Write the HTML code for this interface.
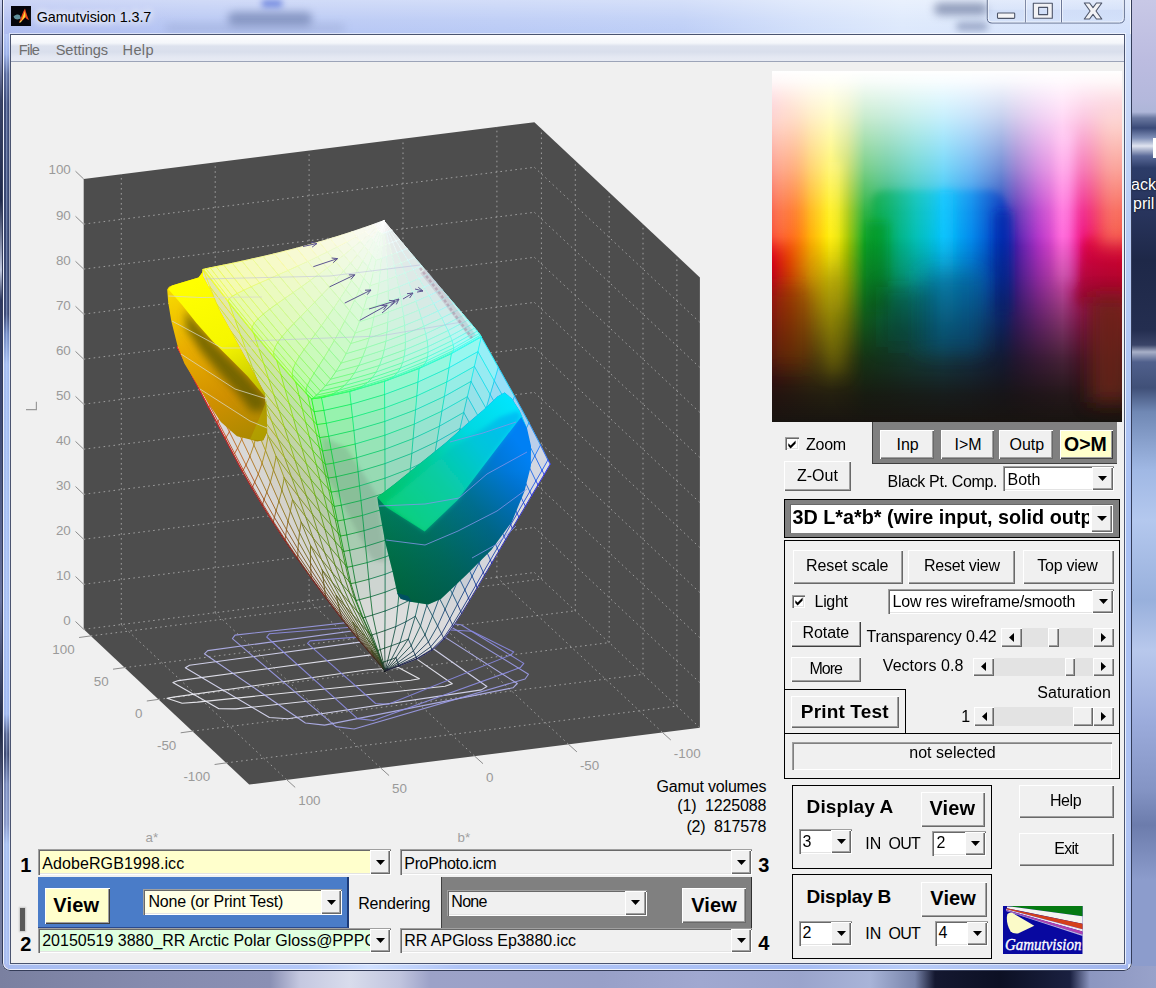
<!DOCTYPE html>
<html><head><meta charset="utf-8"><title>Gamutvision 1.3.7</title>
<style>
html,body{margin:0;padding:0;}
body{width:1156px;height:988px;overflow:hidden;position:relative;background:#8e94b6;font-family:"Liberation Sans",sans-serif;}
.t{position:absolute;white-space:pre;line-height:1;font-family:"Liberation Sans",sans-serif;}
div{box-sizing:border-box;}
svg{display:block;}
</style></head><body>
<div style="position:absolute;left:0.0px;top:0.0px;width:4.0px;height:988.0px;background:linear-gradient(180deg,#c8d0f0 0,#8088b0 60px,#3a4468 100px,#202a4c 200px,#c0c8e0 270px,#303a60 300px,#404a74 420px,#6a74a0 600px,#39415f 690px,#202840 730px,#5a6288 790px,#8088aa 988px);"></div>
<div style="position:absolute;left:1131.0px;top:0.0px;width:25.0px;height:988.0px;background:linear-gradient(180deg,#c8c8e6 0,#bcbce0 60px,#b4b8dc 100px,#aeb6d8 112px,#6a78a0 118px,#3a4a78 128px,#8090b8 138px,#e0e4f0 146px,#5a6a98 156px,#2c3c68 168px,#28345c 215px,#1e2848 260px,#242e50 330px,#3a4468 345px,#a8b0c8 352px,#50608c 362px,#405078 388px,#7088b4 412px,#a0b8e4 470px,#b4c8ee 520px,#98b0dc 600px,#b8c8ec 650px,#9cacdc 720px,#8494c4 790px,#6c7cac 825px,#8c9ccc 880px,#8c9ccc 988px);overflow:hidden;"><div class="t" style="left:0px;top:177px;font-size:16px;color:#fff;text-shadow:0 0 2px #000;">ackup</div><div class="t" style="left:2px;top:196px;font-size:16px;color:#fff;text-shadow:0 0 2px #000;">pril</div><div style="position:absolute;left:22px;top:138px;width:4px;height:20px;background:#fff;"></div></div>
<div style="position:absolute;left:0.0px;top:966.0px;width:1156.0px;height:22.0px;background:linear-gradient(90deg,#7a80a0 0,#858bae 150px,#8a90b4 270px,#c4c8e0 300px,#d8dcec 350px,#c0c4de 400px,#9ca2c8 430px,#98a0c8 600px,#a0a8d0 700px,#9aa4cc 800px,#a8b4d8 870px,#7884aa 915px,#141830 935px,#0c1024 1000px,#1a2040 1070px,#8c96c0 1090px,#98a2ca 1156px);"></div><div style="position:absolute;left:2px;top:-10px;width:1130px;height:981px;border-radius:8px;background:linear-gradient(180deg,rgba(255,255,255,.38) 10px,rgba(255,255,255,.12) 30px,rgba(255,255,255,0) 46px),linear-gradient(90deg,#aebcf0 0,#b4c4f3 200px,#b8c9f5 500px,#bccdf6 680px,#d0defa 800px,#dce8fc 900px,#d2e0fb 1130px);box-shadow:inset 0 0 0 1px #343c58,inset 0 0 0 2px rgba(255,255,255,.75);"></div>
<div style="position:absolute;left:4.0px;top:34.0px;width:6.5px;height:930.0px;background:linear-gradient(90deg,rgba(255,255,255,0) 1.5px,rgba(200,220,255,.4) 2.5px,rgba(255,255,255,0) 4px),linear-gradient(180deg,#b4c4f4 0,#9cb0e8 20px,#5a6a9c 40px,#3e4c7a 70px,#36446f 200px,#3c4a76 280px,#7088c0 300px,#a4bcf0 330px,#a8c0f4 600px,#a0b8f0 680px,#56648f 700px,#3e4a72 720px,#7888b8 750px,#8898c8 790px,#a8c0f0 810px,#a8bcf0 930px);"></div>
<div style="position:absolute;left:1125.5px;top:34.0px;width:5.5px;height:930.0px;background:linear-gradient(180deg,#d0defa,#b8ccf6 200px,#a8c0f4 500px,#b0c4f4 800px,#a8bcf0);"></div>
<div style="position:absolute;left:8.0px;top:963.5px;width:1120.0px;height:5.5px;background:linear-gradient(90deg,#a8bcf0,#b4c8f8 300px,#d0e0ff 360px,#b0c4f6 450px,#a8bef4 800px,#b8ccf8 900px,#a0b4ec 1120px);"></div>
<div style="position:absolute;left:228px;top:12px;width:84px;height:14px;background:#5a6c9c;opacity:.55;filter:blur(4px);border-radius:6px;"></div>
<div style="position:absolute;left:262px;top:0px;width:20px;height:7px;background:#3050d0;opacity:.6;filter:blur(3px);"></div>
<div style="position:absolute;left:934px;top:3px;width:54px;height:12px;background:#56648c;opacity:.6;filter:blur(4px);border-radius:6px;"></div>
<div style="position:absolute;left:956px;top:22px;width:32px;height:9px;background:#6a78a0;opacity:.55;filter:blur(3.5px);border-radius:5px;"></div>
<div style="position:absolute;left:165px;top:24px;width:180px;height:8px;background:#8a98c0;opacity:.35;filter:blur(4px);border-radius:5px;"></div>
<div style="position:absolute;left:10.0px;top:34.0px;width:1115.3px;height:929.5px;background:#f0f0f0;border:1px solid #4a5470;box-shadow:0 0 0 1px rgba(255,255,255,.55);"></div>
<div style="position:absolute;left:11.0px;top:35.0px;width:1113.3px;height:27.3px;background:linear-gradient(180deg,#fdfdfe 0,#f4f6fa 8px,#dde2ee 11px,#d9dfec 17px,#e4e8f2 22px,#e8ebf4 27px);border-bottom:1px solid #9ca4b8;"></div>
<div class="t" style="left:18.80px;top:42.54px;font-size:14.60px;letter-spacing:-0.775px;color:#6e6e6e;">File</div>
<div class="t" style="left:55.70px;top:42.54px;font-size:14.60px;letter-spacing:-0.051px;color:#6e6e6e;">Settings</div>
<div class="t" style="left:122.50px;top:42.54px;font-size:14.60px;letter-spacing:0.358px;color:#6e6e6e;">Help</div>
<svg style="position:absolute;left:10.7px;top:6px" width="20.5" height="20" viewBox="0 0 20.5 20"><rect width="20.5" height="20" fill="#05050a"/>
<path d="M2.5 10.5C5 8.5 7 8 8.8 9.2L10 12.5L6.5 13.5C4.5 13.5 3 12.5 2.5 10.5Z" fill="#5f8f9a"/>
<path d="M8 16.5C10 12 11.5 6 14 2.5C15 6 16 10 18 14C16.5 13.5 15.2 12.5 14.2 11.2C12.5 13.5 10.5 15.5 8 16.5Z" fill="#e8451a"/>
<path d="M10.2 14.8C11.6 12 12.6 8 13.9 5C14.3 8 14.8 10.5 13.9 11.3C12.8 12.8 11.6 14 10.2 14.8Z" fill="#ffd030"/>
<path d="M8 16.8C9.2 15.2 10.2 14.2 11.4 13.8L10 16.3Z" fill="#ffe860"/>
</svg>
<div class="t" style="left:36.70px;top:10.11px;font-size:14.40px;letter-spacing:-0.085px;color:#000;text-shadow:0 0 6px #fff,0 0 9px #fff,0 0 12px rgba(255,255,255,.9);">Gamutvision 1.3.7</div>
<svg style="position:absolute;left:985px;top:0" width="142" height="26" viewBox="985 0 142 26">
<defs><linearGradient id="cb" x1="0" y1="0" x2="0" y2="1"><stop offset="0" stop-color="#e4ecfc" stop-opacity=".75"/><stop offset=".45" stop-color="#d4e0f8" stop-opacity=".55"/><stop offset=".5" stop-color="#c4d4f4" stop-opacity=".5"/><stop offset="1" stop-color="#d4e2fa" stop-opacity=".7"/></linearGradient></defs>
<path d="M987.3 -2V18.5Q987.3 23 992 23H1119.5Q1124.3 23 1124.3 18.5V-2Z" fill="url(#cb)" stroke="#5c6888" stroke-width="1"/>
<path d="M988.3 -2V18.2Q988.3 22 992 22H1119.5Q1123.3 22 1123.3 18.2V-2" fill="none" stroke="#fff" stroke-opacity=".6" stroke-width="1"/>
<path d="M1025.4 0V22.5M1061.5 0V22.5" stroke="#6c7898" stroke-width="1"/>
<path d="M1026.4 0V22M1062.5 0V22M1024.4 0V22M1060.5 0V22" stroke="#fff" stroke-opacity=".5" stroke-width="1"/>
<rect x="997.5" y="13" width="17.2" height="5.4" rx=".8" fill="#f4f4f6" stroke="#4c5468" stroke-width="1.1"/>
<path d="M1033.3 3.3H1052.3V18.3H1033.3ZM1038.6 7.4V14.6H1047.6V7.4Z" fill="#f2f2f5" fill-rule="evenodd" stroke="#4c5468" stroke-width="1.1" stroke-linejoin="round"/>
<path d="M1084.3 3H1089.6L1093 7.6L1096.4 3H1101.8L1096 11L1101.8 19H1096.4L1093 14.4L1089.6 19H1084.3L1090.1 11Z" fill="#f2f2f5" stroke="#4c5468" stroke-width="1.1" stroke-linejoin="round"/>
</svg><div id="client" style="position:absolute;left:0;top:0;width:1156px;height:988px;"><svg style="position:absolute;left:0;top:0" width="780" height="850" viewBox="0 0 780 850"><defs><filter id="bl3" x="-20%" y="-20%" width="140%" height="140%"><feGaussianBlur stdDeviation="4"/></filter><filter id="bl2" x="-10%" y="-10%" width="120%" height="120%"><feGaussianBlur stdDeviation="2.2"/></filter><linearGradient id="yg1" gradientUnits="userSpaceOnUse" x1="175" y1="285" x2="245" y2="445"><stop offset="0" stop-color="#f8dc00"/><stop offset=".35" stop-color="#eaae00"/><stop offset=".7" stop-color="#d09000"/><stop offset="1" stop-color="#a88800"/></linearGradient><linearGradient id="yg2" gradientUnits="userSpaceOnUse" x1="217" y1="338" x2="196" y2="357"><stop offset="0" stop-color="#646000" stop-opacity=".9"/><stop offset=".3" stop-color="#706800" stop-opacity=".7"/><stop offset=".65" stop-color="#806800" stop-opacity=".3"/><stop offset="1" stop-color="#a07000" stop-opacity="0"/></linearGradient><linearGradient id="yg3" gradientUnits="userSpaceOnUse" x1="200" y1="280" x2="262" y2="420"><stop offset="0" stop-color="#ffff00"/><stop offset=".45" stop-color="#f6f600"/><stop offset=".8" stop-color="#c4c400"/><stop offset="1" stop-color="#8c8c00"/></linearGradient><clipPath id="ycl"><path d="M167.2 289.5L169.0 286.8L172.0 285.6L198.6 277.6L203.0 271.5L203.0 276.3L210.7 290.5L218.8 308.7L231.0 331.0L243.1 353.2L255.3 375.5L264.4 392.7L266.6 411.9L267.2 432.2L263.4 440.3L257.3 441.6L251.2 439.8L237.0 436.2L220.9 422.1L208.7 403.8L196.6 383.6L184.4 363.4L177.3 345.1L171.3 320.9L168.2 302.6L167.2 289.5Z" /></clipPath><linearGradient id="gg1" gradientUnits="userSpaceOnUse" x1="380" y1="560" x2="530" y2="460"><stop offset="0" stop-color="#008c50"/><stop offset=".3" stop-color="#008470"/><stop offset=".6" stop-color="#00789c"/><stop offset=".85" stop-color="#0078d8"/><stop offset="1" stop-color="#0080f4"/></linearGradient><linearGradient id="gg2" gradientUnits="userSpaceOnUse" x1="0" y1="470" x2="0" y2="605"><stop offset="0" stop-color="#000" stop-opacity="0"/><stop offset="1" stop-color="#001020" stop-opacity=".36"/></linearGradient><linearGradient id="gg3" gradientUnits="userSpaceOnUse" x1="385" y1="505" x2="520" y2="405"><stop offset="0" stop-color="#00c468"/><stop offset=".35" stop-color="#00cc98"/><stop offset=".65" stop-color="#00d8e0"/><stop offset="1" stop-color="#00e6ff"/></linearGradient><linearGradient id="gg4" gradientUnits="userSpaceOnUse" x1="395" y1="520" x2="515" y2="425"><stop offset="0" stop-color="#0cd888"/><stop offset=".4" stop-color="#0ccca8"/><stop offset=".75" stop-color="#08b8d8"/><stop offset="1" stop-color="#0aa8f0"/></linearGradient></defs><path d="M83.7 179.0L534.4 122.2L699.9 277.4L699.9 727.7L249.2 784.5L83.7 629.3Z" fill="#4d4d4d"/>
<path d="M121.3 624.6 L121.3 174.3 M121.3 624.6 L286.8 779.8 M215.2 612.8 L215.2 162.5 M215.2 612.8 L380.7 768.0 M309.1 600.9 L309.1 150.6 M309.1 600.9 L474.6 756.1 M403.0 589.1 L403.0 138.8 M403.0 589.1 L568.5 744.3 M496.9 577.3 L496.9 127.0 M496.9 577.3 L662.4 732.4 M541.4 579.1 L541.4 128.8 M90.7 635.9 L541.4 579.1 M575.3 610.8 L575.3 160.5 M124.6 667.6 L575.3 610.8 M609.2 642.6 L609.2 192.3 M158.4 699.4 L609.2 642.6 M643.0 674.4 L643.0 224.1 M192.3 731.2 L643.0 674.4 M676.9 706.1 L676.9 255.8 M226.2 762.9 L676.9 706.1 M83.7 629.3 L534.4 572.5 M534.4 572.5 L699.9 727.7 M83.7 584.3 L534.4 527.5 M534.4 527.5 L699.9 682.7 M83.7 539.3 L534.4 482.5 M534.4 482.5 L699.9 637.7 M83.7 494.3 L534.4 437.4 M534.4 437.4 L699.9 592.6 M83.7 449.2 L534.4 392.4 M534.4 392.4 L699.9 547.6 M83.7 404.2 L534.4 347.4 M534.4 347.4 L699.9 502.6 M83.7 359.2 L534.4 302.4 M534.4 302.4 L699.9 457.5 M83.7 314.1 L534.4 257.3 M534.4 257.3 L699.9 412.5 M83.7 269.1 L534.4 212.3 M534.4 212.3 L699.9 367.5 M83.7 224.1 L534.4 167.3 M534.4 167.3 L699.9 322.4" stroke="#b4b4b4" stroke-width="1" stroke-dasharray="1.6 3.4" fill="none" opacity=".8"/>
<path d="M83.7 629.3 l-8.2 -7.8 M83.7 584.3 l-8.2 -7.8 M83.7 539.3 l-8.2 -7.8 M83.7 494.3 l-8.2 -7.8 M83.7 449.2 l-8.2 -7.8 M83.7 404.2 l-8.2 -7.8 M83.7 359.2 l-8.2 -7.8 M83.7 314.1 l-8.2 -7.8 M83.7 269.1 l-8.2 -7.8 M83.7 224.1 l-8.2 -7.8 M83.7 179.0 l-8.2 -7.8 M90.7 635.9 l-11.6 1.6 M124.6 667.6 l-11.6 1.6 M158.4 699.4 l-11.6 1.6 M192.3 731.2 l-11.6 1.6 M226.2 762.9 l-11.6 1.6 M286.8 779.8 l8.4 7.6 M380.7 768.0 l8.4 7.6 M474.6 756.1 l8.4 7.6 M568.5 744.3 l8.4 7.6 M662.4 732.4 l8.4 7.6" stroke="#8c8c8c" stroke-width="1" fill="none"/>
<g font-family="Liberation Sans, sans-serif" font-size="13.4" fill="#9a9a9a"><text x="70.8" y="624.7" text-anchor="end">0</text><text x="70.8" y="579.7" text-anchor="end">10</text><text x="70.8" y="534.7" text-anchor="end">20</text><text x="70.8" y="489.7" text-anchor="end">30</text><text x="70.8" y="444.6" text-anchor="end">40</text><text x="70.8" y="399.6" text-anchor="end">50</text><text x="70.8" y="354.6" text-anchor="end">60</text><text x="70.8" y="309.5" text-anchor="end">70</text><text x="70.8" y="264.5" text-anchor="end">80</text><text x="70.8" y="219.5" text-anchor="end">90</text><text x="70.8" y="174.4" text-anchor="end">100</text><text x="74.7" y="654.2" text-anchor="end">100</text><text x="108.6" y="685.9" text-anchor="end">50</text><text x="142.4" y="717.7" text-anchor="end">0</text><text x="176.3" y="749.5" text-anchor="end">-50</text><text x="210.2" y="781.2" text-anchor="end">-100</text><text x="298.2" y="805.2" text-anchor="start">100</text><text x="392.1" y="793.4" text-anchor="start">50</text><text x="486.0" y="781.5" text-anchor="start">0</text><text x="579.9" y="769.7" text-anchor="start">-50</text><text x="673.8" y="757.8" text-anchor="start">-100</text></g>
<path d="M26 409.6H36.4V401.8" stroke="#9a9a9a" stroke-width="1.2" fill="none"/><path d="M167.0 698.2L173.4 697.1L368.0 669.8L398.4 667.5L419.4 678.8L410.9 680.3L197.3 702.1L182.1 703.2Z" fill="none" stroke="#f4f4fa" stroke-width="1.1" stroke-linejoin="round" opacity=".9"/><path d="M172.9 682.4L178.4 680.6L376.5 654.1L410.4 654.6L452.3 683.8L445.0 686.2L235.9 708.9L218.9 708.7Z" fill="none" stroke="#eeeefa" stroke-width="1.1" stroke-linejoin="round" opacity=".9"/><path d="M185.3 667.7L189.5 665.2L385.7 638.6L422.6 641.3L486.9 686.5L481.3 689.9L287.8 718.8L269.4 717.5Z" fill="none" stroke="#dedef8" stroke-width="1.1" stroke-linejoin="round" opacity=".9"/><path d="M204.4 653.8L207.7 650.6L394.3 625.3L432.8 629.4L517.3 683.5L513.0 687.8L324.6 725.1L305.4 723.0Z" fill="none" stroke="#b4b4f0" stroke-width="1.1" stroke-linejoin="round" opacity=".9"/><path d="M232.4 638.6L235.0 635.1L404.9 616.1L441.4 621.0L528.5 674.2L525.1 679.0L354.1 729.0L335.9 726.6Z" fill="none" stroke="#9c9ce8" stroke-width="1.1" stroke-linejoin="round" opacity=".9"/><path d="M266.7 637.0L269.3 633.8L429.5 621.0L461.0 624.7L523.8 663.4L520.3 667.6L373.4 720.5L357.6 718.6Z" fill="none" stroke="#8e8ee4" stroke-width="1.1" stroke-linejoin="round" opacity=".9"/><path d="M307.5 643.3L310.0 640.9L446.7 629.8L472.0 631.2L513.8 651.9L510.4 655.1L388.3 704.2L375.6 703.5Z" fill="none" stroke="#8888e0" stroke-width="1.1" stroke-linejoin="round" opacity=".9"/><g stroke-width=".7" stroke-linejoin="round"><path d="M385.0 671.0L385.0 671.0L382.7 668.1L382.7 668.2Z" fill="#d9d9d9" stroke="#d9d9d9"/><path d="M382.7 668.2L382.7 668.1L374.4 658.2L374.4 658.3Z" fill="#d9d9d9" stroke="#d9d9d9"/><path d="M374.4 658.3L374.4 658.2L359.0 640.1L359.1 640.5Z" fill="#d9d9d9" stroke="#d9d9d9"/><path d="M359.1 640.5L359.0 640.1L341.8 618.5L341.8 619.1Z" fill="#d9d9d9" stroke="#d9d9d9"/><path d="M341.8 619.1L341.8 618.5L325.9 597.4L325.9 598.1Z" fill="#d9d9d9" stroke="#d9d9d9"/><path d="M325.9 598.1L325.9 597.4L311.2 577.3L311.2 578.1Z" fill="#d9d9d9" stroke="#d9d9d9"/><path d="M311.2 578.1L311.2 577.3L297.7 558.1L297.5 558.9Z" fill="#d9d9d9" stroke="#d9d9d9"/><path d="M297.5 558.9L297.7 558.1L285.1 539.5L284.8 540.4Z" fill="#d9d9d9" stroke="#d9d9d9"/><path d="M284.8 540.4L285.1 539.5L273.4 521.5L273.0 522.4Z" fill="#d9d9d9" stroke="#d9d9d9"/><path d="M273.0 522.4L273.4 521.5L262.6 503.9L262.0 504.9Z" fill="#d9d9d9" stroke="#d9d9d9"/><path d="M262.0 504.9L262.6 503.9L252.6 486.7L251.8 487.8Z" fill="#d9d9d9" stroke="#d9d9d9"/><path d="M251.8 487.8L252.6 486.7L243.3 469.9L242.3 471.1Z" fill="#d9d9d9" stroke="#d9d9d9"/><path d="M242.3 471.1L243.3 469.9L234.6 453.4L233.5 454.6Z" fill="#d9d9d9" stroke="#d9d9d9"/><path d="M233.5 454.6L234.6 453.4L226.2 437.2L225.1 438.5Z" fill="#d9d9d9" stroke="#d9d9d9"/><path d="M225.1 438.5L226.2 437.2L218.0 421.4L216.8 422.6Z" fill="#d9d9d9" stroke="#d9d9d9"/><path d="M216.8 422.6L218.0 421.4L209.9 405.8L208.6 407.1Z" fill="#d9d9d9" stroke="#d9d9d9"/><path d="M208.6 407.1L209.9 405.8L201.9 390.5L200.6 391.8Z" fill="#d9d9d9" stroke="#d9d9d9"/><path d="M200.6 391.8L201.9 390.5L194.1 375.4L192.7 376.7Z" fill="#d9d9d9" stroke="#d9d9d9"/><path d="M192.7 376.7L194.1 375.4L186.3 360.5L185.0 361.8Z" fill="#d9d9d9" stroke="#d9d9d9"/><path d="M185.0 361.8L186.3 360.5L178.7 345.9L177.3 347.2Z" fill="#d9d9d9" stroke="#d9d9d9"/><path d="M385.0 671.0L385.0 671.0L382.7 668.0L382.7 668.1Z" fill="#d9d9d9" stroke="#d9d9d9"/><path d="M382.7 668.1L382.7 668.0L374.2 657.6L374.4 658.2Z" fill="#d9d9d9" stroke="#d9d9d9"/><path d="M374.4 658.2L374.2 657.6L358.6 638.8L359.0 640.1Z" fill="#d9d9d9" stroke="#d9d9d9"/><path d="M359.0 640.1L358.6 638.8L341.3 616.4L341.8 618.5Z" fill="#d9d9d9" stroke="#d9d9d9"/><path d="M341.8 618.5L341.3 616.4L325.5 594.9L325.9 597.4Z" fill="#d9d9d9" stroke="#d9d9d9"/><path d="M325.9 597.4L325.5 594.9L311.1 574.5L311.2 577.3Z" fill="#d9d9d9" stroke="#d9d9d9"/><path d="M311.2 577.3L311.1 574.5L297.8 554.9L297.7 558.1Z" fill="#d9d9d9" stroke="#d9d9d9"/><path d="M297.7 558.1L297.8 554.9L285.6 535.9L285.1 539.5Z" fill="#d9d9d9" stroke="#d9d9d9"/><path d="M285.1 539.5L285.6 535.9L274.4 517.5L273.4 521.5Z" fill="#d9d9d9" stroke="#d9d9d9"/><path d="M273.4 521.5L274.4 517.5L264.1 499.6L262.6 503.9Z" fill="#d9d9d9" stroke="#d9d9d9"/><path d="M262.6 503.9L264.1 499.6L254.7 482.1L252.6 486.7Z" fill="#d9d9d9" stroke="#d9d9d9"/><path d="M252.6 486.7L254.7 482.1L246.0 465.0L243.3 469.9Z" fill="#d9d9d9" stroke="#d9d9d9"/><path d="M243.3 469.9L246.0 465.0L237.6 448.2L234.6 453.4Z" fill="#d9d9d9" stroke="#d9d9d9"/><path d="M234.6 453.4L237.6 448.2L229.4 431.8L226.2 437.2Z" fill="#d9d9d9" stroke="#d9d9d9"/><path d="M226.2 437.2L229.4 431.8L221.3 415.7L218.0 421.4Z" fill="#d9d9d9" stroke="#d9d9d9"/><path d="M218.0 421.4L221.3 415.7L213.3 399.9L209.9 405.8Z" fill="#d9d9d9" stroke="#d9d9d9"/><path d="M209.9 405.8L213.3 399.9L205.5 384.3L201.9 390.5Z" fill="#d9d9d9" stroke="#d9d9d9"/><path d="M201.9 390.5L205.5 384.3L197.8 369.0L194.1 375.4Z" fill="#d9d9d9" stroke="#d9d9d9"/><path d="M194.1 375.4L197.8 369.0L190.2 354.0L186.3 360.5Z" fill="#d9d9d9" stroke="#d9d9d9"/><path d="M186.3 360.5L190.2 354.0L182.7 339.2L178.7 345.9Z" fill="#d9d9d9" stroke="#d9d9d9"/><path d="M385.0 671.0L385.0 671.0L382.6 667.8L382.7 668.0Z" fill="#d9d9d9" stroke="#d9d9d9"/><path d="M382.7 668.0L382.6 667.8L373.8 656.6L374.2 657.6Z" fill="#d9d9d9" stroke="#d9d9d9"/><path d="M374.2 657.6L373.8 656.6L357.8 636.3L358.6 638.8Z" fill="#d9d9d9" stroke="#d9d9d9"/><path d="M358.6 638.8L357.8 636.3L340.4 612.8L341.3 616.4Z" fill="#d9d9d9" stroke="#d9d9d9"/><path d="M341.3 616.4L340.4 612.8L324.8 590.7L325.5 594.9Z" fill="#d9d9d9" stroke="#d9d9d9"/><path d="M325.5 594.9L324.8 590.7L310.8 569.6L311.1 574.5Z" fill="#d9d9d9" stroke="#d9d9d9"/><path d="M311.1 574.5L310.8 569.6L298.0 549.3L297.8 554.9Z" fill="#d9d9d9" stroke="#d9d9d9"/><path d="M297.8 554.9L298.0 549.3L286.5 529.7L285.6 535.9Z" fill="#d9d9d9" stroke="#d9d9d9"/><path d="M285.6 535.9L286.5 529.7L276.1 510.7L274.4 517.5Z" fill="#d9d9d9" stroke="#d9d9d9"/><path d="M274.4 517.5L276.1 510.7L266.8 492.2L264.1 499.6Z" fill="#d9d9d9" stroke="#d9d9d9"/><path d="M264.1 499.6L266.8 492.2L258.3 474.1L254.7 482.1Z" fill="#d9d9d9" stroke="#d9d9d9"/><path d="M254.7 482.1L258.3 474.1L249.9 456.4L246.0 465.0Z" fill="#d9d9d9" stroke="#d9d9d9"/><path d="M246.0 465.0L249.9 456.4L241.7 439.2L237.6 448.2Z" fill="#d9d9d9" stroke="#d9d9d9"/><path d="M237.6 448.2L241.7 439.2L233.7 422.3L229.4 431.8Z" fill="#d9d9d9" stroke="#d9d9d9"/><path d="M229.4 431.8L233.7 422.3L225.8 405.8L221.3 415.7Z" fill="#d9d9d9" stroke="#d9d9d9"/><path d="M221.3 415.7L225.8 405.8L218.0 389.5L213.3 399.9Z" fill="#d9d9d9" stroke="#d9d9d9"/><path d="M213.3 399.9L218.0 389.5L210.4 373.6L205.5 384.3Z" fill="#d9d9d9" stroke="#d9d9d9"/><path d="M205.5 384.3L210.4 373.6L202.9 357.9L197.8 369.0Z" fill="#d9d9d9" stroke="#d9d9d9"/><path d="M197.8 369.0L202.9 357.9L195.5 342.4L190.2 354.0Z" fill="#d9d9d9" stroke="#d9d9d9"/><path d="M190.2 354.0L195.5 342.4L188.2 327.2L182.7 339.2Z" fill="#d9d9d9" stroke="#d9d9d9"/><path d="M385.0 671.0L385.0 671.0L382.5 667.4L382.6 667.8Z" fill="#d9d9d9" stroke="#d9d9d9"/><path d="M382.6 667.8L382.5 667.4L373.2 655.0L373.8 656.6Z" fill="#d9d9d9" stroke="#d9d9d9"/><path d="M373.8 656.6L373.2 655.0L356.5 632.6L357.8 636.3Z" fill="#d9d9d9" stroke="#d9d9d9"/><path d="M357.8 636.3L356.5 632.6L339.2 608.0L340.4 612.8Z" fill="#d9d9d9" stroke="#d9d9d9"/><path d="M340.4 612.8L339.2 608.0L324.0 584.9L324.8 590.7Z" fill="#d9d9d9" stroke="#d9d9d9"/><path d="M324.8 590.7L324.0 584.9L310.5 562.9L310.8 569.6Z" fill="#d9d8d8" stroke="#d9d8d8"/><path d="M310.8 569.6L310.5 562.9L298.5 541.8L298.0 549.3Z" fill="#d8d8d7" stroke="#d8d8d7"/><path d="M298.0 549.3L298.5 541.8L288.0 521.3L286.5 529.7Z" fill="#d8d7d6" stroke="#d8d7d6"/><path d="M286.5 529.7L288.0 521.3L278.9 501.4L276.1 510.7Z" fill="#d7d6d5" stroke="#d7d6d5"/><path d="M276.1 510.7L278.9 501.4L270.4 482.1L266.8 492.2Z" fill="#d7d6d4" stroke="#d7d6d4"/><path d="M266.8 492.2L270.4 482.1L262.1 463.3L258.3 474.1Z" fill="#d7d6d3" stroke="#d7d6d3"/><path d="M258.3 474.1L262.1 463.3L253.9 445.0L249.9 456.4Z" fill="#d8d6d3" stroke="#d8d6d3"/><path d="M249.9 456.4L253.9 445.0L246.0 427.1L241.7 439.2Z" fill="#d8d6d3" stroke="#d8d6d3"/><path d="M241.7 439.2L246.0 427.1L238.2 409.5L233.7 422.3Z" fill="#d8d6d3" stroke="#d8d6d3"/><path d="M233.7 422.3L238.2 409.5L230.5 392.4L225.8 405.8Z" fill="#d9d6d3" stroke="#d9d6d3"/><path d="M225.8 405.8L230.5 392.4L223.0 375.5L218.0 389.5Z" fill="#d9d6d3" stroke="#d9d6d3"/><path d="M218.0 389.5L223.0 375.5L215.6 359.0L210.4 373.6Z" fill="#dad7d3" stroke="#dad7d3"/><path d="M210.4 373.6L215.6 359.0L208.3 342.7L202.9 357.9Z" fill="#dad7d3" stroke="#dad7d3"/><path d="M202.9 357.9L208.3 342.7L201.1 326.7L195.5 342.4Z" fill="#dbd7d3" stroke="#dbd7d3"/><path d="M195.5 342.4L201.1 326.7L193.9 311.0L188.2 327.2Z" fill="#dbd7d3" stroke="#dbd7d3"/><path d="M385.0 671.0L385.0 671.0L382.4 667.0L382.5 667.4Z" fill="#d9d9d9" stroke="#d9d9d9"/><path d="M382.5 667.4L382.4 667.0L372.4 652.8L373.2 655.0Z" fill="#d9d9d9" stroke="#d9d9d9"/><path d="M373.2 655.0L372.4 652.8L354.9 627.9L356.5 632.6Z" fill="#d9d9d9" stroke="#d9d9d9"/><path d="M356.5 632.6L354.9 627.9L337.8 602.1L339.2 608.0Z" fill="#d9d9d9" stroke="#d9d9d9"/><path d="M339.2 608.0L337.8 602.1L323.1 577.9L324.0 584.9Z" fill="#d9d9d9" stroke="#d9d9d9"/><path d="M324.0 584.9L323.1 577.9L310.4 554.8L310.5 562.9Z" fill="#d8d8d7" stroke="#d8d8d7"/><path d="M310.5 562.9L310.4 554.8L299.5 532.6L298.5 541.8Z" fill="#d6d6d4" stroke="#d6d6d4"/><path d="M298.5 541.8L299.5 532.6L290.4 511.1L288.0 521.3Z" fill="#d5d4d0" stroke="#d5d4d0"/><path d="M288.0 521.3L290.4 511.1L281.9 490.2L278.9 501.4Z" fill="#d4d2cc" stroke="#d4d2cc"/><path d="M278.9 501.4L281.9 490.2L273.5 470.0L270.4 482.1Z" fill="#d3d1c9" stroke="#d3d1c9"/><path d="M270.4 482.1L273.5 470.0L265.5 450.4L262.1 463.3Z" fill="#d3d0c6" stroke="#d3d0c6"/><path d="M262.1 463.3L265.5 450.4L257.5 431.3L253.9 445.0Z" fill="#d4d0c4" stroke="#d4d0c4"/><path d="M253.9 445.0L257.5 431.3L249.8 412.6L246.0 427.1Z" fill="#d6d1c4" stroke="#d6d1c4"/><path d="M246.0 427.1L249.8 412.6L242.2 394.3L238.2 409.5Z" fill="#d7d2c4" stroke="#d7d2c4"/><path d="M238.2 409.5L242.2 394.3L234.7 376.4L230.5 392.4Z" fill="#d8d3c4" stroke="#d8d3c4"/><path d="M230.5 392.4L234.7 376.4L227.4 358.8L223.0 375.5Z" fill="#dad4c4" stroke="#dad4c4"/><path d="M223.0 375.5L227.4 358.8L220.2 341.5L215.6 359.0Z" fill="#dbd5c4" stroke="#dbd5c4"/><path d="M215.6 359.0L220.2 341.5L213.0 324.6L208.3 342.7Z" fill="#ddd7c4" stroke="#ddd7c4"/><path d="M208.3 342.7L213.0 324.6L206.0 307.9L201.1 326.7Z" fill="#ded8c4" stroke="#ded8c4"/><path d="M201.1 326.7L206.0 307.9L199.0 291.5L193.9 311.0Z" fill="#e0d9c4" stroke="#e0d9c4"/><path d="M385.0 671.0L385.0 671.0L382.2 666.4L382.4 667.0Z" fill="#d9d9d9" stroke="#d9d9d9"/><path d="M382.4 667.0L382.2 666.4L371.4 650.1L372.4 652.8Z" fill="#d9d9d9" stroke="#d9d9d9"/><path d="M372.4 652.8L371.4 650.1L353.1 622.6L354.9 627.9Z" fill="#d9d9d9" stroke="#d9d9d9"/><path d="M354.9 627.9L353.1 622.6L336.3 595.5L337.8 602.1Z" fill="#d9d9d9" stroke="#d9d9d9"/><path d="M337.8 602.1L336.3 595.5L322.2 570.0L323.1 577.9Z" fill="#d9d9d9" stroke="#d9d9d9"/><path d="M323.1 577.9L322.2 570.0L310.6 545.6L310.4 554.8Z" fill="#d7d7d6" stroke="#d7d7d6"/><path d="M310.4 554.8L310.6 545.6L301.2 522.2L299.5 532.6Z" fill="#d4d4d0" stroke="#d4d4d0"/><path d="M299.5 532.6L301.2 522.2L292.5 499.5L290.4 511.1Z" fill="#d1d1ca" stroke="#d1d1ca"/><path d="M290.4 511.1L292.5 499.5L284.2 477.7L281.9 490.2Z" fill="#cfcec3" stroke="#cfcec3"/><path d="M281.9 490.2L284.2 477.7L276.1 456.5L273.5 470.0Z" fill="#cfcdbc" stroke="#cfcdbc"/><path d="M273.5 470.0L276.1 456.5L268.1 435.9L265.5 450.4Z" fill="#cfcdb7" stroke="#cfcdb7"/><path d="M265.5 450.4L268.1 435.9L260.4 415.9L257.5 431.3Z" fill="#d1ceb4" stroke="#d1ceb4"/><path d="M257.5 431.3L260.4 415.9L252.8 396.3L249.8 412.6Z" fill="#d3d0b4" stroke="#d3d0b4"/><path d="M249.8 412.6L252.8 396.3L245.4 377.1L242.2 394.3Z" fill="#d6d3b4" stroke="#d6d3b4"/><path d="M242.2 394.3L245.4 377.1L238.1 358.4L234.7 376.4Z" fill="#d8d5b4" stroke="#d8d5b4"/><path d="M234.7 376.4L238.1 358.4L230.9 340.0L227.4 358.8Z" fill="#dbd7b4" stroke="#dbd7b4"/><path d="M227.4 358.8L230.9 340.0L223.8 321.9L220.2 341.5Z" fill="#dddab4" stroke="#dddab4"/><path d="M220.2 341.5L223.8 321.9L216.8 304.2L213.0 324.6Z" fill="#e0dcb4" stroke="#e0dcb4"/><path d="M213.0 324.6L216.8 304.2L209.9 286.7L206.0 307.9Z" fill="#e2deb4" stroke="#e2deb4"/><path d="M206.0 307.9L209.9 286.7L203.1 269.6L199.0 291.5Z" fill="#e5e1b4" stroke="#e5e1b4"/><path d="M385.0 671.0L385.0 671.0L382.9 667.3L382.2 666.4Z" fill="#d9d9d9" stroke="#d9d9d9"/><path d="M382.2 666.4L382.9 667.3L374.9 654.2L371.4 650.1Z" fill="#d9d9d9" stroke="#d9d9d9"/><path d="M371.4 650.1L374.9 654.2L360.3 630.9L353.1 622.6Z" fill="#d9d9d9" stroke="#d9d9d9"/><path d="M353.1 622.6L360.3 630.9L344.9 605.8L336.3 595.5Z" fill="#d9d9d9" stroke="#d9d9d9"/><path d="M336.3 595.5L344.9 605.8L332.1 582.1L322.2 570.0Z" fill="#d9d9d8" stroke="#d9d9d8"/><path d="M322.2 570.0L332.1 582.1L321.5 559.5L310.6 545.6Z" fill="#d6d6d4" stroke="#d6d6d4"/><path d="M310.6 545.6L321.5 559.5L313.0 537.8L301.2 522.2Z" fill="#d2d3ce" stroke="#d2d3ce"/><path d="M301.2 522.2L313.0 537.8L305.6 516.7L292.5 499.5Z" fill="#cecfc5" stroke="#cecfc5"/><path d="M292.5 499.5L305.6 516.7L298.4 496.4L284.2 477.7Z" fill="#cbcdbc" stroke="#cbcdbc"/><path d="M284.2 477.7L298.4 496.4L291.4 476.7L276.1 456.5Z" fill="#c9cbb4" stroke="#c9cbb4"/><path d="M276.1 456.5L291.4 476.7L284.6 457.6L268.1 435.9Z" fill="#c9ccad" stroke="#c9ccad"/><path d="M268.1 435.9L284.6 457.6L278.0 438.9L260.4 415.9Z" fill="#cbcea9" stroke="#cbcea9"/><path d="M260.4 415.9L278.0 438.9L271.5 420.7L252.8 396.3Z" fill="#ced1a8" stroke="#ced1a8"/><path d="M252.8 396.3L271.5 420.7L265.1 402.9L245.4 377.1Z" fill="#d1d5a8" stroke="#d1d5a8"/><path d="M245.4 377.1L265.1 402.9L258.8 385.4L238.1 358.4Z" fill="#d4d8a8" stroke="#d4d8a8"/><path d="M238.1 358.4L258.8 385.4L252.7 368.3L230.9 340.0Z" fill="#d7dba8" stroke="#d7dba8"/><path d="M230.9 340.0L252.7 368.3L246.6 351.5L223.8 321.9Z" fill="#dadea8" stroke="#dadea8"/><path d="M223.8 321.9L246.6 351.5L240.6 334.9L216.8 304.2Z" fill="#dde2a8" stroke="#dde2a8"/><path d="M216.8 304.2L240.6 334.9L234.7 318.7L209.9 286.7Z" fill="#e0e5a8" stroke="#e0e5a8"/><path d="M209.9 286.7L234.7 318.7L228.8 302.7L203.1 269.6Z" fill="#e3e8a8" stroke="#e3e8a8"/><path d="M203.1 269.6L228.8 302.7L228.1 300.9L203.6 269.3Z" fill="#f2faa0" stroke="#f2faa0"/><path d="M203.6 269.3L228.1 300.9L229.3 298.7L206.0 268.7Z" fill="#f3faa5" stroke="#f3faa5"/><path d="M206.0 268.7L229.3 298.7L232.4 296.2L210.2 267.8Z" fill="#f3faa9" stroke="#f3faa9"/><path d="M210.2 267.8L232.4 296.2L237.3 293.4L216.2 266.6Z" fill="#f3faae" stroke="#f3faae"/><path d="M216.2 266.6L237.3 293.4L243.7 290.2L223.7 265.1Z" fill="#f4fab2" stroke="#f4fab2"/><path d="M223.7 265.1L243.7 290.2L251.2 286.7L232.4 263.3Z" fill="#f4fab7" stroke="#f4fab7"/><path d="M232.4 263.3L251.2 286.7L259.7 282.9L242.1 261.2Z" fill="#f5fabc" stroke="#f5fabc"/><path d="M242.1 261.2L259.7 282.9L268.8 279.0L252.4 258.9Z" fill="#f5fac0" stroke="#f5fac0"/><path d="M252.4 258.9L268.8 279.0L278.2 274.8L263.2 256.5Z" fill="#f5fac5" stroke="#f5fac5"/><path d="M263.2 256.5L278.2 274.8L288.0 270.5L274.2 253.9Z" fill="#f6fac9" stroke="#f6fac9"/><path d="M274.2 253.9L288.0 270.5L297.8 266.0L285.4 251.1Z" fill="#f6face" stroke="#f6face"/><path d="M285.4 251.1L297.8 266.0L307.7 261.4L296.7 248.2Z" fill="#f7fad3" stroke="#f7fad3"/><path d="M296.7 248.2L307.7 261.4L317.6 256.7L308.0 245.2Z" fill="#f7fad7" stroke="#f7fad7"/><path d="M308.0 245.2L317.6 256.7L327.4 251.9L319.2 242.0Z" fill="#f7fadc" stroke="#f7fadc"/><path d="M319.2 242.0L327.4 251.9L337.2 246.9L330.3 238.7Z" fill="#f8fae0" stroke="#f8fae0"/><path d="M330.3 238.7L337.2 246.9L346.8 241.9L341.3 235.3Z" fill="#f8fae5" stroke="#f8fae5"/><path d="M341.3 235.3L346.8 241.9L356.2 236.7L352.2 231.8Z" fill="#f8faea" stroke="#f8faea"/><path d="M352.2 231.8L356.2 236.7L365.6 231.5L362.9 228.2Z" fill="#f9faee" stroke="#f9faee"/><path d="M362.9 228.2L365.6 231.5L374.8 226.1L373.4 224.5Z" fill="#f9faf3" stroke="#f9faf3"/><path d="M373.4 224.5L374.8 226.1L383.8 220.7L383.8 220.7Z" fill="#fafaf7" stroke="#fafaf7"/><path d="M385.0 671.0L385.0 671.0L383.5 668.0L382.9 667.3Z" fill="#d9d9d9" stroke="#d9d9d9"/><path d="M382.9 667.3L383.5 668.0L377.7 657.4L374.9 654.2Z" fill="#d9d9d9" stroke="#d9d9d9"/><path d="M374.9 654.2L377.7 657.4L366.8 638.4L360.3 630.9Z" fill="#d9d9d9" stroke="#d9d9d9"/><path d="M360.3 630.9L366.8 638.4L353.2 615.4L344.9 605.8Z" fill="#d9d9d9" stroke="#d9d9d9"/><path d="M344.9 605.8L353.2 615.4L341.6 593.4L332.1 582.1Z" fill="#d9d9d8" stroke="#d9d9d8"/><path d="M332.1 582.1L341.6 593.4L332.1 572.5L321.5 559.5Z" fill="#d6d6d4" stroke="#d6d6d4"/><path d="M321.5 559.5L332.1 572.5L324.5 552.3L313.0 537.8Z" fill="#d1d2cd" stroke="#d1d2cd"/><path d="M313.0 537.8L324.5 552.3L318.2 532.8L305.6 516.7Z" fill="#cccfc4" stroke="#cccfc4"/><path d="M305.6 516.7L318.2 532.8L312.2 513.9L298.4 496.4Z" fill="#c8ccbb" stroke="#c8ccbb"/><path d="M298.4 496.4L312.2 513.9L306.3 495.6L291.4 476.7Z" fill="#c5cbb2" stroke="#c5cbb2"/><path d="M291.4 476.7L306.3 495.6L300.6 477.8L284.6 457.6Z" fill="#c3ccab" stroke="#c3ccab"/><path d="M284.6 457.6L300.6 477.8L295.1 460.4L278.0 438.9Z" fill="#c4cea7" stroke="#c4cea7"/><path d="M278.0 438.9L295.1 460.4L289.6 443.5L271.5 420.7Z" fill="#c6d1a6" stroke="#c6d1a6"/><path d="M271.5 420.7L289.6 443.5L284.3 426.9L265.1 402.9Z" fill="#c9d4a6" stroke="#c9d4a6"/><path d="M265.1 402.9L284.3 426.9L279.0 410.6L258.8 385.4Z" fill="#cbd8a6" stroke="#cbd8a6"/><path d="M258.8 385.4L279.0 410.6L273.8 394.7L252.7 368.3Z" fill="#cedba6" stroke="#cedba6"/><path d="M252.7 368.3L273.8 394.7L268.7 379.0L246.6 351.5Z" fill="#d1dfa6" stroke="#d1dfa6"/><path d="M246.6 351.5L268.7 379.0L263.7 363.6L240.6 334.9Z" fill="#d3e2a6" stroke="#d3e2a6"/><path d="M240.6 334.9L263.7 363.6L258.7 348.5L234.7 318.7Z" fill="#d6e5a6" stroke="#d6e5a6"/><path d="M234.7 318.7L258.7 348.5L253.8 333.6L228.8 302.7Z" fill="#d8e9a6" stroke="#d8e9a6"/><path d="M228.8 302.7L253.8 333.6L252.0 330.5L228.1 300.9Z" fill="#e3faa0" stroke="#e3faa0"/><path d="M228.1 300.9L252.0 330.5L252.1 327.0L229.3 298.7Z" fill="#e5faa5" stroke="#e5faa5"/><path d="M229.3 298.7L252.1 327.0L254.1 323.1L232.4 296.2Z" fill="#e6faa9" stroke="#e6faa9"/><path d="M232.4 296.2L254.1 323.1L258.0 318.8L237.3 293.4Z" fill="#e7faae" stroke="#e7faae"/><path d="M237.3 293.4L258.0 318.8L263.3 314.1L243.7 290.2Z" fill="#e8fab2" stroke="#e8fab2"/><path d="M243.7 290.2L263.3 314.1L269.7 309.1L251.2 286.7Z" fill="#e9fab7" stroke="#e9fab7"/><path d="M251.2 286.7L269.7 309.1L277.0 303.8L259.7 282.9Z" fill="#eafabc" stroke="#eafabc"/><path d="M259.7 282.9L277.0 303.8L284.9 298.3L268.8 279.0Z" fill="#ebfac0" stroke="#ebfac0"/><path d="M268.8 279.0L284.9 298.3L293.1 292.6L278.2 274.8Z" fill="#edfac5" stroke="#edfac5"/><path d="M278.2 274.8L293.1 292.6L301.5 286.7L288.0 270.5Z" fill="#eefac9" stroke="#eefac9"/><path d="M288.0 270.5L301.5 286.7L310.0 280.6L297.8 266.0Z" fill="#efface" stroke="#efface"/><path d="M297.8 266.0L310.0 280.6L318.6 274.4L307.7 261.4Z" fill="#f0fad3" stroke="#f0fad3"/><path d="M307.7 261.4L318.6 274.4L327.1 268.0L317.6 256.7Z" fill="#f1fad7" stroke="#f1fad7"/><path d="M317.6 256.7L327.1 268.0L335.6 261.6L327.4 251.9Z" fill="#f2fadc" stroke="#f2fadc"/><path d="M327.4 251.9L335.6 261.6L343.9 255.0L337.2 246.9Z" fill="#f3fae0" stroke="#f3fae0"/><path d="M337.2 246.9L343.9 255.0L352.2 248.3L346.8 241.9Z" fill="#f5fae5" stroke="#f5fae5"/><path d="M346.8 241.9L352.2 248.3L360.3 241.5L356.2 236.7Z" fill="#f6faea" stroke="#f6faea"/><path d="M356.2 236.7L360.3 241.5L368.3 234.7L365.6 231.5Z" fill="#f7faee" stroke="#f7faee"/><path d="M365.6 231.5L368.3 234.7L376.1 227.7L374.8 226.1Z" fill="#f8faf3" stroke="#f8faf3"/><path d="M374.8 226.1L376.1 227.7L383.8 220.7L383.8 220.7Z" fill="#f9faf7" stroke="#f9faf7"/><path d="M385.0 671.0L385.0 671.0L383.9 668.5L383.5 668.0Z" fill="#d9d9d9" stroke="#d9d9d9"/><path d="M383.5 668.0L383.9 668.5L379.7 659.8L377.7 657.4Z" fill="#d9d9d9" stroke="#d9d9d9"/><path d="M377.7 657.4L379.7 659.8L371.8 644.1L366.8 638.4Z" fill="#d9d9d9" stroke="#d9d9d9"/><path d="M366.8 638.4L371.8 644.1L360.7 623.8L353.2 615.4Z" fill="#d9d9d9" stroke="#d9d9d9"/><path d="M353.2 615.4L360.7 623.8L350.3 603.5L341.6 593.4Z" fill="#d8d9d8" stroke="#d8d9d8"/><path d="M341.6 593.4L350.3 603.5L341.8 584.0L332.1 572.5Z" fill="#d5d6d4" stroke="#d5d6d4"/><path d="M332.1 572.5L341.8 584.0L335.1 565.2L324.5 552.3Z" fill="#d0d2cd" stroke="#d0d2cd"/><path d="M324.5 552.3L335.1 565.2L329.8 547.0L318.2 532.8Z" fill="#cacfc4" stroke="#cacfc4"/><path d="M318.2 532.8L329.8 547.0L324.9 529.3L312.2 513.9Z" fill="#c5ccbb" stroke="#c5ccbb"/><path d="M312.2 513.9L324.9 529.3L320.0 512.2L306.3 495.6Z" fill="#c1cbb2" stroke="#c1cbb2"/><path d="M306.3 495.6L320.0 512.2L315.3 495.6L300.6 477.8Z" fill="#beccab" stroke="#beccab"/><path d="M300.6 477.8L315.3 495.6L310.8 479.4L295.1 460.4Z" fill="#becea7" stroke="#becea7"/><path d="M295.1 460.4L310.8 479.4L306.3 463.6L289.6 443.5Z" fill="#bfd1a6" stroke="#bfd1a6"/><path d="M289.6 443.5L306.3 463.6L301.9 448.1L284.3 426.9Z" fill="#c1d4a6" stroke="#c1d4a6"/><path d="M284.3 426.9L301.9 448.1L297.5 432.9L279.0 410.6Z" fill="#c3d8a6" stroke="#c3d8a6"/><path d="M279.0 410.6L297.5 432.9L293.3 418.0L273.8 394.7Z" fill="#c5dba6" stroke="#c5dba6"/><path d="M273.8 394.7L293.3 418.0L289.1 403.3L268.7 379.0Z" fill="#c7dfa6" stroke="#c7dfa6"/><path d="M268.7 379.0L289.1 403.3L284.9 388.9L263.7 363.6Z" fill="#c9e2a6" stroke="#c9e2a6"/><path d="M263.7 363.6L284.9 388.9L280.9 374.7L258.7 348.5Z" fill="#cbe5a6" stroke="#cbe5a6"/><path d="M258.7 348.5L280.9 374.7L276.8 360.8L253.8 333.6Z" fill="#cde9a6" stroke="#cde9a6"/><path d="M253.8 333.6L276.8 360.8L274.2 357.0L252.0 330.5Z" fill="#d4faa0" stroke="#d4faa0"/><path d="M252.0 330.5L274.2 357.0L273.5 352.6L252.1 327.0Z" fill="#d6faa5" stroke="#d6faa5"/><path d="M252.1 327.0L273.5 352.6L274.7 347.7L254.1 323.1Z" fill="#d8faa9" stroke="#d8faa9"/><path d="M254.1 323.1L274.7 347.7L277.7 342.3L258.0 318.8Z" fill="#dafaae" stroke="#dafaae"/><path d="M258.0 318.8L277.7 342.3L282.1 336.5L263.3 314.1Z" fill="#dcfab2" stroke="#dcfab2"/><path d="M263.3 314.1L282.1 336.5L287.5 330.2L269.7 309.1Z" fill="#defab7" stroke="#defab7"/><path d="M269.7 309.1L287.5 330.2L293.8 323.6L277.0 303.8Z" fill="#e0fabc" stroke="#e0fabc"/><path d="M277.0 303.8L293.8 323.6L300.5 316.7L284.9 298.3Z" fill="#e2fac0" stroke="#e2fac0"/><path d="M284.9 298.3L300.5 316.7L307.5 309.6L293.1 292.6Z" fill="#e4fac5" stroke="#e4fac5"/><path d="M293.1 292.6L307.5 309.6L314.7 302.2L301.5 286.7Z" fill="#e6fac9" stroke="#e6fac9"/><path d="M301.5 286.7L314.7 302.2L322.0 294.7L310.0 280.6Z" fill="#e8face" stroke="#e8face"/><path d="M310.0 280.6L322.0 294.7L329.3 287.0L318.6 274.4Z" fill="#e9fad3" stroke="#e9fad3"/><path d="M318.6 274.4L329.3 287.0L336.5 279.1L327.1 268.0Z" fill="#ebfad7" stroke="#ebfad7"/><path d="M327.1 268.0L336.5 279.1L343.6 271.1L335.6 261.6Z" fill="#edfadc" stroke="#edfadc"/><path d="M335.6 261.6L343.6 271.1L350.6 262.9L343.9 255.0Z" fill="#effae0" stroke="#effae0"/><path d="M343.9 255.0L350.6 262.9L357.5 254.7L352.2 248.3Z" fill="#f1fae5" stroke="#f1fae5"/><path d="M352.2 248.3L357.5 254.7L364.3 246.3L360.3 241.5Z" fill="#f3faea" stroke="#f3faea"/><path d="M360.3 241.5L364.3 246.3L370.9 237.8L368.3 234.7Z" fill="#f5faee" stroke="#f5faee"/><path d="M368.3 234.7L370.9 237.8L377.4 229.3L376.1 227.7Z" fill="#f7faf3" stroke="#f7faf3"/><path d="M376.1 227.7L377.4 229.3L383.8 220.7L383.8 220.7Z" fill="#f9faf7" stroke="#f9faf7"/><path d="M385.0 671.0L385.0 671.0L384.2 668.9L383.9 668.5Z" fill="#d9d9d9" stroke="#d9d9d9"/><path d="M383.9 668.5L384.2 668.9L381.0 661.5L379.7 659.8Z" fill="#d9d9d9" stroke="#d9d9d9"/><path d="M379.7 659.8L381.0 661.5L375.1 647.9L371.8 644.1Z" fill="#d9d9d9" stroke="#d9d9d9"/><path d="M371.8 644.1L375.1 647.9L366.7 630.5L360.7 623.8Z" fill="#d9d9d9" stroke="#d9d9d9"/><path d="M360.7 623.8L366.7 630.5L357.3 611.4L350.3 603.5Z" fill="#d8d9d8" stroke="#d8d9d8"/><path d="M350.3 603.5L357.3 611.4L349.7 593.0L341.8 584.0Z" fill="#d5d6d4" stroke="#d5d6d4"/><path d="M341.8 584.0L349.7 593.0L343.8 575.3L335.1 565.2Z" fill="#cfd2cd" stroke="#cfd2cd"/><path d="M335.1 565.2L343.8 575.3L339.3 558.2L329.8 547.0Z" fill="#c9cfc4" stroke="#c9cfc4"/><path d="M329.8 547.0L339.3 558.2L335.2 541.5L324.9 529.3Z" fill="#c2ccbb" stroke="#c2ccbb"/><path d="M324.9 529.3L335.2 541.5L331.3 525.4L320.0 512.2Z" fill="#bdcbb2" stroke="#bdcbb2"/><path d="M320.0 512.2L331.3 525.4L327.4 509.7L315.3 495.6Z" fill="#b9ccab" stroke="#b9ccab"/><path d="M315.3 495.6L327.4 509.7L323.6 494.4L310.8 479.4Z" fill="#b7cea7" stroke="#b7cea7"/><path d="M310.8 479.4L323.6 494.4L319.9 479.4L306.3 463.6Z" fill="#b8d1a6" stroke="#b8d1a6"/><path d="M306.3 463.6L319.9 479.4L316.3 464.8L301.9 448.1Z" fill="#bad4a6" stroke="#bad4a6"/><path d="M301.9 448.1L316.3 464.8L312.7 450.4L297.5 432.9Z" fill="#bbd8a6" stroke="#bbd8a6"/><path d="M297.5 432.9L312.7 450.4L309.2 436.3L293.3 418.0Z" fill="#bcdba6" stroke="#bcdba6"/><path d="M293.3 418.0L309.2 436.3L305.7 422.4L289.1 403.3Z" fill="#bedfa6" stroke="#bedfa6"/><path d="M289.1 403.3L305.7 422.4L302.3 408.8L284.9 388.9Z" fill="#bfe2a6" stroke="#bfe2a6"/><path d="M284.9 388.9L302.3 408.8L299.0 395.4L280.9 374.7Z" fill="#c1e5a6" stroke="#c1e5a6"/><path d="M280.9 374.7L299.0 395.4L295.7 382.2L276.8 360.8Z" fill="#c2e9a6" stroke="#c2e9a6"/><path d="M276.8 360.8L295.7 382.2L293.0 378.5L274.2 357.0Z" fill="#c5faa0" stroke="#c5faa0"/><path d="M274.2 357.0L293.0 378.5L292.1 374.1L273.5 352.6Z" fill="#c8faa5" stroke="#c8faa5"/><path d="M273.5 352.6L292.1 374.1L293.0 368.9L274.7 347.7Z" fill="#cbfaa9" stroke="#cbfaa9"/><path d="M274.7 347.7L293.0 368.9L295.5 363.0L277.7 342.3Z" fill="#cdfaae" stroke="#cdfaae"/><path d="M277.7 342.3L295.5 363.0L299.3 356.5L282.1 336.5Z" fill="#d0fab2" stroke="#d0fab2"/><path d="M282.1 336.5L299.3 356.5L304.1 349.4L287.5 330.2Z" fill="#d3fab7" stroke="#d3fab7"/><path d="M287.5 330.2L304.1 349.4L309.5 341.9L293.8 323.6Z" fill="#d6fabc" stroke="#d6fabc"/><path d="M293.8 323.6L309.5 341.9L315.3 333.9L300.5 316.7Z" fill="#d8fac0" stroke="#d8fac0"/><path d="M300.5 316.7L315.3 333.9L321.4 325.7L307.5 309.6Z" fill="#dbfac5" stroke="#dbfac5"/><path d="M307.5 309.6L321.4 325.7L327.5 317.1L314.7 302.2Z" fill="#defac9" stroke="#defac9"/><path d="M314.7 302.2L327.5 317.1L333.6 308.2L322.0 294.7Z" fill="#e0face" stroke="#e0face"/><path d="M322.0 294.7L333.6 308.2L339.7 299.1L329.3 287.0Z" fill="#e3fad3" stroke="#e3fad3"/><path d="M329.3 287.0L339.7 299.1L345.7 289.8L336.5 279.1Z" fill="#e6fad7" stroke="#e6fad7"/><path d="M336.5 279.1L345.7 289.8L351.5 280.3L343.6 271.1Z" fill="#e8fadc" stroke="#e8fadc"/><path d="M343.6 271.1L351.5 280.3L357.2 270.7L350.6 262.9Z" fill="#ebfae0" stroke="#ebfae0"/><path d="M350.6 262.9L357.2 270.7L362.8 260.9L357.5 254.7Z" fill="#eefae5" stroke="#eefae5"/><path d="M357.5 254.7L362.8 260.9L368.3 251.0L364.3 246.3Z" fill="#f0faea" stroke="#f0faea"/><path d="M364.3 246.3L368.3 251.0L373.6 241.0L370.9 237.8Z" fill="#f3faee" stroke="#f3faee"/><path d="M370.9 237.8L373.6 241.0L378.8 230.9L377.4 229.3Z" fill="#f6faf3" stroke="#f6faf3"/><path d="M377.4 229.3L378.8 230.9L383.8 220.7L383.8 220.7Z" fill="#f8faf7" stroke="#f8faf7"/><path d="M385.0 671.0L385.0 671.0L384.4 669.1L384.2 668.9Z" fill="#d9d9d9" stroke="#d9d9d9"/><path d="M384.2 668.9L384.4 669.1L381.8 662.4L381.0 661.5Z" fill="#d9d9d9" stroke="#d9d9d9"/><path d="M381.0 661.5L381.8 662.4L376.9 650.0L375.1 647.9Z" fill="#d9d9d9" stroke="#d9d9d9"/><path d="M375.1 647.9L376.9 650.0L370.0 634.2L366.7 630.5Z" fill="#d9d9d9" stroke="#d9d9d9"/><path d="M366.7 630.5L370.0 634.2L361.8 616.3L357.3 611.4Z" fill="#d8d9d8" stroke="#d8d9d8"/><path d="M357.3 611.4L361.8 616.3L354.7 598.7L349.7 593.0Z" fill="#d5d6d4" stroke="#d5d6d4"/><path d="M349.7 593.0L354.7 598.7L349.3 581.7L343.8 575.3Z" fill="#cfd2cd" stroke="#cfd2cd"/><path d="M343.8 575.3L349.3 581.7L345.4 565.1L339.3 558.2Z" fill="#c7cfc4" stroke="#c7cfc4"/><path d="M339.3 558.2L345.4 565.1L341.8 549.1L335.2 541.5Z" fill="#bfccbb" stroke="#bfccbb"/><path d="M335.2 541.5L341.8 549.1L338.4 533.6L331.3 525.4Z" fill="#b8cbb2" stroke="#b8cbb2"/><path d="M331.3 525.4L338.4 533.6L335.0 518.4L327.4 509.7Z" fill="#b3ccab" stroke="#b3ccab"/><path d="M327.4 509.7L335.0 518.4L331.8 503.7L323.6 494.4Z" fill="#b1cea7" stroke="#b1cea7"/><path d="M323.6 494.4L331.8 503.7L328.6 489.2L319.9 479.4Z" fill="#b1d1a6" stroke="#b1d1a6"/><path d="M319.9 479.4L328.6 489.2L325.4 475.1L316.3 464.8Z" fill="#b2d4a6" stroke="#b2d4a6"/><path d="M316.3 464.8L325.4 475.1L322.4 461.2L312.7 450.4Z" fill="#b3d8a6" stroke="#b3d8a6"/><path d="M312.7 450.4L322.4 461.2L319.4 447.6L309.2 436.3Z" fill="#b4dba6" stroke="#b4dba6"/><path d="M309.2 436.3L319.4 447.6L316.4 434.2L305.7 422.4Z" fill="#b4dfa6" stroke="#b4dfa6"/><path d="M305.7 422.4L316.4 434.2L313.5 421.1L302.3 408.8Z" fill="#b5e2a6" stroke="#b5e2a6"/><path d="M302.3 408.8L313.5 421.1L310.6 408.1L299.0 395.4Z" fill="#b6e5a6" stroke="#b6e5a6"/><path d="M299.0 395.4L310.6 408.1L307.8 395.3L295.7 382.2Z" fill="#b7e9a6" stroke="#b7e9a6"/><path d="M295.7 382.2L307.8 395.3L306.1 393.0L293.0 378.5Z" fill="#b6faa0" stroke="#b6faa0"/><path d="M293.0 378.5L306.1 393.0L306.0 389.6L292.1 374.1Z" fill="#bafaa5" stroke="#bafaa5"/><path d="M292.1 374.1L306.0 389.6L307.4 385.2L293.0 368.9Z" fill="#bdfaa9" stroke="#bdfaa9"/><path d="M293.0 368.9L307.4 385.2L310.3 379.7L295.5 363.0Z" fill="#c1faae" stroke="#c1faae"/><path d="M295.5 363.0L310.3 379.7L314.1 373.2L299.3 356.5Z" fill="#c4fab2" stroke="#c4fab2"/><path d="M299.3 356.5L314.1 373.2L318.7 366.0L304.1 349.4Z" fill="#c8fab7" stroke="#c8fab7"/><path d="M304.1 349.4L318.7 366.0L323.8 358.1L309.5 341.9Z" fill="#cbfabc" stroke="#cbfabc"/><path d="M309.5 341.9L323.8 358.1L329.0 349.5L315.3 333.9Z" fill="#cffac0" stroke="#cffac0"/><path d="M315.3 333.9L329.0 349.5L334.3 340.5L321.4 325.7Z" fill="#d2fac5" stroke="#d2fac5"/><path d="M321.4 325.7L334.3 340.5L339.6 330.9L327.5 317.1Z" fill="#d6fac9" stroke="#d6fac9"/><path d="M327.5 317.1L339.6 330.9L344.7 321.0L333.6 308.2Z" fill="#d9face" stroke="#d9face"/><path d="M333.6 308.2L344.7 321.0L349.7 310.7L339.7 299.1Z" fill="#dcfad3" stroke="#dcfad3"/><path d="M339.7 299.1L349.7 310.7L354.6 300.2L345.7 289.8Z" fill="#e0fad7" stroke="#e0fad7"/><path d="M345.7 289.8L354.6 300.2L359.3 289.4L351.5 280.3Z" fill="#e3fadc" stroke="#e3fadc"/><path d="M351.5 280.3L359.3 289.4L363.7 278.3L357.2 270.7Z" fill="#e7fae0" stroke="#e7fae0"/><path d="M357.2 270.7L363.7 278.3L368.1 267.1L362.8 260.9Z" fill="#eafae5" stroke="#eafae5"/><path d="M362.8 260.9L368.1 267.1L372.2 255.7L368.3 251.0Z" fill="#eefaea" stroke="#eefaea"/><path d="M368.3 251.0L372.2 255.7L376.2 244.2L373.6 241.0Z" fill="#f1faee" stroke="#f1faee"/><path d="M373.6 241.0L376.2 244.2L380.1 232.5L378.8 230.9Z" fill="#f5faf3" stroke="#f5faf3"/><path d="M378.8 230.9L380.1 232.5L383.8 220.7L383.8 220.7Z" fill="#f8faf7" stroke="#f8faf7"/><path d="M385.0 671.0L385.0 671.0L384.4 669.2L384.4 669.1Z" fill="#d9d9d9" stroke="#d9d9d9"/><path d="M384.4 669.1L384.4 669.2L382.0 662.7L381.8 662.4Z" fill="#d9d9d9" stroke="#d9d9d9"/><path d="M381.8 662.4L382.0 662.7L377.3 650.7L376.9 650.0Z" fill="#d9d9d9" stroke="#d9d9d9"/><path d="M376.9 650.0L377.3 650.7L370.9 635.3L370.0 634.2Z" fill="#d9d9d9" stroke="#d9d9d9"/><path d="M370.0 634.2L370.9 635.3L363.1 617.9L361.8 616.3Z" fill="#d8d9d8" stroke="#d8d9d8"/><path d="M361.8 616.3L363.1 617.9L356.2 600.4L354.7 598.7Z" fill="#d4d6d4" stroke="#d4d6d4"/><path d="M354.7 598.7L356.2 600.4L350.9 583.6L349.3 581.7Z" fill="#ced2cd" stroke="#ced2cd"/><path d="M349.3 581.7L350.9 583.6L347.2 567.3L345.4 565.1Z" fill="#c5cfc4" stroke="#c5cfc4"/><path d="M345.4 565.1L347.2 567.3L343.8 551.4L341.8 549.1Z" fill="#bcccbb" stroke="#bcccbb"/><path d="M341.8 549.1L343.8 551.4L340.5 536.0L338.4 533.6Z" fill="#b4cbb2" stroke="#b4cbb2"/><path d="M338.4 533.6L340.5 536.0L337.4 521.0L335.0 518.4Z" fill="#aeccab" stroke="#aeccab"/><path d="M335.0 518.4L337.4 521.0L334.3 506.4L331.8 503.7Z" fill="#aacea7" stroke="#aacea7"/><path d="M331.8 503.7L334.3 506.4L331.2 492.1L328.6 489.2Z" fill="#aad1a6" stroke="#aad1a6"/><path d="M328.6 489.2L331.2 492.1L328.3 478.1L325.4 475.1Z" fill="#aad4a6" stroke="#aad4a6"/><path d="M325.4 475.1L328.3 478.1L325.4 464.4L322.4 461.2Z" fill="#abd8a6" stroke="#abd8a6"/><path d="M322.4 461.2L325.4 464.4L322.5 450.9L319.4 447.6Z" fill="#abdba6" stroke="#abdba6"/><path d="M319.4 447.6L322.5 450.9L319.7 437.6L316.4 434.2Z" fill="#abdfa6" stroke="#abdfa6"/><path d="M316.4 434.2L319.7 437.6L316.9 424.5L313.5 421.1Z" fill="#abe2a6" stroke="#abe2a6"/><path d="M313.5 421.1L316.9 424.5L314.2 411.6L310.6 408.1Z" fill="#ace5a6" stroke="#ace5a6"/><path d="M310.6 408.1L314.2 411.6L311.6 398.9L307.8 395.3Z" fill="#ace9a6" stroke="#ace9a6"/><path d="M307.8 395.3L311.6 398.9L311.9 398.9L306.1 393.0Z" fill="#a7faa0" stroke="#a7faa0"/><path d="M306.1 393.0L311.9 398.9L313.5 397.7L306.0 389.6Z" fill="#acfaa5" stroke="#acfaa5"/><path d="M306.0 389.6L313.5 397.7L316.5 395.1L307.4 385.2Z" fill="#b0faa9" stroke="#b0faa9"/><path d="M307.4 385.2L316.5 395.1L320.6 391.1L310.3 379.7Z" fill="#b4faae" stroke="#b4faae"/><path d="M310.3 379.7L320.6 391.1L325.4 385.7L314.1 373.2Z" fill="#b8fab2" stroke="#b8fab2"/><path d="M314.1 373.2L325.4 385.7L330.6 379.2L318.7 366.0Z" fill="#bdfab7" stroke="#bdfab7"/><path d="M318.7 366.0L330.6 379.2L335.9 371.6L323.8 358.1Z" fill="#c1fabc" stroke="#c1fabc"/><path d="M323.8 358.1L335.9 371.6L341.1 363.1L329.0 349.5Z" fill="#c5fac0" stroke="#c5fac0"/><path d="M329.0 349.5L341.1 363.1L346.1 353.7L334.3 340.5Z" fill="#c9fac5" stroke="#c9fac5"/><path d="M334.3 340.5L346.1 353.7L350.8 343.6L339.6 330.9Z" fill="#cdfac9" stroke="#cdfac9"/><path d="M339.6 330.9L350.8 343.6L355.2 333.0L344.7 321.0Z" fill="#d2face" stroke="#d2face"/><path d="M344.7 321.0L355.2 333.0L359.4 321.8L349.7 310.7Z" fill="#d6fad3" stroke="#d6fad3"/><path d="M349.7 310.7L359.4 321.8L363.2 310.1L354.6 300.2Z" fill="#dafad7" stroke="#dafad7"/><path d="M354.6 300.2L363.2 310.1L366.8 298.1L359.3 289.4Z" fill="#defadc" stroke="#defadc"/><path d="M359.3 289.4L366.8 298.1L370.1 285.8L363.7 278.3Z" fill="#e3fae0" stroke="#e3fae0"/><path d="M363.7 278.3L370.1 285.8L373.2 273.2L368.1 267.1Z" fill="#e7fae5" stroke="#e7fae5"/><path d="M368.1 267.1L373.2 273.2L376.1 260.3L372.2 255.7Z" fill="#ebfaea" stroke="#ebfaea"/><path d="M372.2 255.7L376.1 260.3L378.8 247.3L376.2 244.2Z" fill="#effaee" stroke="#effaee"/><path d="M376.2 244.2L378.8 247.3L381.4 234.1L380.1 232.5Z" fill="#f3faf3" stroke="#f3faf3"/><path d="M380.1 232.5L381.4 234.1L383.8 220.7L383.8 220.7Z" fill="#f8faf7" stroke="#f8faf7"/><path d="M385.0 671.0L385.0 671.0L384.5 669.2L384.4 669.2Z" fill="#dedede" stroke="#dedede"/><path d="M384.4 669.2L384.5 669.2L382.2 662.6L382.0 662.7Z" fill="#dedede" stroke="#dedede"/><path d="M382.0 662.7L382.2 662.6L378.0 650.5L377.3 650.7Z" fill="#dedede" stroke="#dedede"/><path d="M377.3 650.7L378.0 650.5L372.1 634.9L370.9 635.3Z" fill="#dedede" stroke="#dedede"/><path d="M370.9 635.3L372.1 634.9L365.2 617.3L363.1 617.9Z" fill="#dddedd" stroke="#dddedd"/><path d="M363.1 617.9L365.2 617.3L359.4 599.7L356.2 600.4Z" fill="#d8dad8" stroke="#d8dad8"/><path d="M356.2 600.4L359.4 599.7L355.5 582.7L350.9 583.6Z" fill="#ced5ce" stroke="#ced5ce"/><path d="M350.9 583.6L355.5 582.7L352.5 566.2L347.2 567.3Z" fill="#c1d0c2" stroke="#c1d0c2"/><path d="M347.2 567.3L352.5 566.2L349.6 550.3L343.8 551.4Z" fill="#b4cdb6" stroke="#b4cdb6"/><path d="M343.8 551.4L349.6 550.3L346.8 534.9L340.5 536.0Z" fill="#a8ccab" stroke="#a8ccab"/><path d="M340.5 536.0L346.8 534.9L344.0 519.8L337.4 521.0Z" fill="#9ecda2" stroke="#9ecda2"/><path d="M337.4 521.0L344.0 519.8L341.3 505.2L334.3 506.4Z" fill="#98d09d" stroke="#98d09d"/><path d="M334.3 506.4L341.3 505.2L338.7 490.9L331.2 492.1Z" fill="#97d59c" stroke="#97d59c"/><path d="M331.2 492.1L338.7 490.9L336.1 476.8L328.3 478.1Z" fill="#97da9d" stroke="#97da9d"/><path d="M328.3 478.1L336.1 476.8L333.6 463.1L325.4 464.4Z" fill="#97df9d" stroke="#97df9d"/><path d="M325.4 464.4L333.6 463.1L331.1 449.6L322.5 450.9Z" fill="#97e49d" stroke="#97e49d"/><path d="M322.5 450.9L331.1 449.6L328.7 436.3L319.7 437.6Z" fill="#97e99e" stroke="#97e99e"/><path d="M319.7 437.6L328.7 436.3L326.3 423.3L316.9 424.5Z" fill="#97ed9e" stroke="#97ed9e"/><path d="M316.9 424.5L326.3 423.3L323.9 410.4L314.2 411.6Z" fill="#97f29f" stroke="#97f29f"/><path d="M314.2 411.6L323.9 410.4L321.5 397.7L311.6 398.9Z" fill="#97f79f" stroke="#97f79f"/><path d="M311.6 398.9L321.5 397.7L327.1 396.3L311.9 398.9Z" fill="#a0faa7" stroke="#a0faa7"/><path d="M311.9 398.9L327.1 396.3L332.9 393.9L313.5 397.7Z" fill="#a5faac" stroke="#a5faac"/><path d="M313.5 397.7L332.9 393.9L338.7 390.3L316.5 395.1Z" fill="#a9fab0" stroke="#a9fab0"/><path d="M316.5 395.1L338.7 390.3L344.4 385.5L320.6 391.1Z" fill="#aefab4" stroke="#aefab4"/><path d="M320.6 391.1L344.4 385.5L349.6 379.8L325.4 385.7Z" fill="#b3fab9" stroke="#b3fab9"/><path d="M325.4 385.7L349.6 379.8L354.4 373.0L330.6 379.2Z" fill="#b7f9bd" stroke="#b7f9bd"/><path d="M330.6 379.2L354.4 373.0L358.8 365.4L335.9 371.6Z" fill="#bcf9c1" stroke="#bcf9c1"/><path d="M335.9 371.6L358.8 365.4L362.6 356.9L341.1 363.1Z" fill="#c1f9c6" stroke="#c1f9c6"/><path d="M341.1 363.1L362.6 356.9L366.1 347.8L346.1 353.7Z" fill="#c5f9ca" stroke="#c5f9ca"/><path d="M346.1 353.7L366.1 347.8L369.1 338.1L350.8 343.6Z" fill="#caf9ce" stroke="#caf9ce"/><path d="M350.8 343.6L369.1 338.1L371.7 327.8L355.2 333.0Z" fill="#cff9d2" stroke="#cff9d2"/><path d="M355.2 333.0L371.7 327.8L373.9 317.1L359.4 321.8Z" fill="#d3f9d6" stroke="#d3f9d6"/><path d="M359.4 321.8L373.9 317.1L375.9 305.9L363.2 310.1Z" fill="#d7f9da" stroke="#d7f9da"/><path d="M363.2 310.1L375.9 305.9L377.6 294.5L366.8 298.1Z" fill="#dcf9de" stroke="#dcf9de"/><path d="M366.8 298.1L377.6 294.5L379.1 282.7L370.1 285.8Z" fill="#e0f9e2" stroke="#e0f9e2"/><path d="M370.1 285.8L379.1 282.7L380.3 270.7L373.2 273.2Z" fill="#e5f9e6" stroke="#e5f9e6"/><path d="M373.2 273.2L380.3 270.7L381.4 258.4L376.1 260.3Z" fill="#e9f9ea" stroke="#e9f9ea"/><path d="M376.1 260.3L381.4 258.4L382.3 246.0L378.8 247.3Z" fill="#eef9ee" stroke="#eef9ee"/><path d="M378.8 247.3L382.3 246.0L383.1 233.4L381.4 234.1Z" fill="#f2f9f2" stroke="#f2f9f2"/><path d="M381.4 234.1L383.1 233.4L383.8 220.7L383.8 220.7Z" fill="#f6f9f7" stroke="#f6f9f7"/><path d="M385.0 671.0L385.0 671.0L384.7 669.1L384.5 669.2Z" fill="#dedede" stroke="#dedede"/><path d="M384.5 669.2L384.7 669.1L383.2 662.2L382.2 662.6Z" fill="#dedede" stroke="#dedede"/><path d="M382.2 662.6L383.2 662.2L380.3 649.6L378.0 650.5Z" fill="#dedede" stroke="#dedede"/><path d="M378.0 650.5L380.3 649.6L376.6 633.4L372.1 634.9Z" fill="#dedede" stroke="#dedede"/><path d="M372.1 634.9L376.6 633.4L372.6 615.0L365.2 617.3Z" fill="#dddedd" stroke="#dddedd"/><path d="M365.2 617.3L372.6 615.0L370.5 596.8L359.4 599.7Z" fill="#d8dad8" stroke="#d8dad8"/><path d="M359.4 599.7L370.5 596.8L368.8 579.3L355.5 582.7Z" fill="#ced5cf" stroke="#ced5cf"/><path d="M355.5 582.7L368.8 579.3L367.2 562.6L352.5 566.2Z" fill="#c1d0c5" stroke="#c1d0c5"/><path d="M352.5 566.2L367.2 562.6L365.6 546.4L349.6 550.3Z" fill="#b4cdba" stroke="#b4cdba"/><path d="M349.6 550.3L365.6 546.4L364.0 530.7L346.8 534.9Z" fill="#a8ccb1" stroke="#a8ccb1"/><path d="M346.8 534.9L364.0 530.7L362.5 515.4L344.0 519.8Z" fill="#9ecda9" stroke="#9ecda9"/><path d="M344.0 519.8L362.5 515.4L361.0 500.5L341.3 505.2Z" fill="#98d0a6" stroke="#98d0a6"/><path d="M341.3 505.2L361.0 500.5L359.5 485.9L338.7 490.9Z" fill="#97d5a7" stroke="#97d5a7"/><path d="M338.7 490.9L359.5 485.9L358.1 471.7L336.1 476.8Z" fill="#97daa8" stroke="#97daa8"/><path d="M336.1 476.8L358.1 471.7L356.7 457.7L333.6 463.1Z" fill="#97dfa9" stroke="#97dfa9"/><path d="M333.6 463.1L356.7 457.7L355.2 444.0L331.1 449.6Z" fill="#97e4aa" stroke="#97e4aa"/><path d="M331.1 449.6L355.2 444.0L353.9 430.5L328.7 436.3Z" fill="#97e9ab" stroke="#97e9ab"/><path d="M328.7 436.3L353.9 430.5L352.5 417.3L326.3 423.3Z" fill="#97edad" stroke="#97edad"/><path d="M326.3 423.3L352.5 417.3L351.1 404.3L323.9 410.4Z" fill="#97f2ae" stroke="#97f2ae"/><path d="M323.9 410.4L351.1 404.3L349.8 391.5L321.5 397.7Z" fill="#97f7af" stroke="#97f7af"/><path d="M321.5 397.7L349.8 391.5L356.2 389.4L327.1 396.3Z" fill="#a0fab6" stroke="#a0fab6"/><path d="M327.1 396.3L356.2 389.4L362.2 386.4L332.9 393.9Z" fill="#a5faba" stroke="#a5faba"/><path d="M332.9 393.9L362.2 386.4L367.5 382.5L338.7 390.3Z" fill="#a9fabd" stroke="#a9fabd"/><path d="M338.7 390.3L367.5 382.5L372.2 377.7L344.4 385.5Z" fill="#aefac1" stroke="#aefac1"/><path d="M344.4 385.5L372.2 377.7L376.2 372.0L349.6 379.8Z" fill="#b3f9c5" stroke="#b3f9c5"/><path d="M349.6 379.8L376.2 372.0L379.5 365.4L354.4 373.0Z" fill="#b8f9c8" stroke="#b8f9c8"/><path d="M354.4 373.0L379.5 365.4L382.2 358.0L358.8 365.4Z" fill="#bef8cc" stroke="#bef8cc"/><path d="M358.8 365.4L382.2 358.0L384.3 349.9L362.6 356.9Z" fill="#c2f7d0" stroke="#c2f7d0"/><path d="M362.6 356.9L384.3 349.9L385.9 341.2L366.1 347.8Z" fill="#c7f7d3" stroke="#c7f7d3"/><path d="M366.1 347.8L385.9 341.2L387.0 332.0L369.1 338.1Z" fill="#ccf6d6" stroke="#ccf6d6"/><path d="M369.1 338.1L387.0 332.0L387.8 322.2L371.7 327.8Z" fill="#d0f6d9" stroke="#d0f6d9"/><path d="M371.7 327.8L387.8 322.2L388.2 312.1L373.9 317.1Z" fill="#d4f5dc" stroke="#d4f5dc"/><path d="M373.9 317.1L388.2 312.1L388.3 301.5L375.9 305.9Z" fill="#d8f5df" stroke="#d8f5df"/><path d="M375.9 305.9L388.3 301.5L388.2 290.7L377.6 294.5Z" fill="#dcf5e2" stroke="#dcf5e2"/><path d="M377.6 294.5L388.2 290.7L387.9 279.5L379.1 282.7Z" fill="#e0f5e5" stroke="#e0f5e5"/><path d="M379.1 282.7L387.9 279.5L387.3 268.1L380.3 270.7Z" fill="#e4f5e8" stroke="#e4f5e8"/><path d="M380.3 270.7L387.3 268.1L386.6 256.5L381.4 258.4Z" fill="#e8f5eb" stroke="#e8f5eb"/><path d="M381.4 258.4L386.6 256.5L385.8 244.7L382.3 246.0Z" fill="#ecf5ee" stroke="#ecf5ee"/><path d="M382.3 246.0L385.8 244.7L384.8 232.8L383.1 233.4Z" fill="#f0f5f1" stroke="#f0f5f1"/><path d="M383.1 233.4L384.8 232.8L383.8 220.7L383.8 220.7Z" fill="#f3f5f4" stroke="#f3f5f4"/><path d="M385.0 671.0L385.0 671.0L385.1 669.0L384.7 669.1Z" fill="#dedede" stroke="#dedede"/><path d="M384.7 669.1L385.1 669.0L385.0 661.6L383.2 662.2Z" fill="#dedede" stroke="#dedede"/><path d="M383.2 662.2L385.0 661.6L384.7 648.1L380.3 649.6Z" fill="#dedede" stroke="#dedede"/><path d="M380.3 649.6L384.7 648.1L384.9 630.6L376.6 633.4Z" fill="#dedede" stroke="#dedede"/><path d="M376.6 633.4L384.9 630.6L385.1 611.0L372.6 615.0Z" fill="#dddedd" stroke="#dddedd"/><path d="M372.6 615.0L385.1 611.0L385.1 592.2L370.5 596.8Z" fill="#d8dad9" stroke="#d8dad9"/><path d="M370.5 596.8L385.1 592.2L385.1 574.3L368.8 579.3Z" fill="#ced5d1" stroke="#ced5d1"/><path d="M368.8 579.3L385.1 574.3L385.1 557.0L367.2 562.6Z" fill="#c1d0c7" stroke="#c1d0c7"/><path d="M367.2 562.6L385.1 557.0L385.1 540.3L365.6 546.4Z" fill="#b4cdbe" stroke="#b4cdbe"/><path d="M365.6 546.4L385.1 540.3L385.1 524.2L364.0 530.7Z" fill="#a8ccb7" stroke="#a8ccb7"/><path d="M364.0 530.7L385.1 524.2L385.1 508.5L362.5 515.4Z" fill="#9ecdb1" stroke="#9ecdb1"/><path d="M362.5 515.4L385.1 508.5L385.1 493.1L361.0 500.5Z" fill="#98d0af" stroke="#98d0af"/><path d="M361.0 500.5L385.1 493.1L385.0 478.2L359.5 485.9Z" fill="#97d5b1" stroke="#97d5b1"/><path d="M359.5 485.9L385.0 478.2L385.0 463.6L358.1 471.7Z" fill="#97dab3" stroke="#97dab3"/><path d="M358.1 471.7L385.0 463.6L384.9 449.3L356.7 457.7Z" fill="#97dfb5" stroke="#97dfb5"/><path d="M356.7 457.7L384.9 449.3L384.9 435.2L355.2 444.0Z" fill="#97e4b7" stroke="#97e4b7"/><path d="M355.2 444.0L384.9 435.2L384.8 421.4L353.9 430.5Z" fill="#97e9b9" stroke="#97e9b9"/><path d="M353.9 430.5L384.8 421.4L384.7 407.9L352.5 417.3Z" fill="#97edbb" stroke="#97edbb"/><path d="M352.5 417.3L384.7 407.9L384.6 394.5L351.1 404.3Z" fill="#97f2bd" stroke="#97f2bd"/><path d="M351.1 404.3L384.6 394.5L384.5 381.4L349.8 391.5Z" fill="#97f7bf" stroke="#97f7bf"/><path d="M349.8 391.5L384.5 381.4L389.5 379.3L356.2 389.4Z" fill="#a0fac5" stroke="#a0fac5"/><path d="M356.2 389.4L389.5 379.3L393.9 376.4L362.2 386.4Z" fill="#a5fac8" stroke="#a5fac8"/><path d="M362.2 386.4L393.9 376.4L397.5 372.6L367.5 382.5Z" fill="#a9facb" stroke="#a9facb"/><path d="M367.5 382.5L397.5 372.6L400.4 368.1L372.2 377.7Z" fill="#aff9ce" stroke="#aff9ce"/><path d="M372.2 377.7L400.4 368.1L402.6 362.7L376.2 372.0Z" fill="#b4f8d1" stroke="#b4f8d1"/><path d="M376.2 372.0L402.6 362.7L404.2 356.5L379.5 365.4Z" fill="#baf7d3" stroke="#baf7d3"/><path d="M379.5 365.4L404.2 356.5L405.1 349.7L382.2 358.0Z" fill="#bff6d6" stroke="#bff6d6"/><path d="M382.2 358.0L405.1 349.7L405.4 342.2L384.3 349.9Z" fill="#c4f5d9" stroke="#c4f5d9"/><path d="M384.3 349.9L405.4 342.2L405.2 334.1L385.9 341.2Z" fill="#c9f4db" stroke="#c9f4db"/><path d="M385.9 341.2L405.2 334.1L404.6 325.4L387.0 332.0Z" fill="#cef3dd" stroke="#cef3dd"/><path d="M387.0 332.0L404.6 325.4L403.6 316.3L387.8 322.2Z" fill="#d1f2df" stroke="#d1f2df"/><path d="M387.8 322.2L403.6 316.3L402.2 306.8L388.2 312.1Z" fill="#d5f1e1" stroke="#d5f1e1"/><path d="M388.2 312.1L402.2 306.8L400.6 296.9L388.3 301.5Z" fill="#d8f1e3" stroke="#d8f1e3"/><path d="M388.3 301.5L400.6 296.9L398.7 286.7L388.2 290.7Z" fill="#dcf1e5" stroke="#dcf1e5"/><path d="M388.2 290.7L398.7 286.7L396.5 276.2L387.9 279.5Z" fill="#dff1e7" stroke="#dff1e7"/><path d="M387.9 279.5L396.5 276.2L394.3 265.5L387.3 268.1Z" fill="#e2f1e9" stroke="#e2f1e9"/><path d="M387.3 268.1L394.3 265.5L391.8 254.6L386.6 256.5Z" fill="#e6f1eb" stroke="#e6f1eb"/><path d="M386.6 256.5L391.8 254.6L389.2 243.4L385.8 244.7Z" fill="#e9f1ec" stroke="#e9f1ec"/><path d="M385.8 244.7L389.2 243.4L386.6 232.1L384.8 232.8Z" fill="#ecf1ee" stroke="#ecf1ee"/><path d="M384.8 232.8L386.6 232.1L383.8 220.7L383.8 220.7Z" fill="#f0f1f0" stroke="#f0f1f0"/><path d="M385.0 671.0L385.0 671.0L385.7 668.7L385.1 669.0Z" fill="#dedede" stroke="#dedede"/><path d="M385.1 669.0L385.7 668.7L387.7 660.6L385.0 661.6Z" fill="#dedede" stroke="#dedede"/><path d="M385.0 661.6L387.7 660.6L391.3 645.8L384.7 648.1Z" fill="#dedede" stroke="#dedede"/><path d="M384.7 648.1L391.3 645.8L395.8 626.6L384.9 630.6Z" fill="#dedede" stroke="#dedede"/><path d="M384.9 630.6L395.8 626.6L397.8 606.0L385.1 611.0Z" fill="#dddedd" stroke="#dddedd"/><path d="M385.1 611.0L397.8 606.0L399.6 586.5L385.1 592.2Z" fill="#d8dad9" stroke="#d8dad9"/><path d="M385.1 592.2L399.6 586.5L401.4 567.9L385.1 574.3Z" fill="#ced5d2" stroke="#ced5d2"/><path d="M385.1 574.3L401.4 567.9L403.0 550.0L385.1 557.0Z" fill="#c1d0ca" stroke="#c1d0ca"/><path d="M385.1 557.0L403.0 550.0L404.6 532.8L385.1 540.3Z" fill="#b4cdc2" stroke="#b4cdc2"/><path d="M385.1 540.3L404.6 532.8L406.1 516.0L385.1 524.2Z" fill="#a8ccbd" stroke="#a8ccbd"/><path d="M385.1 524.2L406.1 516.0L407.6 499.8L385.1 508.5Z" fill="#9ecdb9" stroke="#9ecdb9"/><path d="M385.1 508.5L407.6 499.8L409.0 483.9L385.1 493.1Z" fill="#98d0b9" stroke="#98d0b9"/><path d="M385.1 493.1L409.0 483.9L410.4 468.5L385.0 478.2Z" fill="#97d5bb" stroke="#97d5bb"/><path d="M385.0 478.2L410.4 468.5L411.8 453.4L385.0 463.6Z" fill="#97dabe" stroke="#97dabe"/><path d="M385.0 463.6L411.8 453.4L413.1 438.6L384.9 449.3Z" fill="#97dfc1" stroke="#97dfc1"/><path d="M384.9 449.3L413.1 438.6L414.3 424.1L384.9 435.2Z" fill="#97e4c4" stroke="#97e4c4"/><path d="M384.9 435.2L414.3 424.1L415.6 409.8L384.8 421.4Z" fill="#97e9c7" stroke="#97e9c7"/><path d="M384.8 421.4L415.6 409.8L416.8 395.9L384.7 407.9Z" fill="#97edc9" stroke="#97edc9"/><path d="M384.7 407.9L416.8 395.9L417.9 382.1L384.6 394.5Z" fill="#97f2cc" stroke="#97f2cc"/><path d="M384.6 394.5L417.9 382.1L419.1 368.6L384.5 381.4Z" fill="#97f7cf" stroke="#97f7cf"/><path d="M384.5 381.4L419.1 368.6L422.2 366.7L389.5 379.3Z" fill="#a0fad4" stroke="#a0fad4"/><path d="M389.5 379.3L422.2 366.7L424.6 364.2L393.9 376.4Z" fill="#a5fad6" stroke="#a5fad6"/><path d="M393.9 376.4L424.6 364.2L426.5 360.9L397.5 372.6Z" fill="#a9fad8" stroke="#a9fad8"/><path d="M397.5 372.6L426.5 360.9L427.6 356.9L400.4 368.1Z" fill="#aff9da" stroke="#aff9da"/><path d="M400.4 368.1L427.6 356.9L428.0 352.2L402.6 362.7Z" fill="#b5f8dc" stroke="#b5f8dc"/><path d="M402.6 362.7L428.0 352.2L427.9 346.7L404.2 356.5Z" fill="#bbf6de" stroke="#bbf6de"/><path d="M404.2 356.5L427.9 346.7L427.1 340.5L405.1 349.7Z" fill="#c1f4df" stroke="#c1f4df"/><path d="M405.1 349.7L427.1 340.5L425.7 333.7L405.4 342.2Z" fill="#c7f3e0" stroke="#c7f3e0"/><path d="M405.4 342.2L425.7 333.7L423.8 326.3L405.2 334.1Z" fill="#cbf1e1" stroke="#cbf1e1"/><path d="M405.2 334.1L423.8 326.3L421.5 318.5L404.6 325.4Z" fill="#d0efe2" stroke="#d0efe2"/><path d="M404.6 325.4L421.5 318.5L418.9 310.1L403.6 316.3Z" fill="#d3eee3" stroke="#d3eee3"/><path d="M403.6 316.3L418.9 310.1L415.8 301.3L402.2 306.8Z" fill="#d6ede4" stroke="#d6ede4"/><path d="M402.2 306.8L415.8 301.3L412.5 292.2L400.6 296.9Z" fill="#d9ede5" stroke="#d9ede5"/><path d="M400.6 296.9L412.5 292.2L408.9 282.7L398.7 286.7Z" fill="#dcede6" stroke="#dcede6"/><path d="M398.7 286.7L408.9 282.7L405.1 272.9L396.5 276.2Z" fill="#deede7" stroke="#deede7"/><path d="M396.5 276.2L405.1 272.9L401.1 262.9L394.3 265.5Z" fill="#e1ede8" stroke="#e1ede8"/><path d="M394.3 265.5L401.1 262.9L397.0 252.6L391.8 254.6Z" fill="#e4ede9" stroke="#e4ede9"/><path d="M391.8 254.6L397.0 252.6L392.7 242.1L389.2 243.4Z" fill="#e6edea" stroke="#e6edea"/><path d="M389.2 243.4L392.7 242.1L388.3 231.5L386.6 232.1Z" fill="#e9edec" stroke="#e9edec"/><path d="M386.6 232.1L388.3 231.5L383.8 220.7L383.8 220.7Z" fill="#eceded" stroke="#eceded"/><path d="M385.0 671.0L385.0 671.0L386.4 668.5L385.7 668.7Z" fill="#dedede" stroke="#dedede"/><path d="M385.7 668.7L386.4 668.5L391.3 659.4L387.7 660.6Z" fill="#dedede" stroke="#dedede"/><path d="M387.7 660.6L391.3 659.4L399.9 642.7L391.3 645.8Z" fill="#dedede" stroke="#dedede"/><path d="M391.3 645.8L399.9 642.7L406.0 621.7L395.8 626.6Z" fill="#dedede" stroke="#dedede"/><path d="M395.8 626.6L406.0 621.7L409.7 600.2L397.8 606.0Z" fill="#dddedd" stroke="#dddedd"/><path d="M397.8 606.0L409.7 600.2L413.2 579.9L399.6 586.5Z" fill="#d8dad9" stroke="#d8dad9"/><path d="M399.6 586.5L413.2 579.9L416.6 560.6L401.4 567.9Z" fill="#ced5d3" stroke="#ced5d3"/><path d="M401.4 567.9L416.6 560.6L419.8 541.9L403.0 550.0Z" fill="#c1d0cd" stroke="#c1d0cd"/><path d="M403.0 550.0L419.8 541.9L422.9 524.0L404.6 532.8Z" fill="#b4cdc7" stroke="#b4cdc7"/><path d="M404.6 532.8L422.9 524.0L425.8 506.6L406.1 516.0Z" fill="#a8ccc3" stroke="#a8ccc3"/><path d="M406.1 516.0L425.8 506.6L428.7 489.7L407.6 499.8Z" fill="#9ecdc1" stroke="#9ecdc1"/><path d="M407.6 499.8L428.7 489.7L431.5 473.2L409.0 483.9Z" fill="#98d0c2" stroke="#98d0c2"/><path d="M409.0 483.9L431.5 473.2L434.2 457.2L410.4 468.5Z" fill="#97d5c5" stroke="#97d5c5"/><path d="M410.4 468.5L434.2 457.2L436.9 441.5L411.8 453.4Z" fill="#97dac9" stroke="#97dac9"/><path d="M411.8 453.4L436.9 441.5L439.4 426.2L413.1 438.6Z" fill="#97dfcd" stroke="#97dfcd"/><path d="M413.1 438.6L439.4 426.2L441.9 411.1L414.3 424.1Z" fill="#97e4d0" stroke="#97e4d0"/><path d="M414.3 424.1L441.9 411.1L444.4 396.4L415.6 409.8Z" fill="#97e9d4" stroke="#97e9d4"/><path d="M415.6 409.8L444.4 396.4L446.8 381.9L416.8 395.9Z" fill="#97edd8" stroke="#97edd8"/><path d="M416.8 395.9L446.8 381.9L449.1 367.7L417.9 382.1Z" fill="#97f2dc" stroke="#97f2dc"/><path d="M417.9 382.1L449.1 367.7L451.4 353.7L419.1 368.6Z" fill="#97f7df" stroke="#97f7df"/><path d="M419.1 368.6L451.4 353.7L452.7 352.3L422.2 366.7Z" fill="#a0fae3" stroke="#a0fae3"/><path d="M422.2 366.7L452.7 352.3L453.5 350.4L424.6 364.2Z" fill="#a5fae5" stroke="#a5fae5"/><path d="M424.6 364.2L453.5 350.4L453.7 347.9L426.5 360.9Z" fill="#a9fae6" stroke="#a9fae6"/><path d="M426.5 360.9L453.7 347.9L453.2 344.6L427.6 356.9Z" fill="#aff9e6" stroke="#aff9e6"/><path d="M427.6 356.9L453.2 344.6L452.1 340.6L428.0 352.2Z" fill="#b6f7e7" stroke="#b6f7e7"/><path d="M428.0 352.2L452.1 340.6L450.3 335.9L427.9 346.7Z" fill="#bcf5e7" stroke="#bcf5e7"/><path d="M427.9 346.7L450.3 335.9L448.0 330.6L427.1 340.5Z" fill="#c2f3e7" stroke="#c2f3e7"/><path d="M427.1 340.5L448.0 330.6L445.1 324.7L425.7 333.7Z" fill="#c8f1e7" stroke="#c8f1e7"/><path d="M425.7 333.7L445.1 324.7L441.8 318.1L423.8 326.3Z" fill="#cdefe6" stroke="#cdefe6"/><path d="M423.8 326.3L441.8 318.1L437.9 311.1L421.5 318.5Z" fill="#d1ede6" stroke="#d1ede6"/><path d="M421.5 318.5L437.9 311.1L433.7 303.5L418.9 310.1Z" fill="#d4ebe5" stroke="#d4ebe5"/><path d="M418.9 310.1L433.7 303.5L429.1 295.6L415.8 301.3Z" fill="#d7eae5" stroke="#d7eae5"/><path d="M415.8 301.3L429.1 295.6L424.1 287.2L412.5 292.2Z" fill="#d9eae6" stroke="#d9eae6"/><path d="M412.5 292.2L424.1 287.2L418.9 278.5L408.9 282.7Z" fill="#dbeae6" stroke="#dbeae6"/><path d="M408.9 282.7L418.9 278.5L413.5 269.5L405.1 272.9Z" fill="#deeae7" stroke="#deeae7"/><path d="M405.1 272.9L413.5 269.5L407.9 260.1L401.1 262.9Z" fill="#e0eae8" stroke="#e0eae8"/><path d="M401.1 262.9L407.9 260.1L402.0 250.6L397.0 252.6Z" fill="#e2eae8" stroke="#e2eae8"/><path d="M397.0 252.6L402.0 250.6L396.1 240.8L392.7 242.1Z" fill="#e5eae9" stroke="#e5eae9"/><path d="M392.7 242.1L396.1 240.8L390.0 230.8L388.3 231.5Z" fill="#e7eae9" stroke="#e7eae9"/><path d="M388.3 231.5L390.0 230.8L383.8 220.7L383.8 220.7Z" fill="#e9eaea" stroke="#e9eaea"/><path d="M385.0 671.0L385.0 671.0L387.5 668.1L386.4 668.5Z" fill="#dedede" stroke="#dedede"/><path d="M386.4 668.5L387.5 668.1L395.9 657.7L391.3 659.4Z" fill="#dedede" stroke="#dedede"/><path d="M391.3 659.4L395.9 657.7L408.3 639.1L399.9 642.7Z" fill="#dedede" stroke="#dedede"/><path d="M399.9 642.7L408.3 639.1L415.3 616.3L406.0 621.7Z" fill="#dedede" stroke="#dedede"/><path d="M406.0 621.7L415.3 616.3L420.7 593.9L409.7 600.2Z" fill="#dddede" stroke="#dddede"/><path d="M409.7 600.2L420.7 593.9L425.8 572.7L413.2 579.9Z" fill="#d8dada" stroke="#d8dada"/><path d="M413.2 579.9L425.8 572.7L430.6 552.4L416.6 560.6Z" fill="#ced5d4" stroke="#ced5d4"/><path d="M416.6 560.6L430.6 552.4L435.2 533.0L419.8 541.9Z" fill="#c1d0cf" stroke="#c1d0cf"/><path d="M419.8 541.9L435.2 533.0L439.7 514.3L422.9 524.0Z" fill="#b4cdcb" stroke="#b4cdcb"/><path d="M422.9 524.0L439.7 514.3L444.0 496.2L425.8 506.6Z" fill="#a8ccc9" stroke="#a8ccc9"/><path d="M425.8 506.6L444.0 496.2L448.2 478.5L428.7 489.7Z" fill="#9ecdc9" stroke="#9ecdc9"/><path d="M428.7 489.7L448.2 478.5L452.2 461.4L431.5 473.2Z" fill="#98d0cb" stroke="#98d0cb"/><path d="M431.5 473.2L452.2 461.4L456.2 444.7L434.2 457.2Z" fill="#97d5d0" stroke="#97d5d0"/><path d="M434.2 457.2L456.2 444.7L460.0 428.4L436.9 441.5Z" fill="#97dad4" stroke="#97dad4"/><path d="M436.9 441.5L460.0 428.4L463.7 412.4L439.4 426.2Z" fill="#97dfd9" stroke="#97dfd9"/><path d="M439.4 426.2L463.7 412.4L467.4 396.7L441.9 411.1Z" fill="#97e4dd" stroke="#97e4dd"/><path d="M441.9 411.1L467.4 396.7L471.0 381.4L444.4 396.4Z" fill="#97e9e2" stroke="#97e9e2"/><path d="M444.4 396.4L471.0 381.4L474.4 366.4L446.8 381.9Z" fill="#97ede6" stroke="#97ede6"/><path d="M446.8 381.9L474.4 366.4L477.9 351.6L449.1 367.7Z" fill="#97f2eb" stroke="#97f2eb"/><path d="M449.1 367.7L477.9 351.6L481.2 337.0L451.4 353.7Z" fill="#97f7ef" stroke="#97f7ef"/><path d="M451.4 353.7L481.2 337.0L481.0 336.5L452.7 352.3Z" fill="#a0faf2" stroke="#a0faf2"/><path d="M452.7 352.3L481.0 336.5L480.3 335.3L453.5 350.4Z" fill="#a5faf3" stroke="#a5faf3"/><path d="M453.5 350.4L480.3 335.3L479.1 333.6L453.7 347.9Z" fill="#a9faf3" stroke="#a9faf3"/><path d="M453.7 347.9L479.1 333.6L477.2 331.2L453.2 344.6Z" fill="#aff9f3" stroke="#aff9f3"/><path d="M453.2 344.6L477.2 331.2L474.7 328.1L452.1 340.6Z" fill="#b6f7f2" stroke="#b6f7f2"/><path d="M452.1 340.6L474.7 328.1L471.6 324.4L450.3 335.9Z" fill="#bdf5f0" stroke="#bdf5f0"/><path d="M450.3 335.9L471.6 324.4L467.9 320.0L448.0 330.6Z" fill="#c3f3ef" stroke="#c3f3ef"/><path d="M448.0 330.6L467.9 320.0L463.7 315.1L445.1 324.7Z" fill="#c9f0ed" stroke="#c9f0ed"/><path d="M445.1 324.7L463.7 315.1L458.9 309.5L441.8 318.1Z" fill="#ceeeeb" stroke="#ceeeeb"/><path d="M441.8 318.1L458.9 309.5L453.7 303.3L437.9 311.1Z" fill="#d2ece9" stroke="#d2ece9"/><path d="M437.9 311.1L453.7 303.3L448.0 296.7L433.7 303.5Z" fill="#d5eae8" stroke="#d5eae8"/><path d="M433.7 303.5L448.0 296.7L441.9 289.6L429.1 295.6Z" fill="#d7e9e8" stroke="#d7e9e8"/><path d="M429.1 295.6L441.9 289.6L435.5 282.1L424.1 287.2Z" fill="#d9e9e8" stroke="#d9e9e8"/><path d="M424.1 287.2L435.5 282.1L428.8 274.2L418.9 278.5Z" fill="#dbe9e8" stroke="#dbe9e8"/><path d="M418.9 278.5L428.8 274.2L421.8 265.9L413.5 269.5Z" fill="#dee9e8" stroke="#dee9e8"/><path d="M413.5 269.5L421.8 265.9L414.5 257.4L407.9 260.1Z" fill="#e0e9e8" stroke="#e0e9e8"/><path d="M407.9 260.1L414.5 257.4L407.1 248.6L402.0 250.6Z" fill="#e2e9e8" stroke="#e2e9e8"/><path d="M402.0 250.6L407.1 248.6L399.5 239.5L396.1 240.8Z" fill="#e4e9e8" stroke="#e4e9e8"/><path d="M396.1 240.8L399.5 239.5L391.7 230.2L390.0 230.8Z" fill="#e6e9e9" stroke="#e6e9e9"/><path d="M390.0 230.8L391.7 230.2L383.8 220.7L383.8 220.7Z" fill="#e8e9e9" stroke="#e8e9e9"/><path d="M385.0 671.0L385.0 671.0L387.7 668.7L387.5 668.1Z" fill="#dedede" stroke="#dedede"/><path d="M387.5 668.1L387.7 668.7L396.9 660.5L395.9 657.7Z" fill="#dedede" stroke="#dedede"/><path d="M395.9 657.7L396.9 660.5L411.2 645.6L408.3 639.1Z" fill="#dedede" stroke="#dedede"/><path d="M408.3 639.1L411.2 645.6L420.5 625.9L415.3 616.3Z" fill="#dedede" stroke="#dedede"/><path d="M415.3 616.3L420.5 625.9L426.8 605.2L420.7 593.9Z" fill="#dddede" stroke="#dddede"/><path d="M420.7 593.9L426.8 605.2L432.7 585.6L425.8 572.7Z" fill="#d8dada" stroke="#d8dada"/><path d="M425.8 572.7L432.7 585.6L438.4 566.9L430.6 552.4Z" fill="#ced4d5" stroke="#ced4d5"/><path d="M430.6 552.4L438.4 566.9L443.8 548.9L435.2 533.0Z" fill="#c1cfd0" stroke="#c1cfd0"/><path d="M435.2 533.0L443.8 548.9L449.1 531.6L439.7 514.3Z" fill="#b4cbcd" stroke="#b4cbcd"/><path d="M439.7 514.3L449.1 531.6L454.1 514.8L444.0 496.2Z" fill="#a8c9cc" stroke="#a8c9cc"/><path d="M444.0 496.2L454.1 514.8L459.0 498.5L448.2 478.5Z" fill="#9ec9cd" stroke="#9ec9cd"/><path d="M448.2 478.5L459.0 498.5L463.8 482.6L452.2 461.4Z" fill="#98cbd0" stroke="#98cbd0"/><path d="M452.2 461.4L463.8 482.6L468.5 467.1L456.2 444.7Z" fill="#97d0d5" stroke="#97d0d5"/><path d="M456.2 444.7L468.5 467.1L473.0 452.0L460.0 428.4Z" fill="#97d4da" stroke="#97d4da"/><path d="M460.0 428.4L473.0 452.0L477.5 437.2L463.7 412.4Z" fill="#97d9df" stroke="#97d9df"/><path d="M463.7 412.4L477.5 437.2L481.8 422.7L467.4 396.7Z" fill="#97dde4" stroke="#97dde4"/><path d="M467.4 396.7L481.8 422.7L486.1 408.5L471.0 381.4Z" fill="#97e2e9" stroke="#97e2e9"/><path d="M471.0 381.4L486.1 408.5L490.2 394.5L474.4 366.4Z" fill="#97e6ed" stroke="#97e6ed"/><path d="M474.4 366.4L490.2 394.5L494.3 380.8L477.9 351.6Z" fill="#97ebf2" stroke="#97ebf2"/><path d="M477.9 351.6L494.3 380.8L498.3 367.3L481.2 337.0Z" fill="#97eff7" stroke="#97eff7"/><path d="M385.0 671.0L385.0 671.0L387.8 669.2L387.7 668.7Z" fill="#dedede" stroke="#dedede"/><path d="M387.7 668.7L387.8 669.2L397.8 662.6L396.9 660.5Z" fill="#dedede" stroke="#dedede"/><path d="M396.9 660.5L397.8 662.6L413.4 650.9L411.2 645.6Z" fill="#dedede" stroke="#dedede"/><path d="M411.2 645.6L413.4 650.9L425.0 634.8L420.5 625.9Z" fill="#dedede" stroke="#dedede"/><path d="M420.5 625.9L425.0 634.8L432.5 616.0L426.8 605.2Z" fill="#ddddde" stroke="#ddddde"/><path d="M426.8 605.2L432.5 616.0L439.3 598.0L432.7 585.6Z" fill="#d8d9da" stroke="#d8d9da"/><path d="M432.7 585.6L439.3 598.0L445.7 580.7L438.4 566.9Z" fill="#ced3d5" stroke="#ced3d5"/><path d="M438.4 566.9L445.7 580.7L451.9 564.1L443.8 548.9Z" fill="#c1cdd0" stroke="#c1cdd0"/><path d="M443.8 548.9L451.9 564.1L457.9 548.1L449.1 531.6Z" fill="#b4c7cd" stroke="#b4c7cd"/><path d="M449.1 531.6L457.9 548.1L463.7 532.6L454.1 514.8Z" fill="#a8c3cc" stroke="#a8c3cc"/><path d="M454.1 514.8L463.7 532.6L469.3 517.6L459.0 498.5Z" fill="#9ec1cd" stroke="#9ec1cd"/><path d="M459.0 498.5L469.3 517.6L474.8 502.9L463.8 482.6Z" fill="#98c2d0" stroke="#98c2d0"/><path d="M463.8 482.6L474.8 502.9L480.1 488.6L468.5 467.1Z" fill="#97c5d5" stroke="#97c5d5"/><path d="M468.5 467.1L480.1 488.6L485.3 474.6L473.0 452.0Z" fill="#97c9da" stroke="#97c9da"/><path d="M473.0 452.0L485.3 474.6L490.4 460.9L477.5 437.2Z" fill="#97cddf" stroke="#97cddf"/><path d="M477.5 437.2L490.4 460.9L495.4 447.5L481.8 422.7Z" fill="#97d0e4" stroke="#97d0e4"/><path d="M481.8 422.7L495.4 447.5L500.3 434.4L486.1 408.5Z" fill="#97d4e9" stroke="#97d4e9"/><path d="M486.1 408.5L500.3 434.4L505.1 421.4L490.2 394.5Z" fill="#97d8ed" stroke="#97d8ed"/><path d="M490.2 394.5L505.1 421.4L509.9 408.7L494.3 380.8Z" fill="#97dcf2" stroke="#97dcf2"/><path d="M494.3 380.8L509.9 408.7L514.5 396.2L498.3 367.3Z" fill="#97dff7" stroke="#97dff7"/><path d="M385.0 671.0L385.0 671.0L387.9 669.5L387.8 669.2Z" fill="#dedede" stroke="#dedede"/><path d="M387.8 669.2L387.9 669.5L398.3 664.2L397.8 662.6Z" fill="#dedede" stroke="#dedede"/><path d="M397.8 662.6L398.3 664.2L415.1 654.7L413.4 650.9Z" fill="#dedede" stroke="#dedede"/><path d="M413.4 650.9L415.1 654.7L428.4 642.0L425.0 634.8Z" fill="#dedede" stroke="#dedede"/><path d="M425.0 634.8L428.4 642.0L437.6 626.0L432.5 616.0Z" fill="#dddede" stroke="#dddede"/><path d="M432.5 616.0L437.6 626.0L445.1 609.3L439.3 598.0Z" fill="#d9dadb" stroke="#d9dadb"/><path d="M439.3 598.0L445.1 609.3L452.3 593.4L445.7 580.7Z" fill="#d0d4d6" stroke="#d0d4d6"/><path d="M445.7 580.7L452.3 593.4L459.1 578.1L451.9 564.1Z" fill="#c6cdd2" stroke="#c6cdd2"/><path d="M451.9 564.1L459.1 578.1L465.8 563.3L457.9 548.1Z" fill="#bbc7d0" stroke="#bbc7d0"/><path d="M457.9 548.1L465.8 563.3L472.2 549.0L463.7 532.6Z" fill="#b0c2ce" stroke="#b0c2ce"/><path d="M463.7 532.6L472.2 549.0L478.5 535.1L469.3 517.6Z" fill="#a8bfcf" stroke="#a8bfcf"/><path d="M469.3 517.6L478.5 535.1L484.6 521.6L474.8 502.9Z" fill="#a3bed2" stroke="#a3bed2"/><path d="M474.8 502.9L484.6 521.6L490.5 508.3L480.1 488.6Z" fill="#a2c1d6" stroke="#a2c1d6"/><path d="M480.1 488.6L490.5 508.3L496.3 495.4L485.3 474.6Z" fill="#a2c3da" stroke="#a2c3da"/><path d="M485.3 474.6L496.3 495.4L502.0 482.7L490.4 460.9Z" fill="#a2c5df" stroke="#a2c5df"/><path d="M490.4 460.9L502.0 482.7L507.6 470.3L495.4 447.5Z" fill="#a2c8e3" stroke="#a2c8e3"/><path d="M495.4 447.5L507.6 470.3L513.1 458.1L500.3 434.4Z" fill="#a2cae7" stroke="#a2cae7"/><path d="M500.3 434.4L513.1 458.1L518.4 446.1L505.1 421.4Z" fill="#a2cdeb" stroke="#a2cdeb"/><path d="M505.1 421.4L518.4 446.1L523.7 434.3L509.9 408.7Z" fill="#a2cfef" stroke="#a2cfef"/><path d="M509.9 408.7L523.7 434.3L528.9 422.7L514.5 396.2Z" fill="#a2d2f3" stroke="#a2d2f3"/><path d="M385.0 671.0L385.0 671.0L388.0 669.8L387.9 669.5Z" fill="#dedede" stroke="#dedede"/><path d="M387.9 669.5L388.0 669.8L398.7 665.3L398.3 664.2Z" fill="#dedede" stroke="#dedede"/><path d="M398.3 664.2L398.7 665.3L416.2 657.3L415.1 654.7Z" fill="#dedede" stroke="#dedede"/><path d="M415.1 654.7L416.2 657.3L430.7 646.8L428.4 642.0Z" fill="#dedede" stroke="#dedede"/><path d="M428.4 642.0L430.7 646.8L441.5 633.8L437.6 626.0Z" fill="#dedede" stroke="#dedede"/><path d="M437.6 626.0L441.5 633.8L449.7 618.9L445.1 609.3Z" fill="#dbdbdc" stroke="#dbdbdc"/><path d="M445.1 609.3L449.7 618.9L457.5 604.1L452.3 593.4Z" fill="#d6d7da" stroke="#d6d7da"/><path d="M452.3 593.4L457.5 604.1L464.9 589.9L459.1 578.1Z" fill="#d0d3d7" stroke="#d0d3d7"/><path d="M459.1 578.1L464.9 589.9L472.1 576.2L465.8 563.3Z" fill="#c9ced5" stroke="#c9ced5"/><path d="M465.8 563.3L472.1 576.2L479.0 562.9L472.2 549.0Z" fill="#c3cad5" stroke="#c3cad5"/><path d="M472.2 549.0L479.0 562.9L485.8 549.9L478.5 535.1Z" fill="#bec8d5" stroke="#bec8d5"/><path d="M478.5 535.1L485.8 549.9L492.4 537.3L484.6 521.6Z" fill="#bbc7d7" stroke="#bbc7d7"/><path d="M484.6 521.6L492.4 537.3L498.8 525.0L490.5 508.3Z" fill="#bbc7d9" stroke="#bbc7d9"/><path d="M490.5 508.3L498.8 525.0L505.1 512.9L496.3 495.4Z" fill="#bbc8dc" stroke="#bbc8dc"/><path d="M496.3 495.4L505.1 512.9L511.3 501.1L502.0 482.7Z" fill="#bbcade" stroke="#bbcade"/><path d="M502.0 482.7L511.3 501.1L517.3 489.5L507.6 470.3Z" fill="#bbcbe1" stroke="#bbcbe1"/><path d="M507.6 470.3L517.3 489.5L523.3 478.1L513.1 458.1Z" fill="#bbcce3" stroke="#bbcce3"/><path d="M513.1 458.1L523.3 478.1L529.1 466.9L518.4 446.1Z" fill="#bbcde6" stroke="#bbcde6"/><path d="M518.4 446.1L529.1 466.9L534.8 455.9L523.7 434.3Z" fill="#bbcee8" stroke="#bbcee8"/><path d="M523.7 434.3L534.8 455.9L540.5 445.0L528.9 422.7Z" fill="#bbcfeb" stroke="#bbcfeb"/><path d="M385.0 671.0L385.0 671.0L388.0 669.9L388.0 669.8Z" fill="#dedede" stroke="#dedede"/><path d="M388.0 669.8L388.0 669.9L398.9 665.8L398.7 665.3Z" fill="#dedede" stroke="#dedede"/><path d="M398.7 665.3L398.9 665.8L416.7 658.7L416.2 657.3Z" fill="#dedede" stroke="#dedede"/><path d="M416.2 657.3L416.7 658.7L431.9 649.4L430.7 646.8Z" fill="#dedede" stroke="#dedede"/><path d="M430.7 646.8L431.9 649.4L443.6 638.0L441.5 633.8Z" fill="#dedede" stroke="#dedede"/><path d="M441.5 633.8L443.6 638.0L452.5 624.8L449.7 618.9Z" fill="#dddddd" stroke="#dddddd"/><path d="M449.7 618.9L452.5 624.8L460.7 611.4L457.5 604.1Z" fill="#dbdcdd" stroke="#dbdcdd"/><path d="M457.5 604.1L460.7 611.4L468.5 598.0L464.9 589.9Z" fill="#dadadc" stroke="#dadadc"/><path d="M464.9 589.9L468.5 598.0L476.0 585.0L472.1 576.2Z" fill="#d7d8db" stroke="#d7d8db"/><path d="M472.1 576.2L476.0 585.0L483.3 572.3L479.0 562.9Z" fill="#d6d7db" stroke="#d6d7db"/><path d="M479.0 562.9L483.3 572.3L490.4 560.0L485.8 549.9Z" fill="#d4d6db" stroke="#d4d6db"/><path d="M485.8 549.9L490.4 560.0L497.3 548.0L492.4 537.3Z" fill="#d3d5dc" stroke="#d3d5dc"/><path d="M492.4 537.3L497.3 548.0L504.1 536.3L498.8 525.0Z" fill="#d3d5dd" stroke="#d3d5dd"/><path d="M498.8 525.0L504.1 536.3L510.7 524.8L505.1 512.9Z" fill="#d3d6dd" stroke="#d3d6dd"/><path d="M505.1 512.9L510.7 524.8L517.2 513.5L511.3 501.1Z" fill="#d3d6de" stroke="#d3d6de"/><path d="M511.3 501.1L517.2 513.5L523.5 502.5L517.3 489.5Z" fill="#d3d6df" stroke="#d3d6df"/><path d="M517.3 489.5L523.5 502.5L529.8 491.6L523.3 478.1Z" fill="#d3d6e0" stroke="#d3d6e0"/><path d="M523.3 478.1L529.8 491.6L535.9 480.9L529.1 466.9Z" fill="#d3d6e0" stroke="#d3d6e0"/><path d="M529.1 466.9L535.9 480.9L542.0 470.4L534.8 455.9Z" fill="#d3d7e1" stroke="#d3d7e1"/><path d="M534.8 455.9L542.0 470.4L547.9 460.0L540.5 445.0Z" fill="#d3d7e2" stroke="#d3d7e2"/><path d="M385.0 671.0L385.0 671.0L388.0 669.9L388.0 669.9Z" fill="#dedede" stroke="#dedede"/><path d="M388.0 669.9L388.0 669.9L398.9 666.0L398.9 665.8Z" fill="#dedede" stroke="#dedede"/><path d="M398.9 665.8L398.9 666.0L416.8 659.0L416.7 658.7Z" fill="#dedede" stroke="#dedede"/><path d="M416.7 658.7L416.8 659.0L432.1 650.1L431.9 649.4Z" fill="#dedede" stroke="#dedede"/><path d="M431.9 649.4L432.1 650.1L444.1 639.1L443.6 638.0Z" fill="#dedede" stroke="#dedede"/><path d="M443.6 638.0L444.1 639.1L453.2 626.4L452.5 624.8Z" fill="#dedede" stroke="#dedede"/><path d="M452.5 624.8L453.2 626.4L461.6 613.5L460.7 611.4Z" fill="#dedede" stroke="#dedede"/><path d="M460.7 611.4L461.6 613.5L469.5 600.5L468.5 598.0Z" fill="#dedede" stroke="#dedede"/><path d="M468.5 598.0L469.5 600.5L477.1 587.7L476.0 585.0Z" fill="#dedede" stroke="#dedede"/><path d="M476.0 585.0L477.1 587.7L484.5 575.2L483.3 572.3Z" fill="#dedede" stroke="#dedede"/><path d="M483.3 572.3L484.5 575.2L491.7 563.1L490.4 560.0Z" fill="#dedede" stroke="#dedede"/><path d="M490.4 560.0L491.7 563.1L498.7 551.2L497.3 548.0Z" fill="#dedede" stroke="#dedede"/><path d="M497.3 548.0L498.7 551.2L505.6 539.6L504.1 536.3Z" fill="#dedede" stroke="#dedede"/><path d="M504.1 536.3L505.6 539.6L512.3 528.3L510.7 524.8Z" fill="#dedede" stroke="#dedede"/><path d="M510.7 524.8L512.3 528.3L518.9 517.1L517.2 513.5Z" fill="#dedede" stroke="#dedede"/><path d="M517.2 513.5L518.9 517.1L525.4 506.2L523.5 502.5Z" fill="#dedede" stroke="#dedede"/><path d="M523.5 502.5L525.4 506.2L531.7 495.4L529.8 491.6Z" fill="#dedede" stroke="#dedede"/><path d="M529.8 491.6L531.7 495.4L538.0 484.8L535.9 480.9Z" fill="#dedede" stroke="#dedede"/><path d="M535.9 480.9L538.0 484.8L544.2 474.4L542.0 470.4Z" fill="#dedede" stroke="#dedede"/><path d="M542.0 470.4L544.2 474.4L550.2 464.1L547.9 460.0Z" fill="#dedede" stroke="#dedede"/></g><g filter="url(#bl2)"><path d="M322 436L347 448L378 497L386 562L372 560L342 503L322 470Z" fill="#6a8a78" opacity=".3"/></g><g fill="none" stroke-width=".9" stroke-linecap="round" opacity=".85"><path d="M385.0 671.0L382.7 668.2M385.0 671.0L382.7 668.1M385.0 671.0L382.7 668.0M385.0 671.0L382.7 668.2" stroke="#100"/><path d="M382.7 668.2L374.4 658.3M382.7 668.2L374.4 658.3M382.7 668.2L382.7 668.1" stroke="#200"/><path d="M374.4 658.3L359.1 640.5M374.4 658.3L359.1 640.5M374.4 658.3L374.4 658.2" stroke="#300"/><path d="M359.1 640.5L341.8 619.1M359.1 640.5L341.8 619.1" stroke="#400"/><path d="M341.8 619.1L325.9 598.1M341.8 619.1L325.9 598.1" stroke="#500"/><path d="M325.9 598.1L311.2 578.1M311.2 578.1L297.5 558.9M325.9 598.1L311.2 578.1M311.2 578.1L297.5 558.9" stroke="#600"/><path d="M297.5 558.9L284.8 540.4M297.5 558.9L284.8 540.4" stroke="#700"/><path d="M284.8 540.4L273.0 522.4M284.8 540.4L273.0 522.4" stroke="#800"/><path d="M273.0 522.4L262.0 504.9M262.0 504.9L251.8 487.8M273.0 522.4L262.0 504.9M262.0 504.9L251.8 487.8" stroke="#900"/><path d="M251.8 487.8L242.3 471.1M251.8 487.8L242.3 471.1" stroke="#a00"/><path d="M242.3 471.1L233.5 454.6M233.5 454.6L225.1 438.5M242.3 471.1L233.5 454.6M233.5 454.6L225.1 438.5" stroke="#b00"/><path d="M225.1 438.5L216.8 422.6M216.8 422.6L208.6 407.1M225.1 438.5L216.8 422.6M216.8 422.6L208.6 407.1" stroke="#c00"/><path d="M208.6 407.1L200.6 391.8M208.6 407.1L200.6 391.8" stroke="#d00"/><path d="M200.6 391.8L192.7 376.7M192.7 376.7L185.0 361.8M200.6 391.8L192.7 376.7M192.7 376.7L185.0 361.8" stroke="#e00"/><path d="M185.0 361.8L177.3 347.2M185.0 361.8L177.3 347.2" stroke="#f00"/><path d="M382.7 668.1L374.4 658.2M382.7 668.0L374.2 657.6M382.6 667.8L373.8 656.6M382.7 668.1L382.7 668.0M382.7 668.0L382.6 667.8M382.6 667.8L382.5 667.4M382.5 667.4L382.4 667.0M382.4 667.0L382.2 666.4" stroke="#210"/><path d="M374.4 658.2L359.0 640.1M374.2 657.6L358.6 638.8M374.4 658.2L374.2 657.6M374.2 657.6L373.8 656.6" stroke="#310"/><path d="M359.0 640.1L341.8 618.5M359.1 640.5L359.0 640.1M359.0 640.1L358.6 638.8M341.8 619.1L341.8 618.5" stroke="#410"/><path d="M341.8 618.5L325.9 597.4M325.9 598.1L325.9 597.4" stroke="#510"/><path d="M325.9 597.4L311.2 577.3M311.2 578.1L311.2 577.3" stroke="#610"/><path d="M311.2 577.3L297.7 558.1M325.5 594.9L311.1 574.5M311.2 577.3L311.1 574.5" stroke="#620"/><path d="M297.7 558.1L285.1 539.5M297.7 558.1L297.8 554.9" stroke="#720"/><path d="M285.1 539.5L273.4 521.5" stroke="#820"/><path d="M273.4 521.5L262.6 503.9M262.6 503.9L252.6 486.7" stroke="#920"/><path d="M252.6 486.7L243.3 469.9M252.6 486.7L254.7 482.1" stroke="#a30"/><path d="M243.3 469.9L234.6 453.4M234.6 453.4L226.2 437.2" stroke="#b30"/><path d="M226.2 437.2L218.0 421.4M218.0 421.4L209.9 405.8" stroke="#c30"/><path d="M209.9 405.8L201.9 390.5" stroke="#d30"/><path d="M201.9 390.5L194.1 375.4M194.1 375.4L186.3 360.5" stroke="#e40"/><path d="M186.3 360.5L178.7 345.9" stroke="#f40"/><path d="M358.6 638.8L341.3 616.4M357.8 636.3L340.4 612.8M358.6 638.8L357.8 636.3M357.8 636.3L356.5 632.6M341.8 618.5L341.3 616.4M341.3 616.4L340.4 612.8" stroke="#420"/><path d="M341.3 616.4L325.5 594.9M325.9 597.4L325.5 594.9" stroke="#520"/><path d="M311.1 574.5L297.8 554.9M324.8 590.7L310.8 569.6M311.1 574.5L310.8 569.6" stroke="#630"/><path d="M297.8 554.9L285.6 535.9" stroke="#730"/><path d="M285.6 535.9L274.4 517.5M285.1 539.5L285.6 535.9M273.4 521.5L274.4 517.5" stroke="#830"/><path d="M274.4 517.5L264.1 499.6M264.1 499.6L254.7 482.1" stroke="#940"/><path d="M254.7 482.1L246.0 465.0M243.3 469.9L246.0 465.0" stroke="#a40"/><path d="M246.0 465.0L237.6 448.2M237.6 448.2L229.4 431.8" stroke="#b50"/><path d="M229.4 431.8L221.3 415.7M221.3 415.7L213.3 399.9" stroke="#c50"/><path d="M213.3 399.9L205.5 384.3" stroke="#d60"/><path d="M205.5 384.3L197.8 369.0M197.8 369.0L190.2 354.0" stroke="#e60"/><path d="M190.2 354.0L182.7 339.2" stroke="#f60"/><path d="M385.0 671.0L382.6 667.8M385.0 671.0L382.5 667.4M385.0 671.0L382.4 667.0M385.0 671.0L382.2 666.4M385.0 671.0L382.9 667.3M385.0 671.0L383.5 668.0M385.0 671.0L383.9 668.5" stroke="#110"/><path d="M373.8 656.6L357.8 636.3M373.2 655.0L356.5 632.6M373.8 656.6L373.2 655.0M373.2 655.0L372.4 652.8M372.4 652.8L371.4 650.1" stroke="#320"/><path d="M340.4 612.8L324.8 590.7M325.5 594.9L324.8 590.7" stroke="#530"/><path d="M310.8 569.6L298.0 549.3M324.0 584.9L310.5 562.9M310.8 569.6L310.5 562.9" stroke="#640"/><path d="M298.0 549.3L286.5 529.7M297.8 554.9L298.0 549.3" stroke="#740"/><path d="M286.5 529.7L276.1 510.7M286.5 529.7L288.0 521.3" stroke="#850"/><path d="M276.1 510.7L266.8 492.2M264.1 499.6L266.8 492.2" stroke="#950"/><path d="M266.8 492.2L258.3 474.1M278.9 501.4L270.4 482.1M266.8 492.2L270.4 482.1" stroke="#960"/><path d="M258.3 474.1L249.9 456.4M258.3 474.1L262.1 463.3" stroke="#a60"/><path d="M249.9 456.4L241.7 439.2M237.6 448.2L241.7 439.2M229.4 431.8L233.7 422.3" stroke="#b60"/><path d="M241.7 439.2L233.7 422.3M241.7 439.2L246.0 427.1" stroke="#b70"/><path d="M233.7 422.3L225.8 405.8M225.8 405.8L218.0 389.5" stroke="#c70"/><path d="M218.0 389.5L210.4 373.6M218.0 389.5L223.0 375.5" stroke="#d80"/><path d="M210.4 373.6L202.9 357.9M202.9 357.9L195.5 342.4" stroke="#e80"/><path d="M195.5 342.4L188.2 327.2" stroke="#f90"/><path d="M382.5 667.4L373.2 655.0M382.4 667.0L372.4 652.8M382.2 666.4L371.4 650.1M382.9 667.3L374.9 654.2M383.5 668.0L377.7 657.4" stroke="#220"/><path d="M356.5 632.6L339.2 608.0M356.5 632.6L354.9 627.9M354.9 627.9L353.1 622.6M340.4 612.8L339.2 608.0" stroke="#430"/><path d="M339.2 608.0L324.0 584.9M337.8 602.1L323.1 577.9M324.8 590.7L324.0 584.9M324.0 584.9L323.1 577.9" stroke="#540"/><path d="M310.5 562.9L298.5 541.8M323.1 577.9L310.4 554.8M310.5 562.9L310.4 554.8" stroke="#650"/><path d="M298.5 541.8L288.0 521.3M298.0 549.3L298.5 541.8" stroke="#750"/><path d="M288.0 521.3L278.9 501.4M288.0 521.3L290.4 511.1M276.1 510.7L278.9 501.4" stroke="#860"/><path d="M270.4 482.1L262.1 463.3M281.9 490.2L273.5 470.0M270.4 482.1L273.5 470.0" stroke="#970"/><path d="M262.1 463.3L253.9 445.0M249.9 456.4L253.9 445.0" stroke="#a70"/><path d="M253.9 445.0L246.0 427.1M246.0 427.1L238.2 409.5M233.7 422.3L238.2 409.5" stroke="#b80"/><path d="M238.2 409.5L230.5 392.4M230.5 392.4L223.0 375.5" stroke="#c90"/><path d="M223.0 375.5L215.6 359.0M223.0 375.5L227.4 358.8" stroke="#da0"/><path d="M215.6 359.0L208.3 342.7M208.3 342.7L201.1 326.7M195.5 342.4L201.1 326.7" stroke="#ea0"/><path d="M201.1 326.7L193.9 311.0" stroke="#fb0"/><path d="M372.4 652.8L354.9 627.9M371.4 650.1L353.1 622.6M374.9 654.2L360.3 630.9" stroke="#330"/><path d="M354.9 627.9L337.8 602.1M353.1 622.6L336.3 595.5M360.3 630.9L344.9 605.8M339.2 608.0L337.8 602.1M337.8 602.1L336.3 595.5M336.3 595.5L344.9 605.8M344.9 605.8L353.2 615.4" stroke="#440"/><path d="M310.4 554.8L299.5 532.6M322.2 570.0L310.6 545.6M310.6 545.6L301.2 522.2M321.5 559.5L313.0 537.8M310.4 554.8L310.6 545.6M310.6 545.6L321.5 559.5" stroke="#660"/><path d="M299.5 532.6L290.4 511.1M298.5 541.8L299.5 532.6M299.5 532.6L301.2 522.2" stroke="#760"/><path d="M290.4 511.1L281.9 490.2M290.4 511.1L292.5 499.5M278.9 501.4L281.9 490.2" stroke="#870"/><path d="M273.5 470.0L265.5 450.4M273.5 470.0L276.1 456.5" stroke="#980"/><path d="M265.5 450.4L257.5 431.3M265.5 450.4L268.1 435.9" stroke="#a90"/><path d="M257.5 431.3L249.8 412.6M246.0 427.1L249.8 412.6M238.2 409.5L242.2 394.3" stroke="#b90"/><path d="M249.8 412.6L242.2 394.3M249.8 412.6L252.8 396.3" stroke="#ba0"/><path d="M242.2 394.3L234.7 376.4M230.5 392.4L234.7 376.4" stroke="#ca0"/><path d="M234.7 376.4L227.4 358.8M234.7 376.4L238.1 358.4" stroke="#cb0"/><path d="M227.4 358.8L220.2 341.5M215.6 359.0L220.2 341.5" stroke="#db0"/><path d="M220.2 341.5L213.0 324.6M213.0 324.6L206.0 307.9M201.1 326.7L206.0 307.9" stroke="#ec0"/><path d="M206.0 307.9L199.0 291.5" stroke="#fd0"/><path d="M336.3 595.5L322.2 570.0M323.1 577.9L322.2 570.0M322.2 570.0L332.1 582.1" stroke="#550"/><path d="M301.2 522.2L292.5 499.5" stroke="#770"/><path d="M292.5 499.5L284.2 477.7M281.9 490.2L284.2 477.7M284.2 477.7L298.4 496.4" stroke="#880"/><path d="M284.2 477.7L276.1 456.5M276.1 456.5L268.1 435.9" stroke="#990"/><path d="M268.1 435.9L260.4 415.9M257.5 431.3L260.4 415.9M260.4 415.9L278.0 438.9" stroke="#aa0"/><path d="M260.4 415.9L252.8 396.3M252.8 396.3L245.4 377.1M242.2 394.3L245.4 377.1M245.4 377.1L265.1 402.9" stroke="#bb0"/><path d="M245.4 377.1L238.1 358.4M238.1 358.4L230.9 340.0" stroke="#cc0"/><path d="M230.9 340.0L223.8 321.9" stroke="#dd0"/><path d="M223.8 321.9L216.8 304.2M216.8 304.2L209.9 286.7M206.0 307.9L209.9 286.7M209.9 286.7L234.7 318.7" stroke="#ee0"/><path d="M209.9 286.7L203.1 269.6" stroke="#ff0"/><path d="M203.1 269.6L203.6 269.3" stroke="#ff1"/><path d="M203.6 269.3L206.0 268.7" stroke="#ff2"/><path d="M206.0 268.7L210.2 267.8" stroke="#ff3"/><path d="M210.2 267.8L216.2 266.6" stroke="#ff4"/><path d="M216.2 266.6L223.7 265.1" stroke="#ff5"/><path d="M223.7 265.1L232.4 263.3M232.4 263.3L242.1 261.2" stroke="#ff6"/><path d="M242.1 261.2L252.4 258.9" stroke="#ff7"/><path d="M252.4 258.9L263.2 256.5" stroke="#ff8"/><path d="M263.2 256.5L274.2 253.9M274.2 253.9L285.4 251.1M274.2 253.9L288.0 270.5" stroke="#ff9"/><path d="M285.4 251.1L296.7 248.2M285.4 251.1L297.8 266.0M296.7 248.2L307.7 261.4" stroke="#ffa"/><path d="M296.7 248.2L308.0 245.2M308.0 245.2L319.2 242.0M308.0 245.2L317.6 256.7M319.2 242.0L327.4 251.9" stroke="#ffb"/><path d="M319.2 242.0L330.3 238.7M330.3 238.7L341.3 235.3M337.2 246.9L346.8 241.9M330.3 238.7L337.2 246.9" stroke="#ffc"/><path d="M341.3 235.3L352.2 231.8M346.8 241.9L356.2 236.7M341.3 235.3L346.8 241.9M352.2 231.8L356.2 236.7M356.2 236.7L360.3 241.5" stroke="#ffd"/><path d="M352.2 231.8L362.9 228.2M362.9 228.2L373.4 224.5M356.2 236.7L365.6 231.5M365.6 231.5L374.8 226.1M360.3 241.5L368.3 234.7M368.3 234.7L376.1 227.7M370.9 237.8L377.4 229.3M362.9 228.2L365.6 231.5M365.6 231.5L368.3 234.7M368.3 234.7L370.9 237.8M373.4 224.5L374.8 226.1M374.8 226.1L376.1 227.7M376.1 227.7L377.4 229.3M377.4 229.3L378.8 230.9M378.8 230.9L380.1 232.5" stroke="#ffe"/><path d="M373.4 224.5L383.8 220.7M374.8 226.1L383.8 220.7M376.1 227.7L383.8 220.7M377.4 229.3L383.8 220.7M378.8 230.9L383.8 220.7M380.1 232.5L383.8 220.7M381.4 234.1L383.8 220.7M383.1 233.4L383.8 220.7M384.8 232.8L383.8 220.7M386.6 232.1L383.8 220.7M388.3 231.5L383.8 220.7M390.0 230.8L383.8 220.7M391.7 230.2L383.8 220.7" stroke="#fff"/><path d="M344.9 605.8L332.1 582.1M353.2 615.4L341.6 593.4M332.1 582.1L341.6 593.4M341.6 593.4L350.3 603.5" stroke="#450"/><path d="M332.1 582.1L321.5 559.5M332.1 572.5L324.5 552.3M321.5 559.5L332.1 572.5" stroke="#560"/><path d="M313.0 537.8L305.6 516.7M301.2 522.2L313.0 537.8M313.0 537.8L324.5 552.3" stroke="#670"/><path d="M305.6 516.7L298.4 496.4M292.5 499.5L305.6 516.7M298.4 496.4L312.2 513.9" stroke="#780"/><path d="M298.4 496.4L291.4 476.7M306.3 495.6L300.6 477.8M291.4 476.7L306.3 495.6" stroke="#790"/><path d="M291.4 476.7L284.6 457.6M276.1 456.5L291.4 476.7" stroke="#890"/><path d="M284.6 457.6L278.0 438.9M268.1 435.9L284.6 457.6" stroke="#9a0"/><path d="M278.0 438.9L271.5 420.7M271.5 420.7L289.6 443.5M265.1 402.9L284.3 426.9" stroke="#9b0"/><path d="M271.5 420.7L265.1 402.9M252.8 396.3L271.5 420.7" stroke="#ab0"/><path d="M265.1 402.9L258.8 385.4M258.8 385.4L279.0 410.6" stroke="#ac0"/><path d="M258.8 385.4L252.7 368.3M238.1 358.4L258.8 385.4" stroke="#bc0"/><path d="M252.7 368.3L246.6 351.5M246.6 351.5L268.7 379.0" stroke="#bd0"/><path d="M246.6 351.5L240.6 334.9M240.6 334.9L234.7 318.7M234.7 318.7L258.7 348.5" stroke="#ce0"/><path d="M234.7 318.7L228.8 302.7" stroke="#df0"/><path d="M228.8 302.7L228.1 300.9" stroke="#df1"/><path d="M228.1 300.9L229.3 298.7" stroke="#df2"/><path d="M229.3 298.7L232.4 296.2" stroke="#df3"/><path d="M232.4 296.2L237.3 293.4M232.4 296.2L254.1 323.1M237.3 293.4L258.0 318.8" stroke="#df4"/><path d="M237.3 293.4L243.7 290.2M223.7 265.1L243.7 290.2" stroke="#ef5"/><path d="M243.7 290.2L251.2 286.7M251.2 286.7L259.7 282.9M232.4 263.3L251.2 286.7" stroke="#ef6"/><path d="M259.7 282.9L268.8 279.0M242.1 261.2L259.7 282.9" stroke="#ef7"/><path d="M268.8 279.0L278.2 274.8M252.4 258.9L268.8 279.0M263.2 256.5L278.2 274.8" stroke="#ef8"/><path d="M278.2 274.8L288.0 270.5M288.0 270.5L297.8 266.0M288.0 270.5L301.5 286.7" stroke="#ef9"/><path d="M297.8 266.0L307.7 261.4M297.8 266.0L310.0 280.6M307.7 261.4L318.6 274.4" stroke="#efa"/><path d="M307.7 261.4L317.6 256.7M317.6 256.7L327.4 251.9M318.6 274.4L327.1 268.0M327.1 268.0L335.6 261.6M317.6 256.7L327.1 268.0M327.4 251.9L335.6 261.6M335.6 261.6L343.6 271.1" stroke="#efb"/><path d="M327.4 251.9L337.2 246.9M335.6 261.6L343.9 255.0M343.9 255.0L352.2 248.3M350.6 262.9L357.5 254.7M337.2 246.9L343.9 255.0M343.9 255.0L350.6 262.9" stroke="#efc"/><path d="M377.7 657.4L366.8 638.4M379.7 659.8L371.8 644.1M371.4 650.1L374.9 654.2M374.9 654.2L377.7 657.4M377.7 657.4L379.7 659.8" stroke="#230"/><path d="M366.8 638.4L353.2 615.4M353.1 622.6L360.3 630.9M360.3 630.9L366.8 638.4M353.2 615.4L360.7 623.8" stroke="#340"/><path d="M341.6 593.4L332.1 572.5M341.8 584.0L335.1 565.2M332.1 572.5L341.8 584.0" stroke="#460"/><path d="M324.5 552.3L318.2 532.8M324.5 552.3L335.1 565.2" stroke="#570"/><path d="M318.2 532.8L312.2 513.9M305.6 516.7L318.2 532.8M312.2 513.9L324.9 529.3" stroke="#680"/><path d="M312.2 513.9L306.3 495.6M320.0 512.2L315.3 495.6M306.3 495.6L320.0 512.2" stroke="#690"/><path d="M300.6 477.8L295.1 460.4M295.1 460.4L310.8 479.4" stroke="#7a0"/><path d="M295.1 460.4L289.6 443.5M289.6 443.5L284.3 426.9M284.3 426.9L301.9 448.1" stroke="#8b0"/><path d="M284.3 426.9L279.0 410.6M279.0 410.6L273.8 394.7" stroke="#9c0"/><path d="M273.8 394.7L268.7 379.0M252.7 368.3L273.8 394.7" stroke="#ad0"/><path d="M268.7 379.0L263.7 363.6M263.7 363.6L258.7 348.5M258.7 348.5L280.9 374.7" stroke="#ae0"/><path d="M258.7 348.5L253.8 333.6" stroke="#bf0"/><path d="M253.8 333.6L252.0 330.5" stroke="#bf1"/><path d="M252.0 330.5L252.1 327.0" stroke="#bf2"/><path d="M252.1 327.0L254.1 323.1M229.3 298.7L252.1 327.0" stroke="#cf3"/><path d="M254.1 323.1L258.0 318.8" stroke="#cf4"/><path d="M258.0 318.8L263.3 314.1" stroke="#cf5"/><path d="M263.3 314.1L269.7 309.1M269.7 309.1L277.0 303.8M269.7 309.1L287.5 330.2" stroke="#cf6"/><path d="M277.0 303.8L284.9 298.3M259.7 282.9L277.0 303.8" stroke="#df7"/><path d="M284.9 298.3L293.1 292.6M268.8 279.0L284.9 298.3M278.2 274.8L293.1 292.6" stroke="#df8"/><path d="M293.1 292.6L301.5 286.7M301.5 286.7L310.0 280.6M301.5 286.7L314.7 302.2" stroke="#df9"/><path d="M310.0 280.6L318.6 274.4M322.0 294.7L329.3 287.0M310.0 280.6L322.0 294.7M318.6 274.4L329.3 287.0" stroke="#dfa"/><path d="M352.2 248.3L360.3 241.5M357.5 254.7L364.3 246.3M362.8 260.9L368.3 251.0M346.8 241.9L352.2 248.3M352.2 248.3L357.5 254.7M357.5 254.7L362.8 260.9M360.3 241.5L364.3 246.3M364.3 246.3L368.3 251.0M368.3 251.0L372.2 255.7" stroke="#efd"/><path d="M383.9 668.5L379.7 659.8M384.2 668.9L381.0 661.5M384.4 669.1L381.8 662.4M382.2 666.4L382.9 667.3M382.9 667.3L383.5 668.0M383.5 668.0L383.9 668.5M383.9 668.5L384.2 668.9M384.2 668.9L384.4 669.1" stroke="#120"/><path d="M371.8 644.1L360.7 623.8M375.1 647.9L366.7 630.5M366.8 638.4L371.8 644.1M371.8 644.1L375.1 647.9M360.7 623.8L366.7 630.5M366.7 630.5L370.0 634.2" stroke="#240"/><path d="M360.7 623.8L350.3 603.5M350.3 603.5L357.3 611.4" stroke="#350"/><path d="M350.3 603.5L341.8 584.0M349.7 593.0L343.8 575.3M341.8 584.0L349.7 593.0" stroke="#360"/><path d="M335.1 565.2L329.8 547.0M335.1 565.2L343.8 575.3" stroke="#470"/><path d="M329.8 547.0L324.9 529.3M318.2 532.8L329.8 547.0" stroke="#580"/><path d="M324.9 529.3L320.0 512.2M320.0 512.2L331.3 525.4" stroke="#590"/><path d="M315.3 495.6L310.8 479.4M300.6 477.8L315.3 495.6" stroke="#6a0"/><path d="M310.8 479.4L306.3 463.6M306.3 463.6L319.9 479.4M301.9 448.1L316.3 464.8" stroke="#6b0"/><path d="M306.3 463.6L301.9 448.1M289.6 443.5L306.3 463.6" stroke="#7b0"/><path d="M301.9 448.1L297.5 432.9M297.5 432.9L293.3 418.0" stroke="#7c0"/><path d="M293.3 418.0L289.1 403.3M273.8 394.7L293.3 418.0" stroke="#8d0"/><path d="M289.1 403.3L284.9 388.9M284.9 388.9L280.9 374.7" stroke="#8e0"/><path d="M280.9 374.7L276.8 360.8" stroke="#9f0"/><path d="M276.8 360.8L274.2 357.0" stroke="#9f1"/><path d="M274.2 357.0L273.5 352.6" stroke="#9f2"/><path d="M273.5 352.6L274.7 347.7" stroke="#af3"/><path d="M274.7 347.7L277.7 342.3" stroke="#af4"/><path d="M277.7 342.3L282.1 336.5M282.1 336.5L299.3 356.5" stroke="#af5"/><path d="M282.1 336.5L287.5 330.2M287.5 330.2L293.8 323.6" stroke="#bf6"/><path d="M293.8 323.6L300.5 316.7" stroke="#bf7"/><path d="M300.5 316.7L307.5 309.6M284.9 298.3L300.5 316.7M293.1 292.6L307.5 309.6" stroke="#cf8"/><path d="M307.5 309.6L314.7 302.2M314.7 302.2L322.0 294.7M314.7 302.2L327.5 317.1" stroke="#cf9"/><path d="M329.3 287.0L336.5 279.1M336.5 279.1L343.6 271.1M327.1 268.0L336.5 279.1M336.5 279.1L345.7 289.8M343.6 271.1L351.5 280.3" stroke="#dfb"/><path d="M343.6 271.1L350.6 262.9M351.5 280.3L357.2 270.7M357.2 270.7L362.8 260.9M363.7 278.3L368.1 267.1M350.6 262.9L357.2 270.7M357.2 270.7L363.7 278.3" stroke="#dfc"/><path d="M364.3 246.3L370.9 237.8M368.3 251.0L373.6 241.0M373.6 241.0L378.8 230.9M372.2 255.7L376.2 244.2M376.2 244.2L380.1 232.5M376.1 260.3L378.8 247.3M378.8 247.3L381.4 234.1M381.4 258.4L382.3 246.0M382.3 246.0L383.1 233.4M386.6 256.5L385.8 244.7M385.8 244.7L384.8 232.8M391.8 254.6L389.2 243.4M370.9 237.8L373.6 241.0M373.6 241.0L376.2 244.2M376.2 244.2L378.8 247.3M378.8 247.3L382.3 246.0M382.3 246.0L385.8 244.7M385.8 244.7L389.2 243.4M380.1 232.5L381.4 234.1M381.4 234.1L383.1 233.4" stroke="#efe"/><path d="M385.0 671.0L384.2 668.9M385.0 671.0L384.4 669.1M385.0 671.0L384.4 669.2M385.0 671.0L384.5 669.2M385.0 671.0L384.7 669.1" stroke="#010"/><path d="M381.0 661.5L375.1 647.9M381.8 662.4L376.9 650.0M379.7 659.8L381.0 661.5M381.0 661.5L381.8 662.4" stroke="#130"/><path d="M366.7 630.5L357.3 611.4M357.3 611.4L361.8 616.3" stroke="#250"/><path d="M357.3 611.4L349.7 593.0M354.7 598.7L349.3 581.7M349.7 593.0L354.7 598.7" stroke="#260"/><path d="M343.8 575.3L339.3 558.2" stroke="#370"/><path d="M339.3 558.2L335.2 541.5M339.3 558.2L345.4 565.1M335.2 541.5L341.8 549.1" stroke="#380"/><path d="M335.2 541.5L331.3 525.4M331.3 525.4L327.4 509.7" stroke="#490"/><path d="M327.4 509.7L323.6 494.4M323.6 494.4L331.8 503.7" stroke="#4a0"/><path d="M323.6 494.4L319.9 479.4M319.9 479.4L316.3 464.8" stroke="#5b0"/><path d="M316.3 464.8L312.7 450.4M312.7 450.4L309.2 436.3" stroke="#5c0"/><path d="M309.2 436.3L305.7 422.4" stroke="#6d0"/><path d="M305.7 422.4L302.3 408.8M302.3 408.8L299.0 395.4" stroke="#6e0"/><path d="M299.0 395.4L295.7 382.2" stroke="#6f0"/><path d="M295.7 382.2L293.0 378.5" stroke="#7f1"/><path d="M293.0 378.5L292.1 374.1" stroke="#7f2"/><path d="M292.1 374.1L293.0 368.9" stroke="#8f3"/><path d="M293.0 368.9L295.5 363.0M295.5 363.0L310.3 379.7" stroke="#8f4"/><path d="M295.5 363.0L299.3 356.5" stroke="#9f5"/><path d="M299.3 356.5L304.1 349.4M304.1 349.4L318.7 366.0" stroke="#9f6"/><path d="M304.1 349.4L309.5 341.9M287.5 330.2L304.1 349.4" stroke="#af6"/><path d="M309.5 341.9L315.3 333.9M293.8 323.6L309.5 341.9" stroke="#af7"/><path d="M315.3 333.9L321.4 325.7M315.3 333.9L329.0 349.5M321.4 325.7L334.3 340.5" stroke="#af8"/><path d="M321.4 325.7L327.5 317.1M327.5 317.1L333.6 308.2M327.5 317.1L339.6 330.9" stroke="#bf9"/><path d="M333.6 308.2L339.7 299.1M322.0 294.7L333.6 308.2M329.3 287.0L339.7 299.1" stroke="#cfa"/><path d="M339.7 299.1L345.7 289.8M345.7 289.8L351.5 280.3M354.6 300.2L359.3 289.4M345.7 289.8L354.6 300.2M351.5 280.3L359.3 289.4M359.3 289.4L366.8 298.1" stroke="#cfb"/><path d="M376.9 650.0L370.0 634.2M375.1 647.9L376.9 650.0M376.9 650.0L377.3 650.7M370.0 634.2L370.9 635.3" stroke="#140"/><path d="M370.0 634.2L361.8 616.3M361.8 616.3L363.1 617.9" stroke="#150"/><path d="M361.8 616.3L354.7 598.7M354.7 598.7L356.2 600.4" stroke="#160"/><path d="M349.3 581.7L345.4 565.1M343.8 575.3L349.3 581.7" stroke="#270"/><path d="M345.4 565.1L341.8 549.1" stroke="#280"/><path d="M341.8 549.1L338.4 533.6M338.4 533.6L335.0 518.4" stroke="#290"/><path d="M335.0 518.4L331.8 503.7M327.4 509.7L335.0 518.4" stroke="#3a0"/><path d="M331.8 503.7L328.6 489.2M328.6 489.2L325.4 475.1" stroke="#3b0"/><path d="M325.4 475.1L322.4 461.2M322.4 461.2L319.4 447.6" stroke="#3c0"/><path d="M319.4 447.6L316.4 434.2" stroke="#3d0"/><path d="M316.4 434.2L313.5 421.1M313.5 421.1L310.6 408.1" stroke="#4e0"/><path d="M310.6 408.1L307.8 395.3" stroke="#4f0"/><path d="M307.8 395.3L306.1 393.0" stroke="#4f1"/><path d="M306.1 393.0L306.0 389.6" stroke="#5f2"/><path d="M306.0 389.6L307.4 385.2M292.1 374.1L306.0 389.6" stroke="#6f3"/><path d="M307.4 385.2L310.3 379.7M310.3 379.7L320.6 391.1" stroke="#6f4"/><path d="M310.3 379.7L314.1 373.2" stroke="#7f5"/><path d="M314.1 373.2L318.7 366.0M318.7 366.0L330.6 379.2" stroke="#7f6"/><path d="M318.7 366.0L323.8 358.1" stroke="#8f6"/><path d="M323.8 358.1L329.0 349.5M309.5 341.9L323.8 358.1" stroke="#9f7"/><path d="M329.0 349.5L334.3 340.5M334.3 340.5L346.1 353.7" stroke="#9f8"/><path d="M334.3 340.5L339.6 330.9M339.6 330.9L344.7 321.0" stroke="#af9"/><path d="M344.7 321.0L349.7 310.7M333.6 308.2L344.7 321.0M339.7 299.1L349.7 310.7M349.7 310.7L359.4 321.8" stroke="#bfa"/><path d="M349.7 310.7L354.6 300.2M359.4 321.8L363.2 310.1M363.2 310.1L366.8 298.1M373.9 317.1L375.9 305.9M354.6 300.2L363.2 310.1M363.2 310.1L375.9 305.9" stroke="#bfb"/><path d="M359.3 289.4L363.7 278.3M366.8 298.1L370.1 285.8M370.1 285.8L373.2 273.2M377.6 294.5L379.1 282.7M363.7 278.3L370.1 285.8M370.1 285.8L379.1 282.7" stroke="#cfc"/><path d="M368.1 267.1L372.2 255.7M373.2 273.2L376.1 260.3M380.3 270.7L381.4 258.4M362.8 260.9L368.1 267.1M368.1 267.1L373.2 273.2M373.2 273.2L380.3 270.7M380.3 270.7L387.3 268.1M372.2 255.7L376.1 260.3M376.1 260.3L381.4 258.4" stroke="#dfd"/><path d="M384.4 669.2L382.0 662.7M384.4 669.1L384.4 669.2M384.4 669.2L384.5 669.2" stroke="#020"/><path d="M382.0 662.7L377.3 650.7M381.8 662.4L382.0 662.7M382.0 662.7L382.2 662.6" stroke="#030"/><path d="M377.3 650.7L370.9 635.3" stroke="#040"/><path d="M370.9 635.3L363.1 617.9" stroke="#050"/><path d="M363.1 617.9L356.2 600.4M356.2 600.4L350.9 583.6" stroke="#060"/><path d="M350.9 583.6L347.2 567.3" stroke="#070"/><path d="M347.2 567.3L343.8 551.4" stroke="#080"/><path d="M343.8 551.4L340.5 536.0M340.5 536.0L337.4 521.0" stroke="#090"/><path d="M337.4 521.0L334.3 506.4" stroke="#0a0"/><path d="M334.3 506.4L331.2 492.1M331.2 492.1L328.3 478.1" stroke="#0b0"/><path d="M328.3 478.1L325.4 464.4M325.4 464.4L322.5 450.9" stroke="#0c0"/><path d="M322.5 450.9L319.7 437.6" stroke="#0d0"/><path d="M319.7 437.6L316.9 424.5M316.9 424.5L314.2 411.6" stroke="#0e0"/><path d="M314.2 411.6L311.6 398.9" stroke="#0f0"/><path d="M311.6 398.9L311.9 398.9" stroke="#1f1"/><path d="M311.9 398.9L313.5 397.7" stroke="#2f2"/><path d="M313.5 397.7L316.5 395.1" stroke="#3f3"/><path d="M316.5 395.1L320.6 391.1" stroke="#4f4"/><path d="M320.6 391.1L325.4 385.7" stroke="#5f5"/><path d="M325.4 385.7L330.6 379.2M330.6 379.2L335.9 371.6" stroke="#6f6"/><path d="M335.9 371.6L341.1 363.1" stroke="#7f7"/><path d="M341.1 363.1L346.1 353.7M329.0 349.5L341.1 363.1M341.1 363.1L362.6 356.9" stroke="#8f8"/><path d="M346.1 353.7L350.8 343.6M350.8 343.6L355.2 333.0M339.6 330.9L350.8 343.6M350.8 343.6L369.1 338.1" stroke="#9f9"/><path d="M355.2 333.0L359.4 321.8M344.7 321.0L355.2 333.0M355.2 333.0L371.7 327.8" stroke="#afa"/><path d="M384.5 669.2L382.2 662.6M384.7 669.1L383.2 662.2M385.1 669.0L385.0 661.6M384.5 669.2L384.7 669.1M384.7 669.1L385.1 669.0M385.1 669.0L385.7 668.7M385.7 668.7L386.4 668.5M386.4 668.5L387.5 668.1" stroke="#021"/><path d="M382.2 662.6L378.0 650.5M383.2 662.2L380.3 649.6M382.2 662.6L383.2 662.2M383.2 662.2L385.0 661.6" stroke="#031"/><path d="M378.0 650.5L372.1 634.9M377.3 650.7L378.0 650.5M378.0 650.5L380.3 649.6M370.9 635.3L372.1 634.9" stroke="#041"/><path d="M372.1 634.9L365.2 617.3M363.1 617.9L365.2 617.3" stroke="#051"/><path d="M365.2 617.3L359.4 599.7M356.2 600.4L359.4 599.7" stroke="#061"/><path d="M359.4 599.7L355.5 582.7M372.6 615.0L370.5 596.8M359.4 599.7L370.5 596.8" stroke="#062"/><path d="M355.5 582.7L352.5 566.2M355.5 582.7L368.8 579.3" stroke="#072"/><path d="M352.5 566.2L349.6 550.3" stroke="#082"/><path d="M349.6 550.3L346.8 534.9M346.8 534.9L344.0 519.8" stroke="#092"/><path d="M344.0 519.8L341.3 505.2M344.0 519.8L362.5 515.4" stroke="#0a3"/><path d="M341.3 505.2L338.7 490.9M338.7 490.9L336.1 476.8" stroke="#0b3"/><path d="M336.1 476.8L333.6 463.1M333.6 463.1L331.1 449.6" stroke="#0c3"/><path d="M331.1 449.6L328.7 436.3" stroke="#0d3"/><path d="M328.7 436.3L326.3 423.3M326.3 423.3L323.9 410.4" stroke="#0e4"/><path d="M323.9 410.4L321.5 397.7" stroke="#0f4"/><path d="M321.5 397.7L327.1 396.3" stroke="#1f4"/><path d="M327.1 396.3L332.9 393.9" stroke="#2f5"/><path d="M332.9 393.9L338.7 390.3M332.9 393.9L362.2 386.4" stroke="#3f6"/><path d="M338.7 390.3L344.4 385.5M320.6 391.1L344.4 385.5" stroke="#4f6"/><path d="M344.4 385.5L349.6 379.8" stroke="#5f7"/><path d="M349.6 379.8L354.4 373.0M330.6 379.2L354.4 373.0" stroke="#6f7"/><path d="M354.4 373.0L358.8 365.4" stroke="#6f8"/><path d="M358.8 365.4L362.6 356.9M358.8 365.4L382.2 358.0" stroke="#7f9"/><path d="M362.6 356.9L366.1 347.8M346.1 353.7L366.1 347.8" stroke="#8f9"/><path d="M366.1 347.8L369.1 338.1M369.1 338.1L371.7 327.8" stroke="#9fa"/><path d="M371.7 327.8L373.9 317.1M371.7 327.8L387.8 322.2M359.4 321.8L373.9 317.1M373.9 317.1L388.2 312.1" stroke="#afb"/><path d="M375.9 305.9L377.6 294.5M388.2 312.1L388.3 301.5M388.3 301.5L388.2 290.7M375.9 305.9L388.3 301.5M366.8 298.1L377.6 294.5M377.6 294.5L388.2 290.7" stroke="#bfc"/><path d="M379.1 282.7L380.3 270.7M388.2 290.7L387.9 279.5M387.9 279.5L387.3 268.1M398.7 286.7L396.5 276.2M379.1 282.7L387.9 279.5M387.9 279.5L396.5 276.2" stroke="#cfd"/><path d="M380.3 649.6L376.6 633.4M384.7 648.1L384.9 630.6M380.3 649.6L384.7 648.1M384.7 648.1L391.3 645.8M372.1 634.9L376.6 633.4M376.6 633.4L384.9 630.6" stroke="#042"/><path d="M376.6 633.4L372.6 615.0M365.2 617.3L372.6 615.0" stroke="#052"/><path d="M370.5 596.8L368.8 579.3M385.1 611.0L385.1 592.2M370.5 596.8L385.1 592.2" stroke="#063"/><path d="M368.8 579.3L367.2 562.6" stroke="#073"/><path d="M367.2 562.6L365.6 546.4M352.5 566.2L367.2 562.6M349.6 550.3L365.6 546.4" stroke="#083"/><path d="M365.6 546.4L364.0 530.7M364.0 530.7L362.5 515.4" stroke="#094"/><path d="M362.5 515.4L361.0 500.5M341.3 505.2L361.0 500.5" stroke="#0a4"/><path d="M361.0 500.5L359.5 485.9M359.5 485.9L358.1 471.7" stroke="#0b5"/><path d="M358.1 471.7L356.7 457.7M356.7 457.7L355.2 444.0" stroke="#0c5"/><path d="M355.2 444.0L353.9 430.5" stroke="#0d6"/><path d="M353.9 430.5L352.5 417.3M352.5 417.3L351.1 404.3" stroke="#0e6"/><path d="M351.1 404.3L349.8 391.5" stroke="#0f6"/><path d="M349.8 391.5L356.2 389.4" stroke="#1f7"/><path d="M356.2 389.4L362.2 386.4" stroke="#2f7"/><path d="M362.2 386.4L367.5 382.5" stroke="#3f8"/><path d="M367.5 382.5L372.2 377.7M344.4 385.5L372.2 377.7" stroke="#4f8"/><path d="M372.2 377.7L376.2 372.0" stroke="#5f9"/><path d="M376.2 372.0L379.5 365.4M354.4 373.0L379.5 365.4" stroke="#6f9"/><path d="M379.5 365.4L382.2 358.0M379.5 365.4L404.2 356.5" stroke="#6fa"/><path d="M382.2 358.0L384.3 349.9M382.2 358.0L405.1 349.7" stroke="#7fa"/><path d="M384.3 349.9L385.9 341.2M362.6 356.9L384.3 349.9M366.1 347.8L385.9 341.2" stroke="#8fa"/><path d="M385.9 341.2L387.0 332.0M387.0 332.0L387.8 322.2M369.1 338.1L387.0 332.0" stroke="#9fb"/><path d="M387.8 322.2L388.2 312.1M387.8 322.2L403.6 316.3M388.2 312.1L402.2 306.8" stroke="#afc"/><path d="M387.3 268.1L386.6 256.5M394.3 265.5L391.8 254.6M401.1 262.9L397.0 252.6M387.3 268.1L394.3 265.5M394.3 265.5L401.1 262.9M401.1 262.9L407.9 260.1M381.4 258.4L386.6 256.5M386.6 256.5L391.8 254.6M391.8 254.6L397.0 252.6" stroke="#dfe"/><path d="M385.0 671.0L385.1 669.0M385.0 671.0L385.7 668.7M385.0 671.0L386.4 668.5M385.0 671.0L387.5 668.1M385.0 671.0L387.7 668.7M385.0 671.0L387.8 669.2M385.0 671.0L387.9 669.5" stroke="#011"/><path d="M385.0 661.6L384.7 648.1M387.7 660.6L391.3 645.8M385.0 661.6L387.7 660.6M387.7 660.6L391.3 659.4M391.3 659.4L395.9 657.7" stroke="#032"/><path d="M384.9 630.6L385.1 611.0M372.6 615.0L385.1 611.0" stroke="#053"/><path d="M385.1 592.2L385.1 574.3M397.8 606.0L399.6 586.5M385.1 592.2L399.6 586.5" stroke="#064"/><path d="M385.1 574.3L385.1 557.0M368.8 579.3L385.1 574.3" stroke="#074"/><path d="M385.1 557.0L385.1 540.3M385.1 557.0L403.0 550.0" stroke="#085"/><path d="M385.1 540.3L385.1 524.2M364.0 530.7L385.1 524.2" stroke="#095"/><path d="M385.1 524.2L385.1 508.5M404.6 532.8L406.1 516.0M385.1 524.2L406.1 516.0" stroke="#096"/><path d="M385.1 508.5L385.1 493.1M385.1 508.5L407.6 499.8" stroke="#0a6"/><path d="M385.1 493.1L385.0 478.2M359.5 485.9L385.0 478.2M358.1 471.7L385.0 463.6" stroke="#0b6"/><path d="M385.0 478.2L385.0 463.6M385.0 478.2L410.4 468.5" stroke="#0b7"/><path d="M385.0 463.6L384.9 449.3M384.9 449.3L384.9 435.2" stroke="#0c7"/><path d="M384.9 435.2L384.8 421.4M384.9 435.2L414.3 424.1" stroke="#0d8"/><path d="M384.8 421.4L384.7 407.9M384.7 407.9L384.6 394.5" stroke="#0e8"/><path d="M384.6 394.5L384.5 381.4" stroke="#0f9"/><path d="M384.5 381.4L389.5 379.3" stroke="#1f9"/><path d="M389.5 379.3L393.9 376.4" stroke="#2f9"/><path d="M393.9 376.4L397.5 372.6" stroke="#3fa"/><path d="M397.5 372.6L400.4 368.1" stroke="#4fa"/><path d="M400.4 368.1L402.6 362.7M376.2 372.0L402.6 362.7" stroke="#5fa"/><path d="M402.6 362.7L404.2 356.5M404.2 356.5L405.1 349.7" stroke="#6fb"/><path d="M405.1 349.7L405.4 342.2" stroke="#7fb"/><path d="M405.4 342.2L405.2 334.1M405.4 342.2L425.7 333.7M405.2 334.1L423.8 326.3" stroke="#8fc"/><path d="M405.2 334.1L404.6 325.4M404.6 325.4L403.6 316.3M387.0 332.0L404.6 325.4" stroke="#9fc"/><path d="M403.6 316.3L402.2 306.8M418.9 310.1L415.8 301.3M403.6 316.3L418.9 310.1M402.2 306.8L415.8 301.3" stroke="#afd"/><path d="M402.2 306.8L400.6 296.9M400.6 296.9L398.7 286.7M388.3 301.5L400.6 296.9M400.6 296.9L412.5 292.2M388.2 290.7L398.7 286.7" stroke="#bfd"/><path d="M396.5 276.2L394.3 265.5M408.9 282.7L405.1 272.9M405.1 272.9L401.1 262.9M418.9 278.5L413.5 269.5M396.5 276.2L405.1 272.9M405.1 272.9L413.5 269.5" stroke="#cfe"/><path d="M389.2 243.4L386.6 232.1M397.0 252.6L392.7 242.1M392.7 242.1L388.3 231.5M402.0 250.6L396.1 240.8M396.1 240.8L390.0 230.8M407.1 248.6L399.5 239.5M399.5 239.5L391.7 230.2M389.2 243.4L392.7 242.1M392.7 242.1L396.1 240.8M396.1 240.8L399.5 239.5M383.1 233.4L384.8 232.8M384.8 232.8L386.6 232.1M386.6 232.1L388.3 231.5M388.3 231.5L390.0 230.8M390.0 230.8L391.7 230.2" stroke="#eff"/><path d="M385.7 668.7L387.7 660.6M386.4 668.5L391.3 659.4M387.5 668.1L395.9 657.7M387.7 668.7L396.9 660.5M387.8 669.2L397.8 662.6" stroke="#022"/><path d="M391.3 645.8L395.8 626.6M391.3 645.8L399.9 642.7M399.9 642.7L408.3 639.1M384.9 630.6L395.8 626.6" stroke="#043"/><path d="M395.8 626.6L397.8 606.0M406.0 621.7L409.7 600.2M385.1 611.0L397.8 606.0M397.8 606.0L409.7 600.2" stroke="#054"/><path d="M399.6 586.5L401.4 567.9M409.7 600.2L413.2 579.9M399.6 586.5L413.2 579.9" stroke="#065"/><path d="M401.4 567.9L403.0 550.0M385.1 574.3L401.4 567.9" stroke="#075"/><path d="M403.0 550.0L404.6 532.8M403.0 550.0L419.8 541.9M385.1 540.3L404.6 532.8" stroke="#086"/><path d="M406.1 516.0L407.6 499.8M422.9 524.0L425.8 506.6M406.1 516.0L425.8 506.6" stroke="#097"/><path d="M407.6 499.8L409.0 483.9M385.1 493.1L409.0 483.9" stroke="#0a7"/><path d="M409.0 483.9L410.4 468.5M410.4 468.5L411.8 453.4M385.0 463.6L411.8 453.4" stroke="#0b8"/><path d="M411.8 453.4L413.1 438.6M413.1 438.6L414.3 424.1" stroke="#0c9"/><path d="M414.3 424.1L415.6 409.8M414.3 424.1L441.9 411.1" stroke="#0da"/><path d="M415.6 409.8L416.8 395.9M416.8 395.9L417.9 382.1M384.6 394.5L417.9 382.1" stroke="#0ea"/><path d="M417.9 382.1L419.1 368.6" stroke="#0fb"/><path d="M419.1 368.6L422.2 366.7" stroke="#1fb"/><path d="M422.2 366.7L424.6 364.2" stroke="#2fb"/><path d="M424.6 364.2L426.5 360.9M424.6 364.2L453.5 350.4" stroke="#3fc"/><path d="M426.5 360.9L427.6 356.9" stroke="#4fc"/><path d="M427.6 356.9L428.0 352.2" stroke="#5fc"/><path d="M428.0 352.2L427.9 346.7M427.9 346.7L427.1 340.5M404.2 356.5L427.9 346.7" stroke="#6fc"/><path d="M427.1 340.5L425.7 333.7M427.1 340.5L448.0 330.6" stroke="#7fd"/><path d="M425.7 333.7L423.8 326.3M425.7 333.7L445.1 324.7M423.8 326.3L441.8 318.1" stroke="#8fd"/><path d="M423.8 326.3L421.5 318.5M421.5 318.5L418.9 310.1M404.6 325.4L421.5 318.5" stroke="#9fd"/><path d="M415.8 301.3L412.5 292.2M412.5 292.2L408.9 282.7M429.1 295.6L424.1 287.2M424.1 287.2L418.9 278.5M412.5 292.2L424.1 287.2M398.7 286.7L408.9 282.7M408.9 282.7L418.9 278.5" stroke="#bfe"/><path d="M391.3 659.4L399.9 642.7M395.9 657.7L408.3 639.1M396.9 660.5L411.2 645.6" stroke="#033"/><path d="M399.9 642.7L406.0 621.7M408.3 639.1L415.3 616.3M411.2 645.6L420.5 625.9M395.8 626.6L406.0 621.7M406.0 621.7L415.3 616.3M415.3 616.3L420.5 625.9M420.5 625.9L425.0 634.8" stroke="#044"/><path d="M413.2 579.9L416.6 560.6M420.7 593.9L425.8 572.7M425.8 572.7L430.6 552.4M432.7 585.6L438.4 566.9M413.2 579.9L425.8 572.7M425.8 572.7L432.7 585.6" stroke="#066"/><path d="M416.6 560.6L419.8 541.9M401.4 567.9L416.6 560.6M416.6 560.6L430.6 552.4" stroke="#076"/><path d="M419.8 541.9L422.9 524.0M419.8 541.9L435.2 533.0M404.6 532.8L422.9 524.0" stroke="#087"/><path d="M425.8 506.6L428.7 489.7M425.8 506.6L444.0 496.2" stroke="#098"/><path d="M428.7 489.7L431.5 473.2M428.7 489.7L448.2 478.5" stroke="#0a9"/><path d="M431.5 473.2L434.2 457.2M410.4 468.5L434.2 457.2M411.8 453.4L436.9 441.5" stroke="#0b9"/><path d="M434.2 457.2L436.9 441.5M434.2 457.2L456.2 444.7" stroke="#0ba"/><path d="M436.9 441.5L439.4 426.2M413.1 438.6L439.4 426.2" stroke="#0ca"/><path d="M439.4 426.2L441.9 411.1M439.4 426.2L463.7 412.4" stroke="#0cb"/><path d="M441.9 411.1L444.4 396.4M415.6 409.8L444.4 396.4" stroke="#0db"/><path d="M444.4 396.4L446.8 381.9M446.8 381.9L449.1 367.7M417.9 382.1L449.1 367.7" stroke="#0ec"/><path d="M449.1 367.7L451.4 353.7" stroke="#0fd"/><path d="M451.4 353.7L452.7 352.3" stroke="#1fd"/><path d="M452.7 352.3L453.5 350.4" stroke="#2fd"/><path d="M453.5 350.4L453.7 347.9" stroke="#3fd"/><path d="M453.7 347.9L453.2 344.6M426.5 360.9L453.7 347.9M427.6 356.9L453.2 344.6" stroke="#4fd"/><path d="M453.2 344.6L452.1 340.6M452.1 340.6L474.7 328.1" stroke="#5fe"/><path d="M452.1 340.6L450.3 335.9M450.3 335.9L448.0 330.6M450.3 335.9L471.6 324.4" stroke="#6fe"/><path d="M448.0 330.6L445.1 324.7M448.0 330.6L467.9 320.0" stroke="#7fe"/><path d="M445.1 324.7L441.8 318.1M445.1 324.7L463.7 315.1M441.8 318.1L458.9 309.5" stroke="#8fe"/><path d="M441.8 318.1L437.9 311.1M437.9 311.1L433.7 303.5M421.5 318.5L437.9 311.1" stroke="#9fe"/><path d="M433.7 303.5L429.1 295.6M418.9 310.1L433.7 303.5M415.8 301.3L429.1 295.6" stroke="#afe"/><path d="M413.5 269.5L407.9 260.1M428.8 274.2L421.8 265.9M421.8 265.9L414.5 257.4M413.5 269.5L421.8 265.9" stroke="#cff"/><path d="M407.9 260.1L402.0 250.6M414.5 257.4L407.1 248.6M407.9 260.1L414.5 257.4M397.0 252.6L402.0 250.6M402.0 250.6L407.1 248.6" stroke="#dff"/><path d="M415.3 616.3L420.7 593.9M409.7 600.2L420.7 593.9M420.7 593.9L426.8 605.2" stroke="#055"/><path d="M430.6 552.4L435.2 533.0" stroke="#077"/><path d="M435.2 533.0L439.7 514.3M422.9 524.0L439.7 514.3M439.7 514.3L449.1 531.6" stroke="#088"/><path d="M439.7 514.3L444.0 496.2M444.0 496.2L448.2 478.5" stroke="#099"/><path d="M448.2 478.5L452.2 461.4M431.5 473.2L452.2 461.4M452.2 461.4L463.8 482.6" stroke="#0aa"/><path d="M452.2 461.4L456.2 444.7M456.2 444.7L460.0 428.4M436.9 441.5L460.0 428.4M460.0 428.4L473.0 452.0" stroke="#0bb"/><path d="M460.0 428.4L463.7 412.4M463.7 412.4L467.4 396.7" stroke="#0cc"/><path d="M467.4 396.7L471.0 381.4" stroke="#0dd"/><path d="M471.0 381.4L474.4 366.4M474.4 366.4L477.9 351.6M449.1 367.7L477.9 351.6M477.9 351.6L494.3 380.8" stroke="#0ee"/><path d="M477.9 351.6L481.2 337.0" stroke="#0ff"/><path d="M481.2 337.0L481.0 336.5" stroke="#1ff"/><path d="M481.0 336.5L480.3 335.3" stroke="#2ff"/><path d="M480.3 335.3L479.1 333.6" stroke="#3ff"/><path d="M479.1 333.6L477.2 331.2" stroke="#4ff"/><path d="M477.2 331.2L474.7 328.1" stroke="#5ff"/><path d="M474.7 328.1L471.6 324.4M471.6 324.4L467.9 320.0" stroke="#6ff"/><path d="M467.9 320.0L463.7 315.1" stroke="#7ff"/><path d="M463.7 315.1L458.9 309.5" stroke="#8ff"/><path d="M458.9 309.5L453.7 303.3M453.7 303.3L448.0 296.7M437.9 311.1L453.7 303.3" stroke="#9ff"/><path d="M448.0 296.7L441.9 289.6M433.7 303.5L448.0 296.7M429.1 295.6L441.9 289.6" stroke="#aff"/><path d="M441.9 289.6L435.5 282.1M435.5 282.1L428.8 274.2M424.1 287.2L435.5 282.1M418.9 278.5L428.8 274.2" stroke="#bff"/><path d="M420.5 625.9L426.8 605.2M425.0 634.8L432.5 616.0M426.8 605.2L432.5 616.0M432.5 616.0L437.6 626.0" stroke="#045"/><path d="M426.8 605.2L432.7 585.6M439.3 598.0L445.7 580.7M432.7 585.6L439.3 598.0" stroke="#056"/><path d="M438.4 566.9L443.8 548.9M430.6 552.4L438.4 566.9M438.4 566.9L445.7 580.7" stroke="#067"/><path d="M443.8 548.9L449.1 531.6M435.2 533.0L443.8 548.9M449.1 531.6L457.9 548.1" stroke="#078"/><path d="M449.1 531.6L454.1 514.8M463.7 532.6L469.3 517.6M454.1 514.8L463.7 532.6" stroke="#079"/><path d="M454.1 514.8L459.0 498.5M444.0 496.2L454.1 514.8" stroke="#089"/><path d="M459.0 498.5L463.8 482.6M448.2 478.5L459.0 498.5" stroke="#09a"/><path d="M463.8 482.6L468.5 467.1M468.5 467.1L480.1 488.6M473.0 452.0L485.3 474.6" stroke="#09b"/><path d="M468.5 467.1L473.0 452.0M456.2 444.7L468.5 467.1" stroke="#0ab"/><path d="M473.0 452.0L477.5 437.2M477.5 437.2L490.4 460.9" stroke="#0ac"/><path d="M477.5 437.2L481.8 422.7M463.7 412.4L477.5 437.2" stroke="#0bc"/><path d="M481.8 422.7L486.1 408.5M486.1 408.5L500.3 434.4" stroke="#0bd"/><path d="M486.1 408.5L490.2 394.5M490.2 394.5L494.3 380.8M494.3 380.8L509.9 408.7" stroke="#0ce"/><path d="M494.3 380.8L498.3 367.3" stroke="#0df"/><path d="M397.8 662.6L413.4 650.9M398.3 664.2L415.1 654.7M395.9 657.7L396.9 660.5M396.9 660.5L397.8 662.6M397.8 662.6L398.3 664.2" stroke="#023"/><path d="M413.4 650.9L425.0 634.8M408.3 639.1L411.2 645.6M411.2 645.6L413.4 650.9M425.0 634.8L428.4 642.0" stroke="#034"/><path d="M432.5 616.0L439.3 598.0M445.1 609.3L452.3 593.4M439.3 598.0L445.1 609.3" stroke="#046"/><path d="M445.7 580.7L451.9 564.1M445.7 580.7L452.3 593.4" stroke="#057"/><path d="M451.9 564.1L457.9 548.1M443.8 548.9L451.9 564.1M457.9 548.1L465.8 563.3" stroke="#068"/><path d="M457.9 548.1L463.7 532.6M472.2 549.0L478.5 535.1M463.7 532.6L472.2 549.0" stroke="#069"/><path d="M469.3 517.6L474.8 502.9M474.8 502.9L484.6 521.6" stroke="#07a"/><path d="M474.8 502.9L480.1 488.6M480.1 488.6L485.3 474.6M485.3 474.6L496.3 495.4" stroke="#08b"/><path d="M485.3 474.6L490.4 460.9M490.4 460.9L495.4 447.5" stroke="#09c"/><path d="M495.4 447.5L500.3 434.4M481.8 422.7L495.4 447.5" stroke="#0ad"/><path d="M500.3 434.4L505.1 421.4M505.1 421.4L509.9 408.7M509.9 408.7L523.7 434.3" stroke="#0ae"/><path d="M509.9 408.7L514.5 396.2" stroke="#0bf"/><path d="M387.9 669.5L398.3 664.2M388.0 669.8L398.7 665.3M388.0 669.9L398.9 665.8M387.5 668.1L387.7 668.7M387.7 668.7L387.8 669.2M387.8 669.2L387.9 669.5M387.9 669.5L388.0 669.8M388.0 669.8L388.0 669.9" stroke="#012"/><path d="M415.1 654.7L428.4 642.0M416.2 657.3L430.7 646.8M413.4 650.9L415.1 654.7M415.1 654.7L416.2 657.3M428.4 642.0L430.7 646.8M430.7 646.8L431.9 649.4" stroke="#024"/><path d="M428.4 642.0L437.6 626.0M437.6 626.0L441.5 633.8" stroke="#035"/><path d="M437.6 626.0L445.1 609.3M449.7 618.9L457.5 604.1M445.1 609.3L449.7 618.9" stroke="#036"/><path d="M452.3 593.4L459.1 578.1M452.3 593.4L457.5 604.1" stroke="#047"/><path d="M459.1 578.1L465.8 563.3M451.9 564.1L459.1 578.1" stroke="#058"/><path d="M465.8 563.3L472.2 549.0M472.2 549.0L479.0 562.9" stroke="#059"/><path d="M478.5 535.1L484.6 521.6M469.3 517.6L478.5 535.1" stroke="#06a"/><path d="M484.6 521.6L490.5 508.3M490.5 508.3L498.8 525.0M496.3 495.4L505.1 512.9" stroke="#06b"/><path d="M490.5 508.3L496.3 495.4M480.1 488.6L490.5 508.3" stroke="#07b"/><path d="M496.3 495.4L502.0 482.7M502.0 482.7L507.6 470.3" stroke="#07c"/><path d="M507.6 470.3L513.1 458.1M495.4 447.5L507.6 470.3" stroke="#08d"/><path d="M513.1 458.1L518.4 446.1M518.4 446.1L523.7 434.3" stroke="#08e"/><path d="M523.7 434.3L528.9 422.7" stroke="#09f"/><path d="M385.0 671.0L388.0 669.8M385.0 671.0L388.0 669.9M385.0 671.0L388.0 669.9" stroke="#001"/><path d="M398.7 665.3L416.2 657.3M398.9 665.8L416.7 658.7M398.3 664.2L398.7 665.3M398.7 665.3L398.9 665.8" stroke="#013"/><path d="M430.7 646.8L441.5 633.8M441.5 633.8L443.6 638.0" stroke="#025"/><path d="M441.5 633.8L449.7 618.9M452.5 624.8L460.7 611.4M449.7 618.9L452.5 624.8" stroke="#026"/><path d="M457.5 604.1L464.9 589.9" stroke="#037"/><path d="M464.9 589.9L472.1 576.2M464.9 589.9L468.5 598.0M472.1 576.2L476.0 585.0" stroke="#038"/><path d="M472.1 576.2L479.0 562.9M479.0 562.9L485.8 549.9" stroke="#049"/><path d="M485.8 549.9L492.4 537.3M492.4 537.3L497.3 548.0" stroke="#04a"/><path d="M492.4 537.3L498.8 525.0M498.8 525.0L505.1 512.9" stroke="#05b"/><path d="M505.1 512.9L511.3 501.1M511.3 501.1L517.3 489.5" stroke="#05c"/><path d="M517.3 489.5L523.3 478.1" stroke="#06d"/><path d="M523.3 478.1L529.1 466.9M529.1 466.9L534.8 455.9" stroke="#06e"/><path d="M534.8 455.9L540.5 445.0" stroke="#06f"/><path d="M416.7 658.7L431.9 649.4M416.2 657.3L416.7 658.7M416.7 658.7L416.8 659.0M431.9 649.4L432.1 650.1" stroke="#014"/><path d="M431.9 649.4L443.6 638.0M443.6 638.0L444.1 639.1" stroke="#015"/><path d="M443.6 638.0L452.5 624.8M452.5 624.8L453.2 626.4" stroke="#016"/><path d="M460.7 611.4L468.5 598.0M457.5 604.1L460.7 611.4" stroke="#027"/><path d="M468.5 598.0L476.0 585.0" stroke="#028"/><path d="M476.0 585.0L483.3 572.3M483.3 572.3L490.4 560.0" stroke="#029"/><path d="M490.4 560.0L497.3 548.0M485.8 549.9L490.4 560.0" stroke="#03a"/><path d="M497.3 548.0L504.1 536.3M504.1 536.3L510.7 524.8" stroke="#03b"/><path d="M510.7 524.8L517.2 513.5M517.2 513.5L523.5 502.5" stroke="#03c"/><path d="M523.5 502.5L529.8 491.6" stroke="#03d"/><path d="M529.8 491.6L535.9 480.9M535.9 480.9L542.0 470.4" stroke="#04e"/><path d="M542.0 470.4L547.9 460.0" stroke="#04f"/><path d="M388.0 669.9L398.9 666.0M388.0 669.9L388.0 669.9" stroke="#002"/><path d="M398.9 666.0L416.8 659.0M398.9 665.8L398.9 666.0" stroke="#003"/><path d="M416.8 659.0L432.1 650.1" stroke="#004"/><path d="M432.1 650.1L444.1 639.1" stroke="#005"/><path d="M444.1 639.1L453.2 626.4M453.2 626.4L461.6 613.5" stroke="#006"/><path d="M461.6 613.5L469.5 600.5" stroke="#007"/><path d="M469.5 600.5L477.1 587.7" stroke="#008"/><path d="M477.1 587.7L484.5 575.2M484.5 575.2L491.7 563.1" stroke="#009"/><path d="M491.7 563.1L498.7 551.2" stroke="#00a"/><path d="M498.7 551.2L505.6 539.6M505.6 539.6L512.3 528.3" stroke="#00b"/><path d="M512.3 528.3L518.9 517.1M518.9 517.1L525.4 506.2" stroke="#00c"/><path d="M525.4 506.2L531.7 495.4" stroke="#00d"/><path d="M531.7 495.4L538.0 484.8M538.0 484.8L544.2 474.4" stroke="#00e"/><path d="M544.2 474.4L550.2 464.1" stroke="#00f"/><path d="M297.5 558.9L297.7 558.1" stroke="#710"/><path d="M349.3 581.7L350.9 583.6" stroke="#170"/><path d="M350.9 583.6L355.5 582.7" stroke="#071"/><path d="M460.7 611.4L461.6 613.5" stroke="#017"/><path d="M284.8 540.4L285.1 539.5M273.0 522.4L273.4 521.5" stroke="#810"/><path d="M285.6 535.9L286.5 529.7M274.4 517.5L276.1 510.7" stroke="#840"/><path d="M329.8 547.0L339.3 558.2M324.9 529.3L335.2 541.5" stroke="#480"/><path d="M345.4 565.1L347.2 567.3M341.8 549.1L343.8 551.4" stroke="#180"/><path d="M347.2 567.3L352.5 566.2M343.8 551.4L349.6 550.3" stroke="#081"/><path d="M367.2 562.6L385.1 557.0M365.6 546.4L385.1 540.3" stroke="#084"/><path d="M459.1 578.1L464.9 589.9M465.8 563.3L472.1 576.2" stroke="#048"/><path d="M468.5 598.0L469.5 600.5M476.0 585.0L477.1 587.7" stroke="#018"/><path d="M262.0 504.9L262.6 503.9" stroke="#910"/><path d="M262.6 503.9L264.1 499.6" stroke="#930"/><path d="M331.3 525.4L338.4 533.6" stroke="#390"/><path d="M338.4 533.6L340.5 536.0" stroke="#190"/><path d="M340.5 536.0L346.8 534.9" stroke="#091"/><path d="M346.8 534.9L364.0 530.7" stroke="#093"/><path d="M479.0 562.9L483.3 572.3" stroke="#039"/><path d="M483.3 572.3L484.5 575.2" stroke="#019"/><path d="M251.8 487.8L252.6 486.7" stroke="#a10"/><path d="M254.7 482.1L258.3 474.1M246.0 465.0L249.9 456.4" stroke="#a50"/><path d="M262.1 463.3L265.5 450.4M253.9 445.0L257.5 431.3" stroke="#a80"/><path d="M284.6 457.6L300.6 477.8M278.0 438.9L295.1 460.4" stroke="#8a0"/><path d="M315.3 495.6L327.4 509.7M310.8 479.4L323.6 494.4" stroke="#5a0"/><path d="M335.0 518.4L337.4 521.0" stroke="#1a0"/><path d="M337.4 521.0L344.0 519.8" stroke="#0a1"/><path d="M362.5 515.4L385.1 508.5M361.0 500.5L385.1 493.1" stroke="#0a5"/><path d="M407.6 499.8L428.7 489.7M409.0 483.9L431.5 473.2" stroke="#0a8"/><path d="M459.0 498.5L469.3 517.6M463.8 482.6L474.8 502.9" stroke="#08a"/><path d="M478.5 535.1L485.8 549.9M484.6 521.6L492.4 537.3" stroke="#05a"/><path d="M490.4 560.0L491.7 563.1" stroke="#01a"/><path d="M242.3 471.1L243.3 469.9" stroke="#a20"/><path d="M331.8 503.7L334.3 506.4" stroke="#2a0"/><path d="M334.3 506.4L341.3 505.2" stroke="#0a2"/><path d="M497.3 548.0L498.7 551.2" stroke="#02a"/><path d="M233.5 454.6L234.6 453.4M225.1 438.5L226.2 437.2" stroke="#b20"/><path d="M234.6 453.4L237.6 448.2M226.2 437.2L229.4 431.8" stroke="#b40"/><path d="M319.9 479.4L328.6 489.2M316.3 464.8L325.4 475.1" stroke="#4b0"/><path d="M328.6 489.2L331.2 492.1M325.4 475.1L328.3 478.1" stroke="#2b0"/><path d="M331.2 492.1L338.7 490.9M328.3 478.1L336.1 476.8" stroke="#0b2"/><path d="M338.7 490.9L359.5 485.9M336.1 476.8L358.1 471.7" stroke="#0b4"/><path d="M498.8 525.0L504.1 536.3M505.1 512.9L510.7 524.8" stroke="#04b"/><path d="M504.1 536.3L505.6 539.6M510.7 524.8L512.3 528.3" stroke="#02b"/><path d="M216.8 422.6L218.0 421.4" stroke="#c20"/><path d="M218.0 421.4L221.3 415.7" stroke="#c40"/><path d="M221.3 415.7L225.8 405.8" stroke="#c60"/><path d="M225.8 405.8L230.5 392.4" stroke="#c80"/><path d="M279.0 410.6L297.5 432.9" stroke="#8c0"/><path d="M297.5 432.9L312.7 450.4" stroke="#6c0"/><path d="M312.7 450.4L322.4 461.2" stroke="#4c0"/><path d="M322.4 461.2L325.4 464.4" stroke="#2c0"/><path d="M325.4 464.4L333.6 463.1" stroke="#0c2"/><path d="M333.6 463.1L356.7 457.7" stroke="#0c4"/><path d="M356.7 457.7L384.9 449.3" stroke="#0c6"/><path d="M384.9 449.3L413.1 438.6" stroke="#0c8"/><path d="M490.4 460.9L502.0 482.7" stroke="#08c"/><path d="M502.0 482.7L511.3 501.1" stroke="#06c"/><path d="M511.3 501.1L517.2 513.5" stroke="#04c"/><path d="M517.2 513.5L518.9 517.1" stroke="#02c"/><path d="M208.6 407.1L209.9 405.8M200.6 391.8L201.9 390.5" stroke="#d20"/><path d="M209.9 405.8L213.3 399.9" stroke="#d40"/><path d="M213.3 399.9L218.0 389.5M205.5 384.3L210.4 373.6" stroke="#d70"/><path d="M227.4 358.8L230.9 340.0M220.2 341.5L223.8 321.9" stroke="#dc0"/><path d="M230.9 340.0L252.7 368.3M223.8 321.9L246.6 351.5" stroke="#cd0"/><path d="M293.3 418.0L309.2 436.3M289.1 403.3L305.7 422.4" stroke="#7d0"/><path d="M309.2 436.3L319.4 447.6" stroke="#4d0"/><path d="M319.4 447.6L322.5 450.9M316.4 434.2L319.7 437.6" stroke="#2d0"/><path d="M322.5 450.9L331.1 449.6M319.7 437.6L328.7 436.3" stroke="#0d2"/><path d="M331.1 449.6L355.2 444.0" stroke="#0d4"/><path d="M355.2 444.0L384.9 435.2M353.9 430.5L384.8 421.4" stroke="#0d7"/><path d="M441.9 411.1L467.4 396.7M444.4 396.4L471.0 381.4" stroke="#0dc"/><path d="M467.4 396.7L481.8 422.7M471.0 381.4L486.1 408.5" stroke="#0cd"/><path d="M507.6 470.3L517.3 489.5M513.1 458.1L523.3 478.1" stroke="#07d"/><path d="M517.3 489.5L523.5 502.5" stroke="#04d"/><path d="M523.5 502.5L525.4 506.2M529.8 491.6L531.7 495.4" stroke="#02d"/><path d="M201.9 390.5L205.5 384.3" stroke="#d50"/><path d="M210.4 373.6L215.6 359.0" stroke="#d90"/><path d="M268.7 379.0L289.1 403.3" stroke="#9d0"/><path d="M305.7 422.4L316.4 434.2" stroke="#5d0"/><path d="M328.7 436.3L353.9 430.5" stroke="#0d5"/><path d="M384.8 421.4L415.6 409.8" stroke="#0d9"/><path d="M500.3 434.4L513.1 458.1" stroke="#09d"/><path d="M523.3 478.1L529.8 491.6" stroke="#05d"/><path d="M192.7 376.7L194.1 375.4M185.0 361.8L186.3 360.5" stroke="#e20"/><path d="M194.1 375.4L197.8 369.0M186.3 360.5L190.2 354.0" stroke="#e50"/><path d="M197.8 369.0L202.9 357.9M190.2 354.0L195.5 342.4" stroke="#e70"/><path d="M202.9 357.9L208.3 342.7" stroke="#e90"/><path d="M208.3 342.7L213.0 324.6" stroke="#eb0"/><path d="M213.0 324.6L216.8 304.2" stroke="#ed0"/><path d="M216.8 304.2L240.6 334.9" stroke="#de0"/><path d="M240.6 334.9L263.7 363.6" stroke="#be0"/><path d="M263.7 363.6L284.9 388.9" stroke="#9e0"/><path d="M284.9 388.9L302.3 408.8M280.9 374.7L299.0 395.4" stroke="#7e0"/><path d="M302.3 408.8L313.5 421.1M299.0 395.4L310.6 408.1" stroke="#5e0"/><path d="M313.5 421.1L316.9 424.5M310.6 408.1L314.2 411.6" stroke="#2e0"/><path d="M316.9 424.5L326.3 423.3M314.2 411.6L323.9 410.4" stroke="#0e2"/><path d="M326.3 423.3L352.5 417.3M323.9 410.4L351.1 404.3" stroke="#0e5"/><path d="M352.5 417.3L384.7 407.9M351.1 404.3L384.6 394.5" stroke="#0e7"/><path d="M384.7 407.9L416.8 395.9" stroke="#0e9"/><path d="M416.8 395.9L446.8 381.9" stroke="#0eb"/><path d="M446.8 381.9L474.4 366.4" stroke="#0ed"/><path d="M474.4 366.4L490.2 394.5" stroke="#0de"/><path d="M490.2 394.5L505.1 421.4" stroke="#0be"/><path d="M505.1 421.4L518.4 446.1" stroke="#09e"/><path d="M518.4 446.1L529.1 466.9M523.7 434.3L534.8 455.9" stroke="#07e"/><path d="M529.1 466.9L535.9 480.9M534.8 455.9L542.0 470.4" stroke="#05e"/><path d="M535.9 480.9L538.0 484.8M542.0 470.4L544.2 474.4" stroke="#02e"/><path d="M177.3 347.2L178.7 345.9" stroke="#f20"/><path d="M178.7 345.9L182.7 339.2" stroke="#f50"/><path d="M182.7 339.2L188.2 327.2" stroke="#f80"/><path d="M188.2 327.2L193.9 311.0" stroke="#fa0"/><path d="M193.9 311.0L199.0 291.5" stroke="#fc0"/><path d="M199.0 291.5L203.1 269.6" stroke="#fe0"/><path d="M203.1 269.6L228.8 302.7" stroke="#ef0"/><path d="M228.8 302.7L253.8 333.6" stroke="#cf0"/><path d="M253.8 333.6L276.8 360.8" stroke="#af0"/><path d="M276.8 360.8L295.7 382.2" stroke="#8f0"/><path d="M295.7 382.2L307.8 395.3" stroke="#5f0"/><path d="M307.8 395.3L311.6 398.9" stroke="#2f0"/><path d="M311.6 398.9L321.5 397.7" stroke="#0f2"/><path d="M321.5 397.7L349.8 391.5" stroke="#0f5"/><path d="M349.8 391.5L384.5 381.4" stroke="#0f8"/><path d="M384.5 381.4L419.1 368.6" stroke="#0fa"/><path d="M419.1 368.6L451.4 353.7" stroke="#0fc"/><path d="M451.4 353.7L481.2 337.0" stroke="#0fe"/><path d="M481.2 337.0L498.3 367.3" stroke="#0ef"/><path d="M498.3 367.3L514.5 396.2" stroke="#0cf"/><path d="M514.5 396.2L528.9 422.7" stroke="#0af"/><path d="M528.9 422.7L540.5 445.0" stroke="#08f"/><path d="M540.5 445.0L547.9 460.0" stroke="#05f"/><path d="M547.9 460.0L550.2 464.1" stroke="#02f"/><path d="M203.6 269.3L228.1 300.9" stroke="#ef2"/><path d="M228.1 300.9L252.0 330.5" stroke="#cf2"/><path d="M252.0 330.5L274.2 357.0" stroke="#af2"/><path d="M274.2 357.0L293.0 378.5" stroke="#8f2"/><path d="M293.0 378.5L306.1 393.0" stroke="#6f2"/><path d="M306.1 393.0L311.9 398.9" stroke="#3f2"/><path d="M311.9 398.9L327.1 396.3" stroke="#2f3"/><path d="M327.1 396.3L356.2 389.4" stroke="#2f6"/><path d="M356.2 389.4L389.5 379.3" stroke="#2f8"/><path d="M389.5 379.3L422.2 366.7" stroke="#2fa"/><path d="M422.2 366.7L452.7 352.3" stroke="#2fc"/><path d="M452.7 352.3L481.0 336.5" stroke="#2fe"/><path d="M206.0 268.7L229.3 298.7" stroke="#ef3"/><path d="M252.1 327.0L273.5 352.6" stroke="#bf3"/><path d="M273.5 352.6L292.1 374.1" stroke="#9f3"/><path d="M306.0 389.6L313.5 397.7" stroke="#4f3"/><path d="M313.5 397.7L332.9 393.9" stroke="#3f4"/><path d="M362.2 386.4L393.9 376.4" stroke="#3f9"/><path d="M393.9 376.4L424.6 364.2" stroke="#3fb"/><path d="M453.5 350.4L480.3 335.3" stroke="#3fe"/><path d="M210.2 267.8L232.4 296.2M216.2 266.6L237.3 293.4" stroke="#ef4"/><path d="M254.1 323.1L274.7 347.7M258.0 318.8L277.7 342.3" stroke="#bf4"/><path d="M274.7 347.7L293.0 368.9M277.7 342.3L295.5 363.0" stroke="#9f4"/><path d="M293.0 368.9L307.4 385.2" stroke="#7f4"/><path d="M307.4 385.2L316.5 395.1" stroke="#5f4"/><path d="M316.5 395.1L338.7 390.3" stroke="#4f5"/><path d="M338.7 390.3L367.5 382.5" stroke="#4f7"/><path d="M367.5 382.5L397.5 372.6M372.2 377.7L400.4 368.1" stroke="#4f9"/><path d="M397.5 372.6L426.5 360.9M400.4 368.1L427.6 356.9" stroke="#4fb"/><path d="M453.7 347.9L479.1 333.6M453.2 344.6L477.2 331.2" stroke="#4fe"/><path d="M243.7 290.2L263.3 314.1" stroke="#df5"/><path d="M263.3 314.1L282.1 336.5" stroke="#bf5"/><path d="M299.3 356.5L314.1 373.2" stroke="#8f5"/><path d="M314.1 373.2L325.4 385.7" stroke="#6f5"/><path d="M325.4 385.7L349.6 379.8" stroke="#5f6"/><path d="M349.6 379.8L376.2 372.0" stroke="#5f8"/><path d="M402.6 362.7L428.0 352.2" stroke="#5fb"/><path d="M428.0 352.2L452.1 340.6" stroke="#5fd"/><path d="M251.2 286.7L269.7 309.1" stroke="#df6"/><path d="M427.9 346.7L450.3 335.9" stroke="#6fd"/><path d="M277.0 303.8L293.8 323.6" stroke="#cf7"/><path d="M323.8 358.1L335.9 371.6" stroke="#8f7"/><path d="M335.9 371.6L358.8 365.4" stroke="#7f8"/><path d="M405.1 349.7L427.1 340.5" stroke="#7fc"/><path d="M300.5 316.7L315.3 333.9M307.5 309.6L321.4 325.7" stroke="#bf8"/><path d="M384.3 349.9L405.4 342.2M385.9 341.2L405.2 334.1" stroke="#8fb"/></g><path d="M313.3 266.7L337.6 258.6M331.6 258.0L337.6 258.6L333.2 262.7M329.5 286.9L354.8 274.8M348.8 274.9L354.8 274.8L350.9 279.4M344.7 303.1L371.0 290.0M365.0 290.2L371.0 290.0L367.2 294.7M359.8 320.3L387.2 305.1M381.2 305.6L387.2 305.1L383.6 309.9M369.0 309.0L395.0 301.0M389.0 300.3L395.0 301.0L390.5 305.0M382.0 313.0L399.0 299.0M393.2 300.6L399.0 299.0L396.3 304.4M403.0 299.0L413.0 293.0M407.0 293.7L413.0 293.0L409.6 298.0M415.0 289.0L423.0 291.0M418.3 287.3L423.0 291.0L417.1 292.1M303.0 246.5L317.0 243.5M311.1 242.2L317.0 243.5L312.1 247.1" fill="none" stroke="#5c5490" stroke-width="1"/><path d="M203 279L330 276L420 265M250 341L380 336L462 322" stroke="#b8b8e0" stroke-width="1" opacity=".5" fill="none"/><path d="M423 271L439 291L456 314L473 337" stroke="#b8a0b8" stroke-width="7" opacity=".32" fill="none"/><path d="M420 268L438 291L455 315L472 338" stroke="#a07890" stroke-width="2.5" opacity=".4" fill="none" stroke-dasharray="3 2"/><path d="M167.2 289.5L169.0 286.8L172.0 285.6L198.6 277.6L203.0 271.5L203.0 276.3L210.7 290.5L218.8 308.7L231.0 331.0L243.1 353.2L255.3 375.5L264.4 392.7L266.6 411.9L267.2 432.2L263.4 440.3L257.3 441.6L251.2 439.8L237.0 436.2L220.9 422.1L208.7 403.8L196.6 383.6L184.4 363.4L177.3 345.1L171.3 320.9L168.2 302.6L167.2 289.5Z" fill="url(#yg1)"/><g clip-path="url(#ycl)"><g filter="url(#bl3)"><path d="M186 309L196.4 323L212.8 341.4L231 359.6L247.4 376L266 398L266 410L252 412L236 392L218 372L200 350L186 328Z" fill="#5c5800" opacity=".8"/></g></g><path d="M168.4 289.3L172.0 285.6L198.6 277.6L203.0 271.5L203.0 276.3L210.7 290.5L218.8 308.7L231.0 331.0L243.1 353.2L255.3 375.5L264.4 392.7L265.8 397.5L247.4 376.0L231.0 359.6L212.8 341.4L196.4 323.0L181.9 304.8Z" fill="url(#yg3)"/><path d="M250 439.5L263 440.5L267.2 431L266.6 400L262 412Z" fill="#b4ac00" opacity=".6"/><path d="M168.5 296L200 297.5L262 297M172 321L222 348L264 348M181 354L235 389L267 399M200 389L250 421L267 428" fill="none" stroke="#d8d8c8" stroke-width="1" opacity=".75"/><path d="M504.6 392.6L497.5 396.4L483.9 409.5L466.2 424.4L446.0 442.4L420.6 463.0L395.3 483.4L377.3 497.2L378.4 505.0L380.1 514.0L385.2 542.2L392.8 572.5L397.5 594.0L400.5 598.4L410.5 601.8L428.2 604.4L440.9 599.1L466.2 575.0L491.5 549.7L511.8 521.9L524.4 491.5L530.8 466.2L531.0 445.9L527.0 428.2L519.4 410.5L511.8 398.5Z" fill="url(#gg1)"/><path d="M504.6 392.6L497.5 396.4L483.9 409.5L466.2 424.4L446.0 442.4L420.6 463.0L395.3 483.4L377.3 497.2L378.4 505.0L380.1 514.0L385.2 542.2L392.8 572.5L397.5 594.0L400.5 598.4L410.5 601.8L428.2 604.4L440.9 599.1L466.2 575.0L491.5 549.7L511.8 521.9L524.4 491.5L530.8 466.2L531.0 445.9L527.0 428.2L519.4 410.5L511.8 398.5Z" fill="url(#gg2)"/><path d="M504.6 392.6L497.5 396.4L483.9 409.5L466.2 424.4L446.0 442.4L420.6 463.0L395.3 483.4L377.3 497.2L386.0 507.0L424.7 531.5L457.4 500.2L497.5 447.4L521.2 417.0L527.0 428.0L519.4 410.5L511.8 398.5Z" fill="url(#gg3)"/><g filter="url(#bl2)"><path d="M384.0 503.5L395.5 495.0L420.0 475.0L452.0 447.0L478.0 432.0L500.0 417.0L518.0 411.0L521.2 417.0L497.5 447.4L457.4 500.2L424.7 531.5Z" fill="url(#gg4)" opacity=".6"/></g><path d="M450 442L483 433L516 422M379 506L425 504L459 498L487 474L527 452M386 540L425 545L458 531L497 511L527 489M472 558L497 544L516 526" fill="none" stroke="#8494e8" stroke-width="1" opacity=".8"/><path d="M397 593L401 599L412 602L408 596Z" fill="#005060"/></svg><svg style="position:absolute;left:771.5px;top:70.6px" width="350.0" height="351.6" viewBox="0 0 350 350" preserveAspectRatio="none">
<defs>
<linearGradient id="ch" x1="0" y1="0" x2="1" y2="0">
<stop offset="0" stop-color="#f4001c"/><stop offset=".05" stop-color="#ff4a00"/><stop offset=".11" stop-color="#ffb000"/><stop offset=".168" stop-color="#fff000"/><stop offset=".215" stop-color="#a8c800"/><stop offset=".265" stop-color="#10a828"/><stop offset=".33" stop-color="#00a860"/><stop offset=".41" stop-color="#00b8b0"/><stop offset=".49" stop-color="#00b8f4"/><stop offset=".57" stop-color="#0080e8"/><stop offset=".655" stop-color="#0030b4"/><stop offset=".70" stop-color="#5020b0"/><stop offset=".76" stop-color="#b030c8"/><stop offset=".83" stop-color="#ff58d4"/><stop offset=".89" stop-color="#f01080"/><stop offset=".95" stop-color="#ec0040"/><stop offset="1" stop-color="#ee0024"/>
</linearGradient>
<linearGradient id="ch2" x1="0" y1="0" x2="1" y2="0">
<stop offset=".26" stop-color="#00a020"/><stop offset=".33" stop-color="#00b060"/><stop offset=".41" stop-color="#00c4b8"/><stop offset=".49" stop-color="#00c8ff"/><stop offset=".57" stop-color="#0090f0"/><stop offset=".66" stop-color="#0034c0"/><stop offset=".70" stop-color="#3020b0"/>
</linearGradient>
<linearGradient id="cw" x1="0" y1="0" x2="0" y2="1">
<stop offset="0" stop-color="#fff" stop-opacity="1"/><stop offset=".03" stop-color="#fff" stop-opacity=".97"/><stop offset=".13" stop-color="#fff" stop-opacity=".78"/><stop offset=".28" stop-color="#fff" stop-opacity=".45"/><stop offset=".40" stop-color="#fff" stop-opacity=".14"/><stop offset=".5" stop-color="#fff" stop-opacity="0"/>
</linearGradient>
<linearGradient id="ck" x1="0" y1="0" x2="0" y2="1">
<stop offset=".47" stop-color="#181410" stop-opacity="0"/><stop offset=".58" stop-color="#181410" stop-opacity=".22"/><stop offset=".7" stop-color="#181410" stop-opacity=".52"/><stop offset=".82" stop-color="#181410" stop-opacity=".8"/><stop offset=".92" stop-color="#181410" stop-opacity=".95"/><stop offset="1" stop-color="#181410" stop-opacity="1"/>
</linearGradient>
<linearGradient id="cfade" x1="0" y1="0" x2="0" y2="1"><stop offset=".33" stop-color="#fff" stop-opacity=".55"/><stop offset=".42" stop-color="#fff"/><stop offset=".55" stop-color="#fff" stop-opacity=".9"/><stop offset=".8" stop-color="#fff" stop-opacity="0.3"/><stop offset=".95" stop-color="#fff" stop-opacity="0"/></linearGradient>
<filter id="cb1" x="-30%" y="-30%" width="160%" height="160%"><feGaussianBlur stdDeviation="9"/></filter>
<filter id="cb2" x="-30%" y="-30%" width="160%" height="160%"><feGaussianBlur stdDeviation="5"/></filter>
<filter id="cb3" x="-30%" y="-30%" width="160%" height="160%"><feGaussianBlur stdDeviation="3.5"/></filter>
<mask id="cm" maskUnits="userSpaceOnUse" x="0" y="0" width="350" height="350"><g filter="url(#cb3)"><path d="M100 134Q98 120 114 119H218Q236 121 238 150V340H96Z" fill="url(#cfade)"/></g></mask>
<clipPath id="cc"><rect width="350" height="350"/></clipPath>
</defs>
<g clip-path="url(#cc)">
<rect width="350" height="350" fill="url(#ch)"/>
<g filter="url(#cb2)">
<rect x="286" y="60" width="13" height="150" fill="#ff70e0" opacity=".7"/>
<rect x="56" y="90" width="12" height="150" fill="#ffee10" opacity=".7"/>
<path d="M312 166Q330 160 352 164V235Q320 240 304 230Z" fill="#e0003c" opacity=".8"/>
</g>
<g filter="url(#cb1)"><rect x="-12" y="40" width="34" height="135" fill="#ff9a50" opacity=".55"/><rect x="326" y="40" width="36" height="135" fill="#ff9a60" opacity=".6"/></g>
<rect width="350" height="350" fill="url(#cw)"/>
<rect width="350" height="350" fill="url(#ch2)" mask="url(#cm)"/>
<g filter="url(#cb2)">
<rect x="168" y="120" width="13" height="130" fill="#10c4ff" opacity=".45"/>
<rect x="94" y="150" width="22" height="90" fill="#00901c" opacity=".5"/>
<rect x="222" y="140" width="18" height="100" fill="#0824a4" opacity=".5"/>
</g>
<rect width="350" height="350" fill="url(#ck)"/>
<g filter="url(#cb1)">
<rect x="318" y="225" width="40" height="105" fill="#6a2418" opacity=".8"/>
<rect x="-5" y="215" width="45" height="80" fill="#803808" opacity=".4"/>
<path d="M52 200H72L70 300H56Z" fill="#a09000" opacity=".5"/>
<rect x="150" y="200" width="60" height="80" fill="#005080" opacity=".4"/>
<rect x="110" y="215" width="50" height="60" fill="#003030" opacity=".3"/>
</g>
</g>
</svg><div style="position:absolute;left:785.0px;top:436.8px;width:13.5px;height:13.5px;background:#fff;box-shadow:inset 1px 1px 0 #a0a0a0,inset 2px 2px 0 #696969,inset -1px -1px 0 #fff,inset -2px -2px 0 #e3e3e3;"></div><svg style="position:absolute;left:785.0px;top:436.5px" width="14" height="14" viewBox="0 0 14 14"><path d="M3.3 6.2L5.6 8.6L10.6 3.6V6.4L5.6 11.4L3.3 9Z" fill="#000"/></svg>
<div class="t" style="left:806.00px;top:436.56px;font-size:16.00px;letter-spacing:-0.266px;color:#000;">Zoom</div>
<div style="position:absolute;left:872.0px;top:422.0px;width:245.0px;height:41.5px;background:#808080;border-left:1.5px solid #404040;border-bottom:1.5px solid #404040;"></div>
<div style="position:absolute;left:879.9px;top:430.2px;width:54.1px;height:28.6px;background:#f0f0f0;box-shadow:inset 1px 1px 0 #fff,inset -1px -1px 0 #696969,inset -2px -2px 0 #a0a0a0;"></div>
<div class="t" style="left:896.50px;top:436.56px;font-size:16.00px;color:#000;">Inp</div>
<div style="position:absolute;left:940.7px;top:430.2px;width:53.3px;height:28.6px;background:#f0f0f0;box-shadow:inset 1px 1px 0 #fff,inset -1px -1px 0 #696969,inset -2px -2px 0 #a0a0a0;"></div>
<div class="t" style="left:954.50px;top:436.56px;font-size:16.00px;color:#000;">I&gt;M</div>
<div style="position:absolute;left:998.9px;top:430.2px;width:53.9px;height:28.6px;background:#f0f0f0;box-shadow:inset 1px 1px 0 #fff,inset -1px -1px 0 #696969,inset -2px -2px 0 #a0a0a0;"></div>
<div class="t" style="left:1009.50px;top:436.56px;font-size:16.00px;color:#000;">Outp</div>
<div style="position:absolute;left:1059.8px;top:430.2px;width:53.6px;height:29.0px;background:#ffffcc;box-shadow:inset 1px 1px 0 #fff,inset -1px -1px 0 #404040,inset -2px -2px 0 #a0a0a0;"></div>
<div class="t" style="left:1064.00px;top:434.79px;font-size:19.50px;font-weight:bold;color:#000;">O&gt;M</div>
<div style="position:absolute;left:784.2px;top:461.4px;width:66.8px;height:29.4px;background:#f0f0f0;box-shadow:inset 1px 1px 0 #fff,inset -1px -1px 0 #696969,inset -2px -2px 0 #a0a0a0;"></div>
<div class="t" style="left:797.00px;top:467.96px;font-size:16.00px;color:#000;">Z-Out</div>
<div class="t" style="left:887.60px;top:474.16px;font-size:16.00px;letter-spacing:-0.343px;color:#000;">Black Pt. Comp.</div>
<div style="position:absolute;left:1002.7px;top:466.0px;width:110.9px;height:25.3px;background:#fff;box-shadow:inset 1px 1px 0 #a0a0a0,inset 2px 2px 0 #696969,inset -1px -1px 0 #fff,inset -2px -2px 0 #e3e3e3;"></div><div style="position:absolute;left:1092.1px;top:467.0px;width:20.5px;height:23.3px;background:#f0f0f0;box-shadow:inset 1px 1px 0 #fff,inset -1px -1px 0 #696969,inset -2px -2px 0 #a0a0a0;"></div><svg style="position:absolute;left:1098.1px;top:476.1px" width="9" height="5"><path d="M0 0H9L4.5 5Z" fill="#000"/></svg>
<div class="t" style="left:1007.50px;top:471.86px;font-size:16.00px;color:#000;">Both</div>
<div style="position:absolute;left:784.2px;top:499.2px;width:335.5px;height:39.3px;background:#808080;border:1.4px solid #000;"></div>
<div style="position:absolute;left:789.6px;top:504.0px;width:323.0px;height:28.6px;background:#fff;box-shadow:inset 1px 1px 0 #696969;overflow:hidden;"></div>
<div style="position:absolute;left:791.0px;top:504.0px;width:297.5px;height:28.6px;overflow:hidden;position:absolute;"><div class="t" style="left:1.5px;top:4.04px;font-size:19.8px;font-weight:bold;">3D L*a*b* (wire input, solid output)</div></div>
<div style="position:absolute;left:1091.0px;top:505.0px;width:21.0px;height:26.5px;background:#f0f0f0;box-shadow:inset 1px 1px 0 #fff,inset -1px -1px 0 #696969,inset -2px -2px 0 #a0a0a0;"></div>
<svg style="position:absolute;left:1096.5px;top:516.0px" width="10" height="5"><path d="M0 0H10L5.0 5Z" fill="#000"/></svg>
<div style="position:absolute;left:784.2px;top:540.0px;width:335.8px;height:239.3px;box-sizing:border-box;border:1.3px solid #000;background:transparent;"></div>
<div style="position:absolute;left:784.2px;top:733.0px;width:335.5px;height:1.4px;background:#000;"></div>
<div style="position:absolute;left:784.2px;top:689.0px;width:122.0px;height:45.2px;box-sizing:border-box;border:1.3px solid #000;background:transparent;"></div>
<div style="position:absolute;left:792.5px;top:549.5px;width:110.5px;height:34.1px;background:#f0f0f0;box-shadow:inset 1px 1px 0 #fff,inset -1px -1px 0 #696969,inset -2px -2px 0 #a0a0a0;"></div>
<div class="t" style="left:806.00px;top:557.76px;font-size:16.00px;letter-spacing:-0.109px;color:#000;">Reset scale</div>
<div style="position:absolute;left:908.0px;top:549.5px;width:106.8px;height:34.1px;background:#f0f0f0;box-shadow:inset 1px 1px 0 #fff,inset -1px -1px 0 #696969,inset -2px -2px 0 #a0a0a0;"></div>
<div class="t" style="left:924.00px;top:557.76px;font-size:16.00px;letter-spacing:-0.250px;color:#000;">Reset view</div>
<div style="position:absolute;left:1022.6px;top:549.5px;width:91.1px;height:34.1px;background:#f0f0f0;box-shadow:inset 1px 1px 0 #fff,inset -1px -1px 0 #696969,inset -2px -2px 0 #a0a0a0;"></div>
<div class="t" style="left:1037.30px;top:557.76px;font-size:16.00px;letter-spacing:-0.250px;color:#000;">Top view</div>
<div style="position:absolute;left:791.6px;top:594.7px;width:13.5px;height:13.5px;background:#fff;box-shadow:inset 1px 1px 0 #a0a0a0,inset 2px 2px 0 #696969,inset -1px -1px 0 #fff,inset -2px -2px 0 #e3e3e3;"></div><svg style="position:absolute;left:791.6px;top:594.4px" width="14" height="14" viewBox="0 0 14 14"><path d="M3.3 6.2L5.6 8.6L10.6 3.6V6.4L5.6 11.4L3.3 9Z" fill="#000"/></svg>
<div class="t" style="left:814.60px;top:594.16px;font-size:16.00px;letter-spacing:-0.349px;color:#000;">Light</div>
<div style="position:absolute;left:887.6px;top:589.0px;width:226.3px;height:25.0px;background:#fff;box-shadow:inset 1px 1px 0 #a0a0a0,inset 2px 2px 0 #696969,inset -1px -1px 0 #fff,inset -2px -2px 0 #e3e3e3;"></div><div style="position:absolute;left:1092.4px;top:590.0px;width:20.5px;height:23.0px;background:#f0f0f0;box-shadow:inset 1px 1px 0 #fff,inset -1px -1px 0 #696969,inset -2px -2px 0 #a0a0a0;"></div><svg style="position:absolute;left:1098.5px;top:599.0px" width="9" height="5"><path d="M0 0H9L4.5 5Z" fill="#000"/></svg>
<div class="t" style="left:892.50px;top:594.16px;font-size:16.00px;letter-spacing:-0.209px;color:#000;">Low res wireframe/smooth</div>
<div style="position:absolute;left:791.0px;top:620.7px;width:70.0px;height:26.5px;background:#f0f0f0;box-shadow:inset 1px 1px 0 #fff,inset -1px -1px 0 #404040,inset -2px -2px 0 #a0a0a0;"></div>
<div class="t" style="left:802.50px;top:624.96px;font-size:16.00px;letter-spacing:-0.088px;color:#000;">Rotate</div>
<div class="t" style="left:866.50px;top:629.06px;font-size:16.00px;letter-spacing:-0.170px;color:#000;">Transparency 0.42</div>
<div style="position:absolute;left:1001.3px;top:628.4px;width:112.4px;height:18.4px;background:#e3e3e3;"></div><div style="position:absolute;left:1001.3px;top:628.4px;width:20.3px;height:18.4px;background:#f0f0f0;box-shadow:inset 1px 1px 0 #fff,inset -1px -1px 0 #696969,inset -2px -2px 0 #a0a0a0;"></div><svg style="position:absolute;left:1008.8px;top:633.1px" width="5" height="9"><path d="M5 0V9L0 4.5Z" fill="#000"/></svg><div style="position:absolute;left:1093.4px;top:628.4px;width:20.3px;height:18.4px;background:#f0f0f0;box-shadow:inset 1px 1px 0 #fff,inset -1px -1px 0 #696969,inset -2px -2px 0 #a0a0a0;"></div><svg style="position:absolute;left:1101.2px;top:633.1px" width="5" height="9"><path d="M0 0V9L5 4.5Z" fill="#000"/></svg><div style="position:absolute;left:1047.6px;top:628.4px;width:11.4px;height:18.4px;background:#f0f0f0;box-shadow:inset 1px 1px 0 #fff,inset -1px -1px 0 #696969,inset -2px -2px 0 #a0a0a0;"></div>
<div style="position:absolute;left:791.0px;top:656.6px;width:70.0px;height:25.6px;background:#f0f0f0;box-shadow:inset 1px 1px 0 #fff,inset -1px -1px 0 #696969,inset -2px -2px 0 #a0a0a0;"></div>
<div class="t" style="left:809.40px;top:660.76px;font-size:16.00px;letter-spacing:-0.951px;color:#000;">More</div>
<div class="t" style="left:882.80px;top:657.76px;font-size:16.00px;letter-spacing:0.045px;color:#000;">Vectors 0.8</div>
<div style="position:absolute;left:973.3px;top:657.5px;width:140.4px;height:18.7px;background:#e3e3e3;"></div><div style="position:absolute;left:973.3px;top:657.5px;width:20.3px;height:18.7px;background:#f0f0f0;box-shadow:inset 1px 1px 0 #fff,inset -1px -1px 0 #696969,inset -2px -2px 0 #a0a0a0;"></div><svg style="position:absolute;left:980.8px;top:662.4px" width="5" height="9"><path d="M5 0V9L0 4.5Z" fill="#000"/></svg><div style="position:absolute;left:1093.4px;top:657.5px;width:20.3px;height:18.7px;background:#f0f0f0;box-shadow:inset 1px 1px 0 #fff,inset -1px -1px 0 #696969,inset -2px -2px 0 #a0a0a0;"></div><svg style="position:absolute;left:1101.2px;top:662.4px" width="5" height="9"><path d="M0 0V9L5 4.5Z" fill="#000"/></svg><div style="position:absolute;left:1065.3px;top:657.5px;width:9.4px;height:18.7px;background:#f0f0f0;box-shadow:inset 1px 1px 0 #fff,inset -1px -1px 0 #696969,inset -2px -2px 0 #a0a0a0;"></div>
<div style="position:absolute;left:791.0px;top:696.3px;width:108.0px;height:31.3px;background:#f0f0f0;box-shadow:inset 1px 1px 0 #fff,inset -1px -1px 0 #696969,inset -2px -2px 0 #a0a0a0;"></div>
<div class="t" style="left:800.80px;top:701.52px;font-size:19.00px;font-weight:bold;letter-spacing:0.165px;color:#000;">Print Test</div>
<div class="t" style="left:1037.30px;top:684.96px;font-size:16.00px;letter-spacing:0.062px;color:#000;">Saturation</div>
<div class="t" style="left:961.30px;top:709.26px;font-size:16.00px;color:#000;">1</div>
<div style="position:absolute;left:974.1px;top:707.2px;width:139.6px;height:18.4px;background:#e3e3e3;"></div><div style="position:absolute;left:974.1px;top:707.2px;width:20.3px;height:18.4px;background:#f0f0f0;box-shadow:inset 1px 1px 0 #fff,inset -1px -1px 0 #696969,inset -2px -2px 0 #a0a0a0;"></div><svg style="position:absolute;left:981.6px;top:711.9px" width="5" height="9"><path d="M5 0V9L0 4.5Z" fill="#000"/></svg><div style="position:absolute;left:1093.4px;top:707.2px;width:20.3px;height:18.4px;background:#f0f0f0;box-shadow:inset 1px 1px 0 #fff,inset -1px -1px 0 #696969,inset -2px -2px 0 #a0a0a0;"></div><svg style="position:absolute;left:1101.2px;top:711.9px" width="5" height="9"><path d="M0 0V9L5 4.5Z" fill="#000"/></svg><div style="position:absolute;left:1073.3px;top:707.2px;width:19.5px;height:18.4px;background:#f0f0f0;box-shadow:inset 1px 1px 0 #fff,inset -1px -1px 0 #696969,inset -2px -2px 0 #a0a0a0;"></div>
<div style="position:absolute;left:791.6px;top:741.8px;width:320.3px;height:28.4px;box-shadow:inset 1px 1px 0 #a0a0a0,inset 2px 2px 0 #808080,inset -1px -1px 0 #fff;"></div>
<div class="t" style="left:909.30px;top:745.06px;font-size:16.00px;letter-spacing:0.011px;color:#000;">not selected</div>
<div style="position:absolute;left:792.3px;top:785.3px;width:199.9px;height:83.7px;box-sizing:border-box;border:1.3px solid #000;background:transparent;"></div>
<div class="t" style="left:806.60px;top:796.62px;font-size:19.00px;font-weight:bold;letter-spacing:0.090px;color:#000;">Display A</div>
<div style="position:absolute;left:920.5px;top:791.7px;width:64.9px;height:34.9px;background:#f0f0f0;box-shadow:inset 1px 1px 0 #fff,inset -1px -1px 0 #696969,inset -2px -2px 0 #a0a0a0;"></div>
<div class="t" style="left:929.40px;top:798.07px;font-size:20.00px;font-weight:bold;letter-spacing:0.128px;color:#000;">View</div>
<div style="position:absolute;left:798.5px;top:829.2px;width:53.7px;height:25.0px;background:#fff;box-shadow:inset 1px 1px 0 #a0a0a0,inset 2px 2px 0 #696969,inset -1px -1px 0 #fff,inset -2px -2px 0 #e3e3e3;"></div><div style="position:absolute;left:830.7px;top:830.2px;width:20.5px;height:23.0px;background:#f0f0f0;box-shadow:inset 1px 1px 0 #fff,inset -1px -1px 0 #696969,inset -2px -2px 0 #a0a0a0;"></div><svg style="position:absolute;left:836.8px;top:839.2px" width="9" height="5"><path d="M0 0H9L4.5 5Z" fill="#000"/></svg>
<div class="t" style="left:802.50px;top:833.76px;font-size:16.00px;color:#000;">3</div>
<div class="t" style="left:865.30px;top:836.06px;font-size:16.00px;color:#000;">IN</div>
<div class="t" style="left:888.50px;top:836.06px;font-size:16.00px;letter-spacing:-0.737px;color:#000;">OUT</div>
<div style="position:absolute;left:932.3px;top:830.6px;width:53.8px;height:25.4px;background:#fff;box-shadow:inset 1px 1px 0 #a0a0a0,inset 2px 2px 0 #696969,inset -1px -1px 0 #fff,inset -2px -2px 0 #e3e3e3;"></div><div style="position:absolute;left:964.6px;top:831.6px;width:20.5px;height:23.4px;background:#f0f0f0;box-shadow:inset 1px 1px 0 #fff,inset -1px -1px 0 #696969,inset -2px -2px 0 #a0a0a0;"></div><svg style="position:absolute;left:970.6px;top:840.8px" width="9" height="5"><path d="M0 0H9L4.5 5Z" fill="#000"/></svg>
<div class="t" style="left:936.40px;top:835.06px;font-size:16.00px;color:#000;">2</div>
<div style="position:absolute;left:792.3px;top:874.3px;width:199.9px;height:84.7px;box-sizing:border-box;border:1.3px solid #000;background:transparent;"></div>
<div class="t" style="left:806.60px;top:886.62px;font-size:19.00px;font-weight:bold;letter-spacing:-0.236px;color:#000;">Display B</div>
<div style="position:absolute;left:921.2px;top:881.7px;width:65.5px;height:34.9px;background:#f0f0f0;box-shadow:inset 1px 1px 0 #fff,inset -1px -1px 0 #696969,inset -2px -2px 0 #a0a0a0;"></div>
<div class="t" style="left:930.30px;top:888.07px;font-size:20.00px;font-weight:bold;letter-spacing:0.128px;color:#000;">View</div>
<div style="position:absolute;left:798.5px;top:920.6px;width:53.7px;height:25.4px;background:#fff;box-shadow:inset 1px 1px 0 #a0a0a0,inset 2px 2px 0 #696969,inset -1px -1px 0 #fff,inset -2px -2px 0 #e3e3e3;"></div><div style="position:absolute;left:830.7px;top:921.6px;width:20.5px;height:23.4px;background:#f0f0f0;box-shadow:inset 1px 1px 0 #fff,inset -1px -1px 0 #696969,inset -2px -2px 0 #a0a0a0;"></div><svg style="position:absolute;left:836.8px;top:930.8px" width="9" height="5"><path d="M0 0H9L4.5 5Z" fill="#000"/></svg>
<div class="t" style="left:802.50px;top:925.06px;font-size:16.00px;color:#000;">2</div>
<div class="t" style="left:865.30px;top:926.06px;font-size:16.00px;color:#000;">IN</div>
<div class="t" style="left:888.50px;top:926.06px;font-size:16.00px;letter-spacing:-0.737px;color:#000;">OUT</div>
<div style="position:absolute;left:934.5px;top:920.6px;width:53.5px;height:25.4px;background:#fff;box-shadow:inset 1px 1px 0 #a0a0a0,inset 2px 2px 0 #696969,inset -1px -1px 0 #fff,inset -2px -2px 0 #e3e3e3;"></div><div style="position:absolute;left:966.5px;top:921.6px;width:20.5px;height:23.4px;background:#f0f0f0;box-shadow:inset 1px 1px 0 #fff,inset -1px -1px 0 #696969,inset -2px -2px 0 #a0a0a0;"></div><svg style="position:absolute;left:972.5px;top:930.8px" width="9" height="5"><path d="M0 0H9L4.5 5Z" fill="#000"/></svg>
<div class="t" style="left:938.60px;top:925.06px;font-size:16.00px;color:#000;">4</div>
<div style="position:absolute;left:1018.5px;top:785.3px;width:95.7px;height:33.0px;background:#f0f0f0;box-shadow:inset 1px 1px 0 #fff,inset -1px -1px 0 #696969,inset -2px -2px 0 #a0a0a0;"></div>
<div class="t" style="left:1050.00px;top:793.36px;font-size:16.00px;letter-spacing:-0.435px;color:#000;">Help</div>
<div style="position:absolute;left:1018.5px;top:833.2px;width:95.7px;height:33.0px;background:#f0f0f0;box-shadow:inset 1px 1px 0 #fff,inset -1px -1px 0 #696969,inset -2px -2px 0 #a0a0a0;"></div>
<div class="t" style="left:1054.20px;top:841.26px;font-size:16.00px;letter-spacing:-0.691px;color:#000;">Exit</div>
<svg style="position:absolute;left:1003px;top:906px" width="79.5" height="48.3" viewBox="0 0 79.5 48.3">
<rect width="79.5" height="48.3" fill="#0808a0"/>
<path d="M6 0H79.5V10.2L9 0.8Z" fill="#067a12"/>
<path d="M4 0.6L9 0.8L79.5 10.2V17.8L4 2.2Z" fill="#f4f4f0"/>
<path d="M3.4 2.2L79.5 17.8V23.2L3 3.2Z" fill="#d4401c"/>
<path d="M3 3.2L79.5 23.2V25.4L3 3.9Z" fill="#f0e8f0"/>
<path d="M3 3.9L79.5 25.6V28.6L3 4.6Z" fill="#b040b0"/>
<path d="M3 4.6L79.5 28.6V30L3 5Z" fill="#e8d8f0" opacity=".8"/>
<path d="M4.3 8.2Q6.5 6.2 9.7 7L31.3 19.8L15 27.4Q10 28 7.5 25.2Q2.6 17 4.3 8.2Z" fill="#fbfac8"/>
<text x="2" y="44.4" font-family="Liberation Serif, serif" font-style="italic" font-weight="normal" font-size="15.8" fill="#fff" stroke="#fff" stroke-width=".35" textLength="76.5" lengthAdjust="spacingAndGlyphs">Gamutvision</text>
</svg>
<div class="t" style="left:656.50px;top:778.76px;font-size:16.00px;letter-spacing:-0.170px;color:#000;">Gamut volumes</div>
<div class="t" style="left:677.20px;top:798.46px;font-size:16.00px;letter-spacing:-0.130px;color:#000;">(1)  1225088</div>
<div class="t" style="left:686.40px;top:818.56px;font-size:16.00px;letter-spacing:-0.174px;color:#000;">(2)  817578</div>
<div class="t" style="left:20.30px;top:855.17px;font-size:20.00px;font-weight:bold;color:#000;">1</div>
<div style="position:absolute;left:38.0px;top:849.3px;width:353.0px;height:26.0px;background:#ffffcc;box-shadow:inset 1px 1px 0 #a0a0a0,inset 2px 2px 0 #696969,inset -1px -1px 0 #fff,inset -2px -2px 0 #e3e3e3;"></div><div style="position:absolute;left:369.5px;top:850.3px;width:20.5px;height:24.0px;background:#f0f0f0;box-shadow:inset 1px 1px 0 #fff,inset -1px -1px 0 #696969,inset -2px -2px 0 #a0a0a0;"></div><svg style="position:absolute;left:375.6px;top:859.8px" width="9" height="5"><path d="M0 0H9L4.5 5Z" fill="#000"/></svg>
<div class="t" style="left:42.20px;top:856.06px;font-size:16.00px;letter-spacing:0.098px;color:#000;">AdobeRGB1998.icc</div>
<div style="position:absolute;left:38.0px;top:877.2px;width:311.0px;height:50.7px;background:#4a7cc8;border-right:2px solid #1c3a78;border-bottom:1.5px solid #2a4a90;"></div>
<div style="position:absolute;left:45.1px;top:888.3px;width:65.1px;height:35.4px;background:#ffffcc;box-shadow:inset 1px 1px 0 #fff,inset -1px -1px 0 #404040,inset -2px -2px 0 #a0a0a0;"></div>
<div class="t" style="left:53.30px;top:894.57px;font-size:20.00px;font-weight:bold;letter-spacing:0.162px;color:#000;">View</div>
<div style="position:absolute;left:143.1px;top:889.2px;width:198.9px;height:26.0px;background:#ffffe6;box-shadow:inset 1px 1px 0 #a0a0a0,inset 2px 2px 0 #696969,inset -1px -1px 0 #fff,inset -2px -2px 0 #e3e3e3;"></div><div style="position:absolute;left:320.5px;top:890.2px;width:20.5px;height:24.0px;background:#f0f0f0;box-shadow:inset 1px 1px 0 #fff,inset -1px -1px 0 #696969,inset -2px -2px 0 #a0a0a0;"></div><svg style="position:absolute;left:326.6px;top:899.7px" width="9" height="5"><path d="M0 0H9L4.5 5Z" fill="#000"/></svg>
<div class="t" style="left:148.40px;top:894.16px;font-size:16.00px;letter-spacing:-0.180px;color:#000;">None (or Print Test)</div>
<div class="t" style="left:358.30px;top:896.06px;font-size:16.00px;letter-spacing:-0.229px;color:#000;">Rendering</div>
<div style="position:absolute;left:20.2px;top:908.3px;width:4.4px;height:22.8px;background:#5a5a5a;box-shadow:0 0 1.5px 1px #c8c8c8;"></div>
<div class="t" style="left:20.20px;top:933.77px;font-size:20.00px;font-weight:bold;color:#000;">2</div>
<div style="position:absolute;left:38.0px;top:928.3px;width:353.0px;height:25.2px;background:#e0ffe0;box-shadow:inset 1px 1px 0 #a0a0a0,inset 2px 2px 0 #696969,inset -1px -1px 0 #fff,inset -2px -2px 0 #e3e3e3;"></div><div style="position:absolute;left:369.5px;top:929.3px;width:20.5px;height:23.2px;background:#f0f0f0;box-shadow:inset 1px 1px 0 #fff,inset -1px -1px 0 #696969,inset -2px -2px 0 #a0a0a0;"></div><svg style="position:absolute;left:375.6px;top:938.4px" width="9" height="5"><path d="M0 0H9L4.5 5Z" fill="#000"/></svg>
<div style="position:absolute;left:40.0px;top:930.3px;width:329.5px;height:21.2px;overflow:hidden;"><div class="t" style="left:2.2px;top:2.46px;font-size:16px;">20150519 3880_RR Arctic Polar Gloss@PPPGP</div></div>
<div style="position:absolute;left:399.5px;top:849.3px;width:352.5px;height:26.0px;background:#f0f0f0;box-shadow:inset 1px 1px 0 #a0a0a0,inset 2px 2px 0 #696969,inset -1px -1px 0 #fff,inset -2px -2px 0 #e3e3e3;"></div><div style="position:absolute;left:730.5px;top:850.3px;width:20.5px;height:24.0px;background:#f0f0f0;box-shadow:inset 1px 1px 0 #fff,inset -1px -1px 0 #696969,inset -2px -2px 0 #a0a0a0;"></div><svg style="position:absolute;left:736.5px;top:859.8px" width="9" height="5"><path d="M0 0H9L4.5 5Z" fill="#000"/></svg>
<div class="t" style="left:404.30px;top:856.06px;font-size:16.00px;letter-spacing:-0.340px;color:#000;">ProPhoto.icm</div>
<div class="t" style="left:758.30px;top:855.17px;font-size:20.00px;font-weight:bold;color:#000;">3</div>
<div style="position:absolute;left:441.0px;top:877.2px;width:311.0px;height:50.7px;background:#808080;border-left:1.5px solid #404040;border-right:1.5px solid #303030;"></div>
<div style="position:absolute;left:446.7px;top:889.6px;width:200.0px;height:26.3px;background:#f0f0f0;box-shadow:inset 1px 1px 0 #a0a0a0,inset 2px 2px 0 #696969,inset -1px -1px 0 #fff,inset -2px -2px 0 #e3e3e3;"></div><div style="position:absolute;left:625.2px;top:890.6px;width:20.5px;height:24.3px;background:#f0f0f0;box-shadow:inset 1px 1px 0 #fff,inset -1px -1px 0 #696969,inset -2px -2px 0 #a0a0a0;"></div><svg style="position:absolute;left:631.2px;top:900.2px" width="9" height="5"><path d="M0 0H9L4.5 5Z" fill="#000"/></svg>
<div class="t" style="left:451.30px;top:894.16px;font-size:16.00px;letter-spacing:-0.717px;color:#000;">None</div>
<div style="position:absolute;left:681.9px;top:888.3px;width:64.4px;height:34.8px;background:#f0f0f0;box-shadow:inset 1px 1px 0 #fff,inset -1px -1px 0 #696969,inset -2px -2px 0 #a0a0a0;"></div>
<div class="t" style="left:691.20px;top:894.57px;font-size:20.00px;font-weight:bold;letter-spacing:0.162px;color:#000;">View</div>
<div style="position:absolute;left:399.5px;top:928.3px;width:352.5px;height:25.2px;background:#f0f0f0;box-shadow:inset 1px 1px 0 #a0a0a0,inset 2px 2px 0 #696969,inset -1px -1px 0 #fff,inset -2px -2px 0 #e3e3e3;"></div><div style="position:absolute;left:730.5px;top:929.3px;width:20.5px;height:23.2px;background:#f0f0f0;box-shadow:inset 1px 1px 0 #fff,inset -1px -1px 0 #696969,inset -2px -2px 0 #a0a0a0;"></div><svg style="position:absolute;left:736.5px;top:938.4px" width="9" height="5"><path d="M0 0H9L4.5 5Z" fill="#000"/></svg>
<div class="t" style="left:404.30px;top:932.76px;font-size:16.00px;letter-spacing:-0.036px;color:#000;">RR APGloss Ep3880.icc</div>
<div class="t" style="left:758.30px;top:933.17px;font-size:20.00px;font-weight:bold;color:#000;">4</div>
<div class="t" style="left:145.60px;top:831.24px;font-size:13.30px;color:#a0a0a0;">a*</div>
<div class="t" style="left:457.60px;top:831.24px;font-size:13.30px;color:#a0a0a0;">b*</div></div></body></html>
